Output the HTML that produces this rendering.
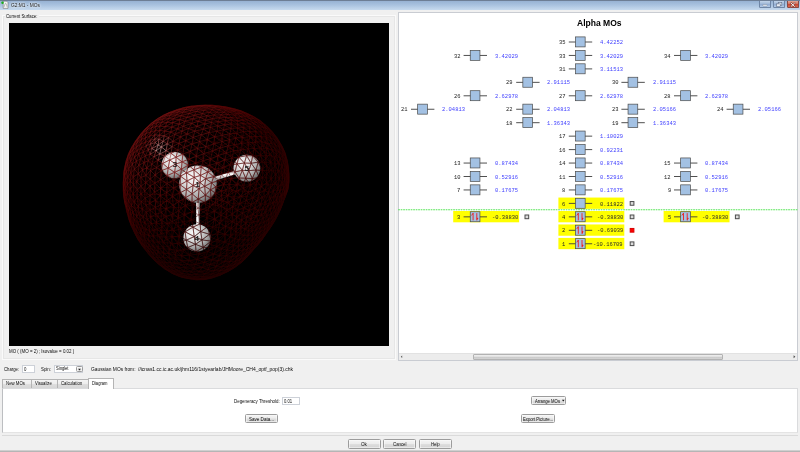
<!DOCTYPE html>
<html><head><meta charset="utf-8"><title>G2:M1 - MOs</title>
<style>
html,body{margin:0;padding:0;}
body{width:800px;height:452px;overflow:hidden;background:#f0f0f0;position:relative;font-family:"Liberation Sans",sans-serif;}
.a{position:absolute;box-sizing:border-box;}
.t{position:absolute;white-space:pre;display:block;}
#tb{left:0;top:0;width:800px;height:9.6px;background:linear-gradient(#6d7e95 0,#6d7e95 0.8px,#98b3d4 1.2px,#a9c2df 5px,#c4d8ed 9.6px);}
.wb{top:0.9px;height:7px;border:0.5px solid #6f86a6;border-top:none;border-radius:0 0 1.5px 1.5px;background:linear-gradient(#c3d5ea,#9db6d6 50%,#8faad0 52%,#b4cbe6);}
#canvas{left:9px;top:22.6px;width:380px;height:323px;background:#000;}
#grp{left:2px;top:15px;width:394px;height:345px;border:1px solid #fafafa;box-shadow:0 0 0 1px #e6e6e6 inset;}
#rp{left:398.3px;top:12.4px;width:399.6px;height:348.2px;background:#fff;border:0.9px solid #c9ccd2;}
#sb{left:399.1px;top:353.4px;width:398px;height:6.5px;background:#ececec;border-top:0.5px solid #e2e2e2;}
#thumb{left:472.5px;top:353.6px;width:250.5px;height:6.1px;border:0.5px solid #b2b2b2;border-radius:1px;background:linear-gradient(#f0f0f0,#dedede 45%,#cacaca 55%,#d4d4d4);}
.inp{background:#fff;border:1px solid #cdd1d8;}
.btn{border:0.6px solid #9c9c9c;border-radius:1.5px;background:linear-gradient(#f4f4f4,#ececec 48%,#dedede 52%,#d2d2d2);box-shadow:0 0 0 0.5px #fcfcfc inset;}
.tab{top:378.8px;height:9.4px;border:1px solid #b4b4b4;border-bottom:none;background:linear-gradient(#f4f4f4,#ececec 50%,#dedede 52%,#d6d6d6);}
#pane{left:2.4px;top:387.6px;width:795.4px;height:45.6px;background:#fff;border:1px solid #dadbdd;border-left-color:#bcbec1;border-bottom-color:#e4e4e4;}
#tabsel{left:88.3px;top:377.5px;width:26px;height:11px;background:#fff;border:1px solid #b4b4b4;border-bottom:none;}
</style></head>
<body>
<div class="a" id="tb"></div>
<div class="a wb" style="left:758.8px;width:12.4px;"></div>
<div class="a wb" style="left:773px;width:12.2px;"></div>
<div class="a wb" style="left:786.6px;width:12.4px;background:linear-gradient(#e3a898,#d27461 48%,#c44632 52%,#d96a52);border-color:#8a4a44;"></div>
<svg class="a" style="left:0;top:0" width="800" height="12" viewBox="0 0 800 12">
 <!-- app icon -->
 <path d="M3.2 1.2h3.4l1.4 1.4v5.8h-4.8z" fill="#f4f4f4" stroke="#6a6a6a" stroke-width="0.55"/>
 <path d="M4.2 6.8c0.4-2 1-3.4 1.5-3.4s0.9 1.5 1.3 3.4" fill="none" stroke="#8a8a8a" stroke-width="0.6"/>
 <circle cx="2.5" cy="2.7" r="1.2" fill="#18b018"/>
 <!-- minimize -->
 <rect x="762.8" y="4.5" width="4.4" height="1.5" rx="0.5" fill="#f4f6fa" stroke="#66768e" stroke-width="0.4"/>
 <!-- restore -->
 <rect x="778.2" y="2.6" width="3.6" height="2.8" fill="#e8edf4" stroke="#55627a" stroke-width="0.5"/>
 <rect x="776.6" y="3.9" width="3.6" height="2.8" fill="#e8edf4" stroke="#55627a" stroke-width="0.5"/>
 <!-- close -->
 <path d="M791.1 3.2l3.4 3.2M794.5 3.2l-3.4 3.2" stroke="#7e3a32" stroke-width="1.7" stroke-linecap="round"/>
 <path d="M791.1 3.2l3.4 3.2M794.5 3.2l-3.4 3.2" stroke="#fff" stroke-width="0.95" stroke-linecap="round"/>
</svg>

<div class="a" id="grp"></div>
<div class="a" style="left:5px;top:13px;width:34px;height:6px;background:#f0f0f0;"></div>
<div class="a" id="canvas">
<svg width="380" height="322.8" viewBox="9 22.6 380 322.8" style="position:absolute;left:0;top:0;filter:blur(0.4px)">
<defs><radialGradient id="sph" cx="0.36" cy="0.32" r="0.75"><stop offset="0" stop-color="#fbfbfb"/><stop offset="0.3" stop-color="#e2e2e2"/><stop offset="0.7" stop-color="#a8a8a8"/><stop offset="1" stop-color="#626262"/></radialGradient><linearGradient id="bnd" x1="0" y1="0" x2="1" y2="0"><stop offset="0" stop-color="#b0b0b0"/><stop offset="0.4" stop-color="#ffffff"/><stop offset="1" stop-color="#808080"/></linearGradient><linearGradient id="bnd2" x1="0" y1="0" x2="0" y2="1"><stop offset="0" stop-color="#c8c8c8"/><stop offset="0.4" stop-color="#ffffff"/><stop offset="1" stop-color="#808080"/></linearGradient><clipPath id="ac"><circle cx="174.8" cy="164.7" r="13.2" /><circle cx="246.9" cy="167.8" r="13.4" /><circle cx="198.0" cy="183.8" r="18.8" /><circle cx="197.0" cy="237.5" r="13.6" /></clipPath>
<g id="fm" fill="none">
<path stroke="#250000" d="M183.2 275.0L173.9 270.8M279.6 208.2L281.3 206.1M233.3 258.7L233.2 255.7M204.3 274.3L210.7 270.7M246.4 228.7L247.7 234.1M232.8 246.3L227.1 252.9M175.8 273.8L183.2 275.0M249.1 251.7L251.8 250.2M191.3 276.9L188.6 274.5M156.2 261.1L150.1 254.6M251.5 251.5L254.2 248.2M282.1 202.2L282.1 199.0M266.2 224.9L264.5 230.1M212.1 247.3L204.2 253.6M195.7 279.3L186.5 277.9M254.0 245.8L256.1 241.1M235.5 265.4L228.0 269.7M241.0 257.9L244.0 257.2M173.9 270.8L180.2 271.5M242.5 240.6L242.8 245.8M221.5 272.6L219.7 271.2M279.6 208.2L282.1 202.2M164.2 261.6L163.7 256.7M251.8 250.2L257.4 244.0M228.0 264.3L227.4 261.1M204.2 253.6L196.0 251.4M172.8 273.3L178.5 275.7M243.3 252.8L245.7 252.9M259.0 240.1L263.5 234.2M241.8 260.6L244.0 257.2M261.5 230.9L256.8 237.4M248.0 244.0L242.7 250.6M272.5 221.6L276.2 214.8M236.1 262.1L232.9 265.4M235.5 265.4L232.9 265.4M172.2 267.0L164.2 261.6M164.4 268.3L170.4 271.8M247.7 234.1L242.5 240.6M242.7 250.6L243.3 252.8M270.4 208.7L270.4 213.8M167.6 268.9L166.0 265.7M150.1 254.6L149.0 251.4M240.9 262.5L233.7 267.8M198.9 263.1L191.8 265.3M243.3 252.8L241.0 257.9M232.3 240.4L226.7 246.9M227.1 252.9L226.7 246.9M162.6 266.6L167.6 268.9M253.1 237.7L252.5 242.6M187.2 270.9L185.1 266.7M220.2 247.4L212.5 254.0M227.4 261.1L221.4 262.3M237.8 240.9L238.2 246.3M229.7 265.8L236.1 262.1M222.1 266.1L221.4 262.3M183.2 275.0L188.6 274.5M251.8 250.2L254.2 248.2M166.0 265.7L172.2 267.0M240.9 262.5L238.3 264.2M257.4 244.0L259.0 240.1M257.1 232.5L253.1 237.7M182.0 256.1L176.1 257.6M277.1 201.9L273.8 208.4M178.6 267.4L171.1 262.8M266.2 224.9L269.5 223.3M283.4 200.5L286.3 193.1M254.0 245.8L257.4 244.0M171.1 262.8L169.1 257.4M219.7 271.2L212.3 273.2M254.2 248.2L259.7 242.2M227.4 261.1L227.6 257.7M210.4 277.9L219.3 275.0M252.4 227.8L246.4 228.7M181.5 276.7L178.5 275.7M261.9 238.3L266.3 232.1M185.2 276.9L175.8 273.8M284.5 196.0L282.1 202.2M222.0 258.2L214.2 263.4M151.8 257.3L156.2 261.1M228.0 264.3L223.3 268.2M233.7 267.8L231.2 268.9M191.8 265.3L183.0 261.4M259.0 240.1L261.9 238.3M200.1 278.0L197.8 276.3M219.0 241.7L212.1 247.3M156.2 261.1L160.6 263.6M220.2 247.4L219.0 241.7M261.7 221.5L262.0 226.5M256.8 237.4L253.1 237.7M263.5 234.2L264.5 230.1M233.3 258.7L237.7 258.4M167.6 268.9L173.9 270.8M164.2 261.6L171.1 262.8M276.2 214.8L279.6 208.2M216.5 275.4L208.8 277.4M266.4 215.0L261.7 221.5M256.1 241.1L260.4 235.9M261.5 230.9L257.1 232.5M187.2 270.9L193.8 269.4M210.7 270.7L202.5 271.2M273.0 223.3L276.6 216.9M162.6 266.6L156.2 261.1M172.2 267.0L178.6 267.4M249.2 254.2L254.2 248.2M264.3 236.0L268.7 229.7M247.7 234.1L242.2 235.0M164.4 268.3L162.6 266.6M222.0 258.2L220.1 253.5M232.8 246.3L237.8 240.9M242.5 240.6L237.8 240.9M150.1 254.6L154.1 257.6M225.6 269.4L228.0 269.7M216.5 275.4L221.5 272.6M233.3 258.7L227.4 261.1M257.4 244.0L259.7 242.2M149.0 251.4L153.5 253.9M260.4 235.9L263.5 234.2M276.7 207.4L276.6 211.4M233.2 255.7L238.4 254.7M191.3 276.9L183.2 275.0M264.5 230.1L269.5 223.3M273.0 213.8L269.7 219.6M238.7 261.9L232.9 265.4M261.9 238.3L264.3 236.0M262.0 226.5L257.1 232.5M267.9 228.2L272.5 221.6M278.2 213.1L281.3 206.1M212.5 254.0L212.1 247.3M225.6 269.4L232.9 265.4M221.5 272.6L215.1 274.6M183.2 275.0L180.2 271.5M244.0 257.2L249.1 251.7M279.6 208.2L279.5 205.4M214.2 263.4L206.7 263.9M204.2 253.6L197.7 257.9M208.8 277.4L215.1 274.6M257.1 232.5L252.7 233.8M246.4 228.7L242.2 235.0M232.8 246.3L226.7 246.9M253.1 237.7L248.2 238.6M178.6 267.4L185.1 266.7M188.6 274.5L187.2 270.9M281.3 206.1L282.1 202.2M272.5 221.6L273.6 217.0M156.2 261.1L154.1 257.6M171.1 262.8L177.5 262.9M219.3 275.0L213.3 277.2M138.6 240.1L141.9 244.9M221.5 272.6L225.6 269.4M232.8 246.3L238.2 246.3M242.7 250.6L238.6 250.5M242.5 240.6L238.2 246.3M167.6 268.9L160.6 263.6M153.5 253.9L157.1 254.5M244.5 259.1L238.3 264.2M256.1 241.1L259.0 240.1M143.1 246.7L146.9 251.5M170.4 271.8L167.6 268.9M206.7 263.9L199.5 267.2M195.7 279.3L202.6 279.1M242.8 245.8L242.7 250.6M183.0 261.4L185.1 266.7M172.2 267.0L171.1 262.8M233.2 255.7L227.6 257.7M188.4 254.0L182.0 256.1M263.5 234.2L266.3 232.1M208.0 267.4L206.7 263.9M213.6 259.1L205.1 258.6M242.7 250.6L238.4 254.7M198.9 263.1L190.4 260.1M251.7 222.1L252.4 227.8M236.1 262.1L241.0 257.9M257.1 232.5L256.8 237.4M232.9 265.4L228.0 269.7M253.1 237.7L248.0 244.0M158.1 263.5L151.8 257.3M225.6 269.4L219.7 271.2M232.3 262.8L229.7 265.8M171.1 262.8L163.7 256.7M254.2 248.2L257.4 244.0M215.3 267.2L210.7 270.7M261.9 238.3L263.5 234.2M276.2 214.8L278.2 213.1M160.6 263.6L159.6 260.2M204.2 253.6L203.2 246.9M202.6 279.1L200.1 278.0M257.4 244.0L261.9 238.3M231.2 268.9L223.5 272.7M225.6 241.8L220.2 247.4M238.2 246.3L238.6 250.5M264.5 230.1L267.9 228.2M199.5 267.2L193.8 269.4M238.3 264.2L233.7 267.8M267.9 228.2L270.9 225.9M216.5 275.4L219.3 275.0M151.8 257.3L146.9 251.5M213.6 259.1L212.5 254.0M222.0 258.2L213.6 259.1M228.0 264.3L229.7 265.8M159.6 260.2L153.5 253.9M202.6 279.1L208.8 277.4M276.7 207.4L273.0 213.8M266.4 215.0L266.8 220.7M206.2 276.4L197.8 276.3M273.0 223.3L274.8 219.6M206.7 263.9L205.1 258.6M283.4 200.5L282.5 203.6M219.7 271.2L223.3 268.2M183.0 261.4L177.5 262.9M250.6 247.6L256.1 241.1M197.7 257.9L188.4 254.0M261.7 221.5L257.4 227.3M222.1 266.1L216.6 269.5M263.5 234.2L267.9 228.2M248.2 238.6L242.8 245.8M202.5 271.2L193.8 269.4M198.9 263.1L197.7 257.9M177.5 262.9L169.1 257.4M186.5 277.9L178.5 275.7M246.2 257.6L244.5 259.1M272.5 221.6L274.8 219.6M238.7 261.9L235.5 265.4M190.4 260.1L183.0 261.4M222.1 266.1L223.3 268.2M262.0 226.5L261.5 230.9M267.9 228.2L269.5 223.3M244.0 257.2L245.7 252.9M214.2 263.4L208.0 267.4M269.7 219.6L266.2 224.9M188.6 274.5L180.2 271.5M220.1 253.5L212.5 254.0M249.2 254.2L251.5 251.5M238.7 261.9L236.1 262.1M204.0 279.2L202.6 279.1M232.3 240.4L237.8 240.9M262.2 215.4L261.7 221.5M197.8 276.3L195.4 273.3M273.6 217.0L276.2 214.8M244.5 259.1L240.9 262.5M191.8 265.3L190.4 260.1M266.4 215.0L262.2 215.4M279.4 201.5L279.5 205.4M232.8 246.3L232.3 240.4M143.1 246.7L141.9 244.9M276.7 207.4L279.5 205.4M257.2 221.3L252.4 227.8M238.7 261.9L241.0 257.9M266.3 232.1L270.9 225.9M170.4 271.8L162.6 266.6M284.5 196.0L286.3 193.1M273.0 213.8L273.6 217.0M197.7 257.9L196.0 251.4M233.2 255.7L227.4 261.1M261.7 221.5L257.2 221.3M221.4 262.3L214.2 263.4M213.6 259.1L206.7 263.9M244.0 257.2L246.4 256.3M244.5 259.1L241.8 260.6M286.3 193.1L285.2 196.5M279.4 201.5L282.1 199.0M191.3 276.9L197.8 276.3M257.4 227.3L257.1 232.5M270.9 225.9L272.5 221.6M280.1 209.8L281.3 206.1M284.5 196.0L283.4 200.5M273.0 213.8L270.4 213.8M206.7 263.9L198.9 263.1M242.8 245.8L238.6 250.5M246.4 256.3L249.1 251.7M233.2 255.7L232.8 251.4M197.8 276.3L204.3 274.3M266.8 220.7L262.0 226.5M150.1 254.6L146.9 251.5M242.2 235.0L237.8 240.9M195.4 273.3L187.2 270.9M279.5 205.4L282.1 202.2M160.6 263.6L154.1 257.6M269.7 219.6L266.8 220.7M210.4 277.9L208.8 277.4M154.1 257.6L153.5 253.9M245.7 252.9L250.6 247.6M202.6 279.1L192.5 278.5M231.2 268.9L227.7 271.2M246.2 257.6L249.2 254.2M188.6 274.5L195.4 273.3M204.3 274.3L202.5 271.2M158.1 263.5L156.2 261.1M249.1 251.7L254.0 245.8M225.6 269.4L223.3 268.2M241.8 260.6L238.3 264.2M273.0 213.8L276.6 211.4M190.4 260.1L188.4 254.0M262.0 226.5L257.4 227.3M208.0 267.4L202.5 271.2M227.6 257.7L222.0 258.2M252.5 242.6L247.3 248.6M269.7 219.6L273.6 217.0M170.4 271.8L175.8 273.8M259.7 242.2L261.9 238.3M252.7 233.8L248.2 238.6M276.6 216.9L280.1 209.8M252.5 242.6L256.1 241.1M246.4 256.3L249.2 254.2M238.6 250.5L238.4 254.7M185.1 266.7L177.5 262.9M238.3 264.2L231.2 268.9M232.3 240.4L236.7 234.4M197.7 257.9L190.4 260.1M215.3 267.2L216.6 269.5M223.3 268.2L216.6 269.5M244.5 259.1L246.4 256.3M282.5 203.6L281.3 206.1M227.6 257.7L227.1 252.9M243.3 252.8L237.7 258.4M248.2 238.6L248.0 244.0M180.2 271.5L178.6 267.4M159.6 260.2L157.1 254.5M245.7 252.9L249.1 251.7M231.2 268.9L228.0 269.7M228.0 264.3L222.1 266.1M233.2 255.7L238.6 250.5M206.2 276.4L204.3 274.3M237.7 258.4L236.1 262.1M256.8 237.4L260.4 235.9M254.2 248.2L256.9 245.5M238.3 264.2L235.5 265.4M266.8 220.7L261.7 221.5M208.0 267.4L210.7 270.7M228.0 269.7L223.5 272.7M150.1 254.6L145.2 248.2M195.4 273.3L202.5 271.2M279.4 201.5L276.7 207.4M215.1 274.6L206.2 276.4M261.5 230.9L264.5 230.1M237.7 258.4L241.0 257.9M257.4 227.3L252.4 227.8M199.5 267.2L202.5 271.2M158.1 263.5L162.6 266.6M178.5 275.7L170.4 271.8M186.5 277.9L185.2 276.9M227.7 271.2L219.3 275.0M252.5 242.6L250.6 247.6M227.1 252.9L220.1 253.5M220.1 253.5L213.6 259.1M190.4 260.1L182.0 256.1M273.8 208.4L273.0 213.8M192.5 278.5L191.3 276.9M197.8 276.3L188.6 274.5M242.2 235.0L236.7 234.4M160.6 263.6L166.0 265.7M154.1 257.6L159.6 260.2M257.2 221.3L257.4 227.3M266.3 232.1L267.9 228.2M247.3 248.6L250.6 247.6M284.6 193.5L282.1 199.0M204.0 279.2L210.4 277.9M242.8 245.8L238.2 246.3M250.6 247.6L254.0 245.8M221.5 272.6L223.5 272.7M266.2 224.9L262.0 226.5M262.2 215.4L257.2 221.3M268.7 229.7L270.9 225.9M221.4 262.3L215.3 267.2M180.2 271.5L187.2 270.9M212.3 273.2L210.7 270.7M191.8 265.3L185.1 266.7M269.7 219.6L269.5 223.3M226.7 246.9L220.2 247.4M252.7 233.8L247.7 234.1M227.7 271.2L223.5 272.7M238.7 261.9L244.0 257.2M220.1 253.5L220.2 247.4M274.8 219.6L276.2 214.8M266.8 220.7L266.2 224.9M252.5 242.6L248.0 244.0M242.2 235.0L242.5 240.6M159.6 260.2L164.2 261.6M273.6 217.0L276.6 211.4M214.2 263.4L213.6 259.1M173.9 270.8L166.0 265.7M157.1 254.5L163.7 256.7M210.4 277.9L202.6 279.1M270.4 213.8L266.8 220.7M154.1 257.6L149.0 251.4M261.5 230.9L260.4 235.9M226.7 246.9L225.6 241.8M257.4 227.3L252.7 233.8M204.3 274.3L195.4 273.3M270.9 225.9L274.8 219.6M175.8 273.8L173.9 270.8M249.1 251.7L250.6 247.6M193.8 269.4L185.1 266.7M246.4 256.3L251.8 250.2M205.1 258.6L198.9 263.1M221.4 262.3L222.0 258.2M232.8 251.4L227.1 252.9M227.6 257.7L221.4 262.3M248.2 238.6L242.5 240.6M195.4 273.3L193.8 269.4M279.5 205.4L282.1 199.0M283.4 200.5L281.3 206.1M212.5 254.0L204.2 253.6M210.4 277.9L216.5 275.4M252.7 233.8L253.1 237.7M276.6 216.9L278.2 213.1M225.6 269.4L229.7 265.8M176.1 257.6L169.1 257.4M241.8 260.6L235.5 265.4M229.7 265.8L223.3 268.2M256.9 245.5L259.7 242.2M266.2 224.9L261.5 230.9M232.3 262.8L228.0 264.3M191.8 265.3L193.8 269.4M243.3 252.8L238.4 254.7M180.2 271.5L172.2 267.0M241.0 257.9L245.7 252.9M283.4 200.5L282.1 202.2M215.3 267.2L208.0 267.4M166.0 265.7L164.2 261.6M208.8 277.4L206.2 276.4M266.3 232.1L268.7 229.7M259.7 242.2L264.3 236.0M248.0 244.0L242.8 245.8M236.7 234.4L237.8 240.9M199.5 267.2L191.8 265.3M163.7 256.7L169.1 257.4M235.5 265.4L231.2 268.9M244.5 259.1L249.2 254.2M146.9 251.5L145.2 248.2M256.8 237.4L252.5 242.6M252.4 227.8L247.7 234.1M247.3 248.6L242.7 250.6M164.2 261.6L157.1 254.5M251.8 250.2L254.0 245.8M151.8 257.3L150.1 254.6M259.0 240.1L260.4 235.9M227.1 252.9L222.0 258.2M232.8 251.4L238.6 250.5M248.0 244.0L247.3 248.6M205.1 258.6L204.2 253.6M195.7 279.3L192.5 278.5M192.5 278.5L185.2 276.9M254.0 245.8L259.0 240.1M216.5 275.4L223.5 272.7M183.0 261.4L176.1 257.6M210.4 277.9L213.3 277.2M247.7 234.1L248.2 238.6M247.3 248.6L243.3 252.8M215.3 267.2L214.2 263.4M222.1 266.1L215.3 267.2M276.7 207.4L273.8 208.4M215.1 274.6L212.3 273.2M206.2 276.4L212.3 273.2M270.9 225.9L273.0 223.3M178.5 275.7L175.8 273.8M241.8 260.6L246.4 256.3M238.4 254.7L237.7 258.4M274.8 219.6L276.6 216.9M187.2 270.9L178.6 267.4M273.8 208.4L270.4 213.8M227.4 261.1L222.1 266.1M279.4 201.5L277.1 201.9M212.3 273.2L204.3 274.3M141.9 244.9L146.9 251.5M229.7 265.8L232.9 265.4M215.1 274.6L219.7 271.2M270.4 208.7L266.4 215.0M233.7 267.8L227.7 271.2M232.3 240.4L225.6 241.8M226.7 246.9L220.1 253.5M186.5 277.9L192.5 278.5M260.4 235.9L264.5 230.1M256.8 237.4L256.1 241.1M277.1 201.9L276.7 207.4M176.1 257.6L177.5 262.9M199.5 267.2L198.9 263.1M220.2 247.4L212.1 247.3M192.5 278.5L200.1 278.0M268.7 229.7L273.0 223.3M269.5 223.3L272.5 221.6M223.5 272.7L219.3 275.0M270.4 213.8L269.7 219.6M178.5 275.7L185.2 276.9M200.1 278.0L191.3 276.9M247.3 248.6L245.7 252.9M175.8 273.8L167.6 268.9M276.6 211.4L279.6 208.2M221.5 272.6L228.0 269.7M178.6 267.4L177.5 262.9M274.8 219.6L278.2 213.1M273.8 208.4L270.4 208.7M283.4 200.5L285.2 196.5M219.7 271.2L216.6 269.5M216.6 269.5L210.7 270.7M232.8 251.4L227.6 257.7M212.3 273.2L216.6 269.5M233.3 258.7L238.4 254.7M185.2 276.9L183.2 275.0M149.0 251.4L145.2 248.2M284.5 196.0L282.1 199.0M212.5 254.0L205.1 258.6M276.2 214.8L276.6 211.4M173.9 270.8L172.2 267.0M232.3 262.8L237.7 258.4M276.6 211.4L279.5 205.4M205.1 258.6L197.7 257.9M249.2 254.2L251.8 250.2M264.3 236.0L266.3 232.1M232.8 251.4L232.8 246.3M148.5 253.5L146.9 251.5M183.0 261.4L182.0 256.1M164.4 268.3L158.1 263.5M278.2 213.1L280.1 209.8M269.5 223.3L273.6 217.0M141.9 244.9L145.2 248.2M166.0 265.7L159.6 260.2M233.3 258.7L228.0 264.3M200.1 278.0L206.2 276.4M216.5 275.4L215.1 274.6M208.8 277.4L200.1 278.0M172.8 273.3L170.4 271.8M232.8 251.4L238.2 246.3M241.8 260.6L238.7 261.9M162.6 266.6L160.6 263.6M232.3 262.8L233.3 258.7M185.2 276.9L191.3 276.9M252.4 227.8L252.7 233.8M278.2 213.1L279.6 208.2M232.3 262.8L236.1 262.1M208.0 267.4L199.5 267.2M270.4 213.8L266.4 215.0"/>
<path stroke="#330101" d="M266.0 125.0L271.9 130.9M288.2 185.7L288.0 188.7M238.6 215.3L231.8 215.0M228.0 221.5L231.8 215.0M133.5 229.4L136.4 233.8M271.3 138.2L274.6 139.0M273.4 190.3L277.0 184.2M262.0 183.7L259.2 177.1M284.3 150.9L286.9 159.2M196.0 251.4L188.4 254.0M174.8 251.7L172.5 244.1M229.5 227.8L225.2 234.0M140.2 237.6L144.6 245.0M287.0 188.9L286.3 193.1M249.1 209.8L243.3 208.5M273.4 196.6L274.0 202.4M254.1 202.8L249.1 209.8M284.9 178.8L282.5 177.9M272.6 184.0L277.0 184.2M148.5 239.8L149.0 235.3M136.4 233.8L136.5 230.7M148.7 247.8L144.6 245.0M182.0 256.1L180.8 250.2M283.2 153.8L281.7 147.5M250.8 215.9L244.7 215.8M163.7 256.7L157.8 250.6M229.5 227.8L228.0 221.5M265.8 177.3L270.8 178.0M240.0 221.4L235.4 227.9M277.0 184.2L275.7 177.4M286.8 180.5L287.9 183.1M270.2 202.3L266.2 208.8M272.4 133.9L275.7 136.2M246.1 222.0L240.0 221.4M282.1 164.4L281.3 170.9M195.5 243.9L187.8 247.1M262.0 183.7L268.0 184.5M152.8 245.3L148.5 239.8M284.6 190.3L286.8 185.7M271.9 130.9L276.9 137.2M188.4 254.0L180.8 250.2M140.2 237.6L144.2 241.1M274.6 139.0L272.4 133.9M223.1 227.5L216.0 227.0M153.5 253.9L148.7 247.8M232.3 240.4L231.8 234.6M268.5 191.2L263.7 190.7M255.6 209.3L257.0 214.9M157.8 250.6L157.9 246.3M148.7 247.8L144.2 241.1M172.5 244.1L171.9 236.8M285.1 166.7L287.0 168.9M248.0 203.3L243.3 208.5M236.0 208.8L238.6 215.3M270.8 178.0L275.7 177.4M276.4 150.6L279.7 157.3M231.8 234.6L235.4 227.9M287.2 163.5L288.2 165.9M180.8 250.2L174.8 251.7M168.7 253.0L168.0 246.1M273.5 170.4L270.7 161.9M223.1 227.5L221.6 220.0M286.8 185.7L284.6 193.5M280.5 189.6L283.2 184.1M259.9 120.1L266.0 125.0M246.4 228.7L241.1 228.2M169.1 257.4L163.8 252.6M228.0 221.5L234.1 220.5M284.9 178.8L286.0 173.6M225.6 241.8L219.0 241.7M277.4 190.2L277.1 196.4M266.2 208.8L266.4 215.0M283.4 188.9L285.2 184.7M285.2 184.7L283.2 184.1M240.0 221.4L234.1 220.5M263.7 190.7L264.8 196.5M280.0 151.6L279.0 146.1M249.1 209.8L250.8 215.9M286.9 159.2L285.4 153.5M157.9 246.3L152.8 240.3M284.9 178.8L285.2 184.7M134.5 232.4L136.7 236.4M163.0 246.6L162.6 240.9M172.5 244.1L166.9 239.3M288.3 171.1L288.9 173.6M284.6 190.3L283.4 188.9M250.8 215.9L246.1 222.0M282.0 195.8L284.6 193.5M263.7 190.7L257.6 190.7M157.8 241.1L157.7 234.7M280.0 151.6L282.9 159.4M276.4 150.6L276.0 156.5M268.5 191.2L268.0 184.5M266.8 128.2L269.3 128.8M230.1 208.7L231.8 215.0M286.0 173.6L286.8 180.5M133.5 229.4L133.2 226.1M219.0 241.7L217.4 234.2M271.3 138.2L268.8 132.2M277.1 196.4L273.4 196.6M163.0 246.6L157.8 241.1M282.1 164.4L279.4 163.6M176.1 257.6L168.7 253.0M241.1 228.2L235.4 227.9M282.0 195.8L279.4 201.5M273.5 170.4L277.7 170.3M285.2 184.7L286.8 180.5M217.4 234.2L211.2 240.7M258.3 197.5L254.1 202.8M271.3 138.2L275.5 144.6M257.6 190.7L258.3 197.5M282.9 159.4L283.2 153.8M212.1 247.3L203.2 246.9M262.0 183.7L265.8 177.3M282.0 195.8L280.0 196.1M196.0 251.4L187.8 247.1M240.0 221.4L241.1 228.2M258.3 197.5L252.2 197.2M286.8 180.5L287.8 175.5M273.4 196.6L270.2 202.3M226.5 214.4L231.8 215.0M268.8 132.2L272.4 133.9M157.8 250.6L163.8 252.6M244.7 215.8L240.0 221.4M149.0 251.4L148.7 247.8M136.4 233.8L140.2 237.6M257.6 190.7L251.4 191.3M269.5 196.7L265.2 204.1M275.7 177.4L273.5 170.4M277.0 184.2L279.5 177.8M286.8 180.5L286.8 185.7M136.7 236.4L136.4 233.8M217.4 234.2L216.0 227.0M140.2 237.6L140.3 233.5M228.0 221.5L221.6 220.0M273.4 196.6L269.5 196.7M223.1 227.5L217.4 234.2M254.1 202.8L248.0 203.3M268.8 132.2L274.6 139.0M265.2 204.1L266.2 208.8M157.8 250.6L152.8 245.3M280.4 185.0L282.5 177.9M285.1 166.7L285.3 161.3M280.0 196.1L277.1 201.9M271.6 155.4L276.0 156.5M283.2 153.8L285.3 161.3M212.1 247.3L211.2 240.7M148.7 247.8L152.8 249.3M248.0 203.3L249.1 209.8M287.2 163.5L286.9 159.2M203.2 246.9L196.0 251.4M241.1 228.2L236.7 234.4M274.6 139.0L277.5 140.2M284.0 171.9L281.3 170.9M255.6 209.3L250.8 215.9M133.5 229.4L136.7 236.4M285.1 166.7L286.0 173.6M133.2 226.1L136.4 233.8M140.3 233.5L144.2 236.7M196.0 251.4L195.5 243.9M180.8 250.2L172.5 244.1M274.6 139.0L279.0 146.1M140.7 241.2L144.6 245.0M148.2 243.7L144.2 236.7M279.7 157.3L282.9 159.4M270.4 208.7L266.2 208.8M260.1 203.8L261.1 209.4M281.7 147.5L280.2 142.9M187.8 247.1L180.8 250.2M172.5 244.1L168.0 246.1M277.1 201.9L274.0 202.4M277.4 190.2L273.4 196.6M246.2 196.0L241.1 202.7M287.0 168.9L288.3 171.1M248.0 203.3L241.1 202.7M288.3 171.1L288.2 165.9M266.2 208.8L262.2 215.4M279.4 163.6L276.0 156.5M287.2 163.5L288.3 171.1M288.9 173.6L288.9 181.1M275.7 136.2L276.9 137.2M163.8 252.6L157.9 246.3M284.6 193.5L287.0 188.9M277.7 170.3L279.4 163.6M284.0 171.9L282.5 177.9M255.6 209.3L249.1 209.8M241.1 202.7L243.3 208.5M229.5 227.8L235.4 227.9M136.4 233.8L140.7 241.2M271.7 143.1L275.5 144.6M203.2 246.9L202.0 239.5M188.4 254.0L187.8 247.1M283.4 188.9L280.0 196.1M136.7 236.4L141.9 244.9M284.6 193.5L284.5 196.0M225.2 234.0L219.0 241.7M168.0 246.1L162.6 240.9M260.1 203.8L254.1 202.8M258.3 197.5L260.1 203.8M281.7 147.5L285.5 156.5M286.3 193.1L288.2 185.7M179.2 242.2L171.9 236.8M288.3 171.1L288.7 177.8M266.2 208.8L261.1 209.4M168.7 253.0L169.1 257.4M275.7 136.2L280.2 142.9M255.4 184.6L262.0 183.7M138.6 240.1L136.7 236.4M285.2 184.7L286.8 185.7M217.4 234.2L209.5 233.9M273.4 190.3L269.5 196.7M266.8 128.2L272.4 133.9M286.9 159.2L288.2 165.9M288.7 177.8L288.9 173.6M261.1 209.4L257.0 214.9M153.3 235.8L152.8 240.3M244.7 215.8L246.1 222.0M280.2 142.9L282.1 145.9M269.5 196.7L270.2 202.3M257.6 190.7L252.2 197.2M282.9 159.4L285.3 161.3M263.7 190.7L268.0 184.5M180.8 250.2L179.2 242.2M268.0 184.5L265.8 177.3M140.7 241.2L145.2 248.2M228.0 221.5L223.1 227.5M229.5 227.8L234.1 220.5M280.4 185.0L279.5 177.8M187.8 247.1L186.2 239.8M284.0 171.9L286.0 173.6M280.5 189.6L277.1 196.4M280.0 196.1L279.4 201.5M140.3 233.5L144.2 241.1M252.2 197.2L254.1 202.8M157.8 241.1L157.9 246.3M284.6 190.3L285.2 184.7M168.7 253.0L163.8 252.6M285.3 161.3L285.5 156.5M241.1 228.2L242.2 235.0M275.7 177.4L277.7 170.3M228.0 221.5L226.5 214.4M148.2 243.7L144.2 241.1M136.7 236.4L140.7 241.2M275.5 144.6L279.0 146.1M287.9 183.1L288.7 177.8M265.2 204.1L261.1 209.4M251.7 222.1L246.4 228.7M231.8 234.6L225.6 241.8M288.2 185.7L288.9 181.1M209.5 233.9L202.0 239.5M157.8 241.1L152.8 240.3M288.2 165.9L288.9 173.6M194.2 236.2L186.2 239.8M262.2 215.4L257.0 214.9M226.5 214.4L221.6 220.0M203.2 246.9L195.5 243.9M277.0 184.2L280.4 185.0M140.7 241.2L140.2 237.6M279.7 157.3L280.0 151.6M264.8 196.5L265.2 204.1M148.5 239.8L144.2 236.7M202.0 239.5L194.2 236.2M277.4 190.2L280.4 185.0M244.7 215.8L238.6 215.3M280.4 185.0L283.2 184.1M157.1 254.5L152.8 249.3M179.2 242.2L179.4 235.5M257.2 221.3L251.7 222.1M246.2 196.0L248.0 203.3M287.0 168.9L287.2 163.5M274.0 202.4L270.4 208.7M148.7 247.8L148.2 243.7M275.7 136.2L271.9 130.9M176.1 257.6L174.8 251.7M275.7 177.4L279.5 177.8M283.2 184.1L282.5 177.9M279.7 157.3L282.1 164.4M168.0 246.1L166.9 239.3M260.1 203.8L255.6 209.3M277.7 170.3L275.2 163.3M148.5 239.8L144.7 233.1M281.7 147.5L284.3 150.9M225.6 241.8L225.2 234.0M271.7 143.1L271.3 138.2M277.4 190.2L273.4 190.3M187.8 247.1L179.2 242.2M279.5 177.8L281.3 170.9M136.5 230.7L140.3 233.5M271.7 143.1L272.2 149.1M186.2 239.8L179.4 235.5M283.4 188.9L282.0 195.8M259.2 177.1L265.8 177.3M168.0 246.1L163.0 246.6M251.7 222.1L246.1 222.0M243.3 208.5L244.7 215.8M241.1 202.7L236.0 208.8M271.7 143.1L276.4 150.6M179.2 242.2L172.5 244.1M282.1 164.4L282.9 159.4M276.0 156.5L272.2 149.1M283.4 188.9L280.5 189.6M270.8 178.0L273.5 170.4M225.2 234.0L217.4 234.2M273.4 190.3L273.4 196.6M270.7 161.9L271.6 155.4M287.8 175.5L288.3 171.1M288.7 177.8L288.9 181.1M286.3 193.1L288.0 188.7M261.1 209.4L262.2 215.4M152.8 249.3L152.8 245.3M282.0 195.8L282.1 199.0M280.2 142.9L276.9 137.2M268.5 191.2L269.5 196.7M279.5 177.8L282.5 177.9M282.1 164.4L284.0 171.9M263.7 190.7L262.0 183.7M284.5 196.0L287.0 188.9M281.3 170.9L279.4 163.6M285.5 156.5L286.9 159.2M131.2 225.3L133.5 229.4M225.2 234.0L223.1 227.5M276.4 150.6L275.5 144.6M273.4 190.3L268.5 191.2M174.8 251.7L168.0 246.1M277.7 170.3L281.3 170.9M216.0 227.0L209.5 233.9M257.0 214.9L251.7 222.1M284.0 171.9L285.1 166.7M280.5 189.6L280.0 196.1M282.9 159.4L285.1 166.7M166.9 239.3L162.6 240.9M251.4 191.3L252.2 197.2M269.3 128.8L266.0 125.0M211.2 240.7L202.0 239.5M284.6 190.3L284.6 193.5M268.0 184.5L270.8 178.0M275.5 144.6L274.6 139.0M234.1 220.5L235.4 227.9M286.8 185.7L287.9 183.1M257.6 190.7L255.4 184.6M277.5 140.2L280.2 142.9M287.9 183.1L288.2 185.7M284.0 171.9L284.9 178.8M280.5 189.6L277.4 190.2M269.5 196.7L264.8 196.5M238.6 215.3L234.1 220.5M268.8 169.8L273.5 170.4M252.2 197.2L248.0 203.3M275.2 163.3L276.0 156.5M285.3 161.3L287.2 163.5M275.5 144.6L280.0 151.6M284.3 150.9L282.1 145.9M270.7 161.9L275.2 163.3M141.9 244.9L140.7 241.2M144.6 245.0L144.2 241.1M287.9 183.1L287.0 188.9M202.0 239.5L195.5 243.9M277.4 190.2L277.0 184.2M163.0 246.6L157.9 246.3M231.8 234.6L225.2 234.0M280.0 196.1L277.1 196.4M246.1 222.0L246.4 228.7M286.0 173.6L287.0 168.9M252.2 197.2L246.2 196.0M209.5 233.9L200.7 231.2M277.1 196.4L274.0 202.4M274.0 202.4L273.8 208.4M285.3 161.3L287.0 168.9M211.2 240.7L209.5 233.9M131.2 225.3L134.5 232.4M264.8 196.5L260.1 203.8M144.2 236.7L144.7 233.1M279.0 146.1L281.7 147.5M265.2 204.1L260.1 203.8M287.0 188.9L288.2 185.7M148.2 243.7L152.8 245.3M288.0 188.7L288.9 181.1M157.1 254.5L157.8 250.6M272.6 184.0L275.7 177.4M279.5 177.8L277.7 170.3M273.4 190.3L272.6 184.0M186.2 239.8L179.2 242.2M231.8 234.6L236.7 234.4M264.8 196.5L258.3 197.5M279.0 146.1L283.2 153.8M149.0 251.4L144.6 245.0M254.1 202.8L255.6 209.3M152.8 249.3L157.8 250.6M148.2 243.7L148.5 239.8M148.5 239.8L152.8 240.3M287.0 168.9L287.8 175.5M209.5 233.9L207.9 226.1M274.0 202.4L270.2 202.3M275.2 163.3L279.4 163.6M234.7 203.5L236.0 208.8M200.7 231.2L194.2 236.2M130.4 222.0L133.5 229.4M270.8 178.0L268.8 169.8M229.5 227.8L223.1 227.5M279.7 157.3L276.0 156.5M202.0 239.5L200.7 231.2M270.2 202.3L270.4 208.7M243.3 208.5L238.6 215.3M152.8 249.3L148.2 243.7M272.4 133.9L269.3 128.8M268.8 169.8L270.7 161.9M282.1 164.4L285.1 166.7M162.6 240.9L157.8 241.1M283.4 188.9L283.2 184.1M283.2 153.8L285.5 156.5M285.5 156.5L284.3 150.9M152.8 245.3L157.9 246.3M163.7 256.7L163.8 252.6M131.2 225.3L130.4 222.0M263.0 123.1L266.0 125.0M174.8 251.7L168.7 253.0M282.5 177.9L281.3 170.9M276.4 150.6L272.2 149.1M287.8 175.5L288.7 177.8M257.0 214.9L257.2 221.3M152.8 240.3L149.0 235.3M284.9 178.8L283.2 184.1M268.5 191.2L264.8 196.5M211.2 240.7L203.2 246.9M195.5 243.9L186.2 239.8M152.8 245.3L152.8 240.3M276.4 150.6L280.0 151.6M287.8 175.5L287.9 183.1M270.2 202.3L265.2 204.1M277.5 140.2L275.7 136.2M288.7 177.8L288.2 185.7M216.0 227.0L207.9 226.1M243.3 208.5L236.0 208.8M286.8 185.7L287.0 188.9M280.5 189.6L280.4 185.0M153.5 253.9L152.8 249.3M163.0 246.6L163.8 252.6M272.4 133.9L277.5 140.2M238.6 215.3L240.0 221.4M182.0 256.1L174.8 251.7M251.4 191.3L246.2 196.0M275.2 163.3L271.6 155.4M285.5 156.5L287.2 163.5M269.3 128.8L271.9 130.9M285.2 196.5L288.0 188.7M236.0 208.8L231.8 215.0M263.0 123.1L269.3 128.8M221.6 220.0L216.0 227.0M279.7 157.3L279.4 163.6M273.5 170.4L275.2 163.3M257.6 190.7L262.0 183.7M261.1 209.4L255.6 209.3M280.2 142.9L284.3 150.9M134.5 232.4L133.5 229.4M136.5 230.7L140.2 237.6M284.9 178.8L286.8 180.5M219.0 241.7L211.2 240.7M277.1 196.4L277.1 201.9M268.0 184.5L272.6 184.0M250.8 215.9L251.7 222.1M284.6 190.3L282.0 195.8M284.3 150.9L285.4 153.5M168.7 253.0L163.0 246.6M263.7 190.7L258.3 197.5M235.4 227.9L236.7 234.4M277.5 140.2L281.7 147.5M280.0 151.6L283.2 153.8M279.0 146.1L277.5 140.2M257.0 214.9L250.8 215.9M249.1 209.8L244.7 215.8M231.8 234.6L229.5 227.8M286.9 159.2L287.5 161.8M246.1 222.0L241.1 228.2M272.6 184.0L270.8 178.0M286.0 173.6L287.8 175.5M271.6 155.4L272.2 149.1M144.2 241.1L144.2 236.7M269.3 128.8L275.7 136.2M195.5 243.9L194.2 236.2M236.0 208.8L230.1 208.7M157.8 241.1L153.3 235.8M231.8 215.0L234.1 220.5M265.8 177.3L268.8 169.8M145.2 248.2L144.6 245.0M268.5 191.2L272.6 184.0"/>
<path stroke="#410303" d="M261.2 136.0L255.9 131.1M156.6 222.0L157.1 228.5M185.1 231.4L184.5 223.5M179.4 235.5L178.1 226.1M239.5 196.3L241.1 202.7M224.4 207.8L223.1 201.1M138.1 223.0L136.7 216.3M137.0 226.0L138.1 223.0M149.7 231.0L153.3 235.8M253.5 118.2L257.2 119.0M207.9 226.1L200.7 231.2M149.0 225.7L149.7 231.0M259.9 120.1L255.3 117.2M193.0 226.7L185.1 231.4M252.3 178.2L256.0 169.6M162.6 240.9L161.5 233.2M142.1 225.8L144.7 233.1M261.1 131.6L261.2 136.0M200.7 231.2L193.0 226.7M184.7 214.7L184.5 223.5M138.1 223.0L140.3 219.6M263.0 123.1L259.9 120.1M149.0 235.3L144.7 233.1M138.1 223.0L142.1 225.8M261.1 131.6L259.4 126.8M223.1 201.1L218.1 205.2M179.4 235.5L171.9 236.8M262.3 170.2L268.8 169.8M141.2 230.8L144.2 236.7M233.3 196.4L234.7 203.5M145.9 228.6L144.5 222.6M185.1 231.4L178.1 226.1M252.3 178.2L259.2 177.1M261.1 131.6L266.2 136.5M162.3 226.5L161.5 233.2M256.0 169.6L251.2 162.9M260.4 122.7L263.0 123.1M191.5 219.4L184.5 223.5M166.8 232.2L161.5 233.2M248.8 170.3L256.0 169.6M259.2 177.1L262.3 170.2M141.2 230.8L144.7 233.1M258.2 161.7L260.4 155.5M125.3 204.6L124.9 202.5M251.4 191.3L244.7 190.8M251.2 162.9L258.2 161.7M149.7 231.0L145.9 228.6M221.6 220.0L215.3 219.6M126.6 210.0L128.2 214.1M266.2 136.5L265.2 131.9M216.0 227.0L215.3 219.6M178.7 217.8L178.1 226.1M271.6 155.4L266.3 147.9M215.3 219.6L207.9 226.1M266.3 147.9L267.5 143.2M221.6 220.0L220.4 212.0M257.2 119.0L253.1 116.0M255.4 184.6L259.2 177.1M264.8 161.9L266.6 155.2M265.2 131.9L263.1 126.9M213.8 211.3L207.5 217.5M127.3 212.8L126.6 210.0M253.1 116.0L255.3 117.2M238.5 190.5L239.5 196.3M256.0 169.6L262.3 170.2M133.2 226.1L136.5 230.7M128.7 218.0L130.4 222.0M265.2 131.9L271.3 138.2M224.4 207.8L229.0 202.2M258.2 161.7L264.8 161.9M172.1 221.2L167.3 223.4M243.0 184.9L245.7 177.8M215.3 219.6L213.8 211.3M151.6 223.3L153.2 230.1M126.6 210.0L128.7 218.0M128.4 210.8L131.0 215.1M137.0 226.0L141.2 230.8M161.1 219.6L162.3 226.5M266.2 136.5L267.5 143.2M149.0 225.7L144.5 222.6M153.3 235.8L149.0 235.3M239.5 196.3L233.3 196.4M162.3 226.5L166.8 232.2M200.2 223.4L193.0 226.7M264.8 161.9L270.7 161.9M252.7 155.4L260.4 155.5M153.2 230.1L157.7 234.7M256.8 122.3L260.4 122.7M260.4 122.7L257.2 119.0M266.3 147.9L272.2 149.1M128.7 218.0L131.2 225.3M126.5 206.7L128.2 214.1M259.2 177.1L256.0 169.6M141.2 230.8L142.1 225.8M226.5 214.4L230.1 208.7M233.3 196.4L229.0 202.2M258.2 161.7L252.7 155.4M266.2 136.5L261.2 136.0M256.0 169.6L258.2 161.7M194.2 236.2L185.1 231.4M226.5 214.4L220.4 212.0M126.6 210.0L126.5 206.7M233.3 196.4L227.1 195.4M254.1 148.1L261.5 148.6M251.4 191.3L255.4 184.6M125.3 204.6L126.6 210.0M260.4 122.7L266.8 128.2M266.3 147.9L261.9 141.6M200.2 223.4L198.9 214.5M184.5 223.5L178.1 226.1M128.4 210.8L130.8 219.7M266.2 136.5L271.3 138.2M244.7 190.8L249.9 184.2M250.5 115.3L257.2 119.0M266.8 128.2L263.0 123.1M133.2 226.1L133.5 223.3M255.5 141.8L261.9 141.6M257.2 119.0L259.9 120.1M213.8 211.3L206.3 209.9M238.5 190.5L233.3 196.4M131.0 215.1L133.5 223.3M133.5 223.3L136.5 230.7M138.1 223.0L141.2 230.8M241.1 202.7L234.7 203.5M268.8 132.2L266.8 128.2M272.2 149.1L267.5 143.2M171.9 228.9L166.8 232.2M271.7 143.1L267.5 143.2M260.4 155.5L261.5 148.6M151.6 223.3L149.0 225.7M257.2 119.0L263.0 123.1M207.5 217.5L200.2 223.4M243.0 184.9L249.9 184.2M178.7 217.8L184.5 223.5M253.1 116.0L259.9 120.1M128.2 214.1L130.8 219.7M223.1 201.1L229.0 202.2M131.0 215.1L134.5 219.7M256.8 122.3L253.5 118.2M261.5 148.6L255.5 141.8M144.7 233.1L145.9 228.6M200.2 223.4L191.5 219.4M249.9 184.2L245.7 177.8M133.5 223.3L137.0 226.0M157.1 228.5L161.5 233.2M167.3 223.4L171.9 228.9M153.2 230.1L153.3 235.8M130.8 219.7L131.0 215.1M140.3 233.5L141.2 230.8M157.1 228.5L157.7 234.7M251.4 191.3L249.9 184.2M244.7 190.8L239.5 196.3M171.9 236.8L171.9 228.9M226.5 214.4L224.4 207.8M249.9 184.2L255.4 184.6M244.7 190.8L243.0 184.9M178.1 226.1L171.9 228.9M263.1 126.9L260.4 122.7M167.3 223.4L166.8 232.2M266.2 136.5L271.7 143.1M220.4 212.0L213.8 211.3M142.1 225.8L144.5 222.6M134.5 219.7L136.7 216.3M140.3 219.6L144.5 222.6M268.8 169.8L264.8 161.9M171.9 236.8L166.8 232.2M234.7 203.5L230.1 208.7M220.4 212.0L218.1 205.2M157.7 234.7L153.3 235.8M172.1 221.2L171.9 228.9M245.7 177.8L252.3 178.2M253.1 116.0L248.9 113.7M254.7 126.6L261.1 131.6M238.5 190.5L232.1 190.6M166.9 239.3L166.8 232.2M162.6 240.9L157.7 234.7M260.4 155.5L254.1 148.1M213.8 211.3L212.8 204.3M266.6 155.2L261.5 148.6M147.2 219.2L149.0 225.7M128.2 214.1L128.4 210.8M259.4 126.8L256.8 122.3M245.4 112.4L248.9 113.7M261.9 141.6L255.4 136.0M130.4 222.0L130.8 219.7M133.5 223.3L134.5 219.7M232.1 190.6L233.3 196.4M147.2 219.2L144.5 222.6M207.5 217.5L198.9 214.5M259.4 126.8L265.2 131.9M261.5 148.6L261.9 141.6M162.3 226.5L157.1 228.5M249.9 184.2L252.3 178.2M244.7 190.8L246.2 196.0M256.8 122.3L263.1 126.9M130.8 219.7L133.5 223.3M267.5 143.2L261.2 136.0M153.2 230.1L149.7 231.0M172.1 221.2L178.1 226.1M265.8 177.3L262.3 170.2M207.5 217.5L206.3 209.9M244.7 190.8L238.5 190.5M198.9 214.5L191.5 219.4M136.5 230.7L137.0 226.0M260.4 155.5L266.6 155.2M262.3 170.2L264.8 161.9M149.7 231.0L149.0 235.3M124.9 202.5L126.6 210.0M224.4 207.8L218.1 205.2M220.4 212.0L215.3 219.6M266.6 155.2L271.6 155.4M238.5 190.5L243.0 184.9M253.5 118.2L250.5 115.3M263.1 126.9L266.8 128.2M156.6 222.0L151.6 223.3M142.1 225.8L140.3 219.6M246.2 196.0L239.5 196.3M252.3 178.2L248.8 170.3M128.2 214.1L130.4 222.0M171.9 236.8L166.9 239.3M239.5 196.3L234.7 203.5M134.5 219.7L138.1 223.0M270.7 161.9L266.6 155.2M263.1 126.9L268.8 132.2M207.9 226.1L200.2 223.4M193.0 226.7L184.5 223.5M261.5 148.6L266.3 147.9M142.1 225.8L145.9 228.6M194.2 236.2L193.0 226.7M261.9 141.6L267.5 143.2M253.5 118.2L260.4 122.7M149.0 235.3L145.9 228.6M185.1 231.4L179.4 235.5M130.8 219.7L133.2 226.1M261.1 131.6L265.2 131.9M179.4 235.5L171.9 228.9M218.1 205.2L213.8 211.3M234.7 203.5L229.0 202.2M162.3 226.5L156.6 222.0M261.1 131.6L255.9 131.1M266.6 155.2L266.3 147.9M207.9 226.1L207.5 217.5M229.0 202.2L230.1 208.7M250.5 115.3L253.1 116.0M259.4 126.8L263.1 126.9M149.0 225.7L145.9 228.6M166.9 239.3L161.5 233.2M200.7 231.2L200.2 223.4M186.2 239.8L185.1 231.4M261.9 141.6L261.2 136.0M130.4 222.0L133.2 226.1M161.5 233.2L157.7 234.7M253.1 116.0L245.4 112.4M157.1 228.5L151.6 223.3M193.0 226.7L191.5 219.4M153.2 230.1L149.0 225.7M255.4 184.6L252.3 178.2M264.8 161.9L260.4 155.5M224.4 207.8L230.1 208.7M227.1 195.4L229.0 202.2M157.1 228.5L153.2 230.1M262.3 170.2L258.2 161.7M134.5 219.7L137.0 226.0M167.3 223.4L162.3 226.5M215.3 219.6L207.5 217.5M128.7 218.0L128.2 214.1M224.4 207.8L220.4 212.0M137.0 226.0L140.3 233.5M265.2 131.9L268.8 132.2"/>
<path stroke="#500606" d="M197.8 207.8L198.9 214.5M197.8 207.8L192.0 202.1M215.7 186.6L215.3 192.5M221.5 195.3L225.8 190.6M248.8 170.3L244.4 162.6M236.3 184.5L243.0 184.9M131.0 215.1L129.6 207.5M128.4 200.4L127.0 203.9M185.1 205.1L184.7 214.7M253.1 122.6L256.8 122.3M231.2 108.1L233.3 108.1M205.3 202.3L198.2 198.7M251.2 162.9L252.7 155.4M126.5 206.7L127.0 203.9M255.5 141.8L255.4 136.0M178.3 210.5L173.2 213.5M192.1 211.4L191.5 219.4M221.0 190.3L223.9 184.4M123.9 195.4L125.2 200.2M248.2 115.8L243.3 112.4M128.4 210.8L129.6 207.5M126.0 196.1L127.0 203.9M197.8 207.8L206.3 209.9M215.3 192.5L211.0 197.6M147.2 219.2L143.2 216.5M131.0 215.1L132.8 211.8M132.8 211.8L136.7 216.3M128.4 200.4L131.5 205.1M160.5 204.7L161.3 212.2M127.0 203.9L129.6 207.5M248.7 123.0L246.3 119.0M241.0 116.3L246.3 119.0M155.6 213.9L156.6 222.0M218.1 205.2L217.1 198.8M173.2 204.8L165.9 208.6M124.9 202.5L125.2 200.2M184.7 214.7L191.5 219.4M134.0 201.4L135.6 209.3M178.3 210.5L173.2 204.8M225.8 190.6L227.1 195.4M252.7 155.4L248.0 148.5M248.6 142.3L242.7 137.3M143.2 216.5L140.3 219.6M235.0 171.5L242.3 169.9M244.4 162.6L246.6 155.2M246.3 119.0L253.1 122.6M221.0 190.3L215.7 186.6M237.0 163.6L244.4 162.6M221.0 190.3L215.3 192.5M155.5 206.9L150.2 210.0M128.4 210.8L127.0 203.9M131.5 205.1L132.8 211.8M249.7 118.1L253.5 118.2M248.7 123.0L243.1 122.9M254.1 148.1L255.5 141.8M255.9 131.1L249.5 126.4M253.1 122.6L249.7 118.1M244.2 115.5L249.7 118.1M124.9 202.5L123.9 195.4M150.5 216.8L147.2 219.2M254.7 126.6L255.9 131.1M255.5 141.8L249.7 136.2M249.7 118.1L256.8 122.3M178.3 210.5L178.7 217.8M253.1 122.6L259.4 126.8M185.1 205.1L178.3 210.5M244.4 162.6L251.2 162.9M231.2 108.1L239.0 110.1M232.1 190.6L236.3 184.5M126.0 196.1L128.4 200.4M254.7 126.6L249.5 126.4M243.2 119.7L246.3 119.0M241.6 110.6L245.4 112.4M223.1 201.1L217.1 198.8M173.2 213.5L165.9 208.6M215.3 192.5L210.5 189.4M221.0 190.3L221.5 195.3M205.3 202.3L212.8 204.3M238.8 156.7L246.6 155.2M248.2 115.8L240.7 112.9M173.2 204.8L173.2 213.5M167.3 223.4L161.1 219.6M124.2 190.8L123.9 195.4M248.7 123.0L253.1 122.6M236.4 110.2L243.3 112.4M172.1 221.2L166.1 216.2M125.2 200.2L127.0 203.9M245.7 177.8L242.3 169.9M244.4 162.6L238.8 156.7M210.5 189.4L211.0 197.6M242.7 137.3L249.7 136.2M242.3 169.9L244.4 162.6M252.7 155.4L254.1 148.1M155.5 206.9L155.6 213.9M143.2 216.5L144.5 222.6M192.1 211.4L184.7 214.7M173.2 213.5L166.1 216.2M150.5 216.8L146.1 211.6M123.4 187.4L123.3 190.4M211.0 197.6L205.3 202.3M126.0 196.1L125.2 200.2M131.5 205.1L135.6 209.3M215.3 192.5L217.1 198.8M126.5 206.7L128.4 210.8M254.1 148.1L248.6 142.3M161.1 219.6L155.6 213.9M243.0 184.9L239.2 177.6M254.7 126.6L259.4 126.8M211.0 197.6L205.4 194.9M166.1 216.2L167.3 223.4M150.5 216.8L151.6 223.3M243.3 127.0L249.5 126.4M198.2 198.7L197.8 207.8M151.6 223.3L147.2 219.2M225.5 178.7L229.1 184.0M135.6 209.3L136.7 216.3M249.7 136.2L255.4 136.0M232.1 190.6L229.1 184.0M243.4 131.1L249.4 131.1M165.9 208.6L161.3 212.2M161.1 219.6L156.6 222.0M249.7 136.2L243.4 131.1M225.8 190.6L223.9 184.4M211.0 197.6L212.8 204.3M205.3 202.3L206.3 209.9M244.2 115.5L240.7 112.9M134.0 201.4L131.5 205.1M231.6 178.0L239.2 177.6M243.2 119.7L248.7 123.0M232.1 190.6L227.1 195.4M246.6 155.2L248.0 148.5M146.1 211.6L147.2 219.2M249.5 126.4L243.1 122.9M223.1 201.1L221.5 195.3M244.2 115.5L237.5 113.4M223.1 201.1L227.1 195.4M239.2 177.6L242.3 169.9M124.0 198.0L123.9 195.4M123.4 187.4L123.9 195.4M197.8 207.8L192.1 211.4M221.0 190.3L225.8 190.6M178.8 201.2L178.3 210.5M236.4 110.2L239.0 110.1M138.3 206.2L135.6 209.3M131.5 205.1L129.6 207.5M233.3 108.1L241.6 110.6M248.7 123.0L254.7 126.6M142.2 208.5L138.8 213.0M242.3 169.9L237.0 163.6M221.5 195.3L217.1 198.8M250.5 115.3L245.4 112.4M245.7 177.8L248.8 170.3M138.3 206.2L142.2 208.5M239.2 177.6L245.7 177.8M173.2 213.5L172.1 221.2M192.0 202.1L185.1 205.1M248.2 115.8L250.5 115.3M142.2 208.5L143.2 216.5M184.7 214.7L178.7 217.8M236.4 110.2L240.7 112.9M135.6 209.3L132.8 211.8M254.7 126.6L253.1 122.6M233.3 108.1L239.0 110.1M240.7 112.9L243.3 112.4M205.4 194.9L205.3 202.3M215.3 192.5L221.5 195.3M250.5 115.3L243.3 112.4M146.2 204.8L146.1 211.6M135.6 209.3L138.8 213.0M239.0 110.1L245.4 112.4M138.8 213.0L136.7 216.3M166.1 216.2L161.1 219.6M198.2 198.7L192.0 202.1M242.3 169.9L248.8 170.3M165.9 208.6L166.1 216.2M146.2 204.8L142.2 208.5M192.1 211.4L185.1 205.1M138.8 213.0L140.3 219.6M218.1 205.2L212.8 204.3M212.8 204.3L206.3 209.9M225.8 190.6L229.1 184.0M184.7 214.7L178.3 210.5M124.9 202.5L126.5 206.7M246.6 155.2L240.9 149.6M146.1 211.6L142.2 208.5M239.0 110.1L243.3 112.4M249.7 136.2L249.4 131.1M229.1 184.0L231.6 178.0M239.2 177.6L235.0 171.5M249.4 131.1L243.3 127.0M246.3 119.0L244.2 115.5M232.1 190.6L225.8 190.6M123.3 190.4L123.9 195.4M161.3 212.2L155.6 213.9M248.0 148.5L248.6 142.3M150.2 210.0L150.5 216.8M236.3 184.5L239.2 177.6M134.5 219.7L132.8 211.8M166.1 216.2L161.3 212.2M205.3 202.3L197.8 207.8M192.0 202.1L192.1 211.4M244.2 115.5L248.2 115.8M255.4 136.0L255.9 131.1M221.5 195.3L227.1 195.4M138.3 206.2L138.8 213.0M226.5 106.7L233.3 108.1M251.2 162.9L246.6 155.2M241.6 143.0L248.6 142.3M124.2 190.8L125.2 200.2M246.6 155.2L252.7 155.4M248.8 170.3L251.2 162.9M240.9 149.6L248.0 148.5M239.0 110.1L241.6 110.6M178.7 217.8L173.2 213.5M243.3 112.4L245.4 112.4M205.4 194.9L198.2 198.7M248.2 115.8L253.5 118.2M129.6 207.5L132.8 211.8M124.0 198.0L124.9 202.5M161.3 212.2L155.5 206.9M155.6 213.9L150.2 210.0M138.8 213.0L143.2 216.5M136.7 216.3L140.3 219.6M248.0 148.5L254.1 148.1M241.0 116.3L244.2 115.5M248.6 142.3L255.5 141.8M128.4 200.4L129.6 207.5M249.4 131.1L255.9 131.1M150.2 210.0L146.2 204.8M161.3 212.2L161.1 219.6M223.9 184.4L229.1 184.0M192.1 211.4L198.9 214.5M155.6 213.9L150.5 216.8M211.0 197.6L217.1 198.8M178.7 217.8L172.1 221.2M126.5 206.7L125.2 200.2M255.4 136.0L261.2 136.0M249.4 131.1L249.5 126.4M246.3 119.0L249.7 118.1M248.0 148.5L241.6 143.0M217.1 198.8L212.8 204.3M146.1 211.6L143.2 216.5M248.6 142.3L249.7 136.2M236.3 184.5L231.6 178.0M156.6 222.0L150.5 216.8M229.1 184.0L236.3 184.5M206.3 209.9L198.9 214.5M255.4 136.0L249.4 131.1M150.2 210.0L146.1 211.6M238.5 190.5L236.3 184.5M249.7 118.1L248.2 115.8M248.7 123.0L249.5 126.4"/>
<path stroke="#5e0909" d="M192.1 193.4L186.5 189.0M137.2 197.2L134.0 201.4M218.4 105.6L226.5 106.7M123.5 179.5L124.3 183.3M220.6 105.8L226.5 106.7M124.2 190.8L126.0 196.1M229.5 111.6L234.4 114.7M228.2 171.7L225.5 178.7M124.3 183.3L124.2 190.8M232.2 157.8L230.1 164.7M218.4 105.6L222.4 106.7M233.0 110.6L240.7 112.9M204.7 185.9L199.1 188.3M185.6 197.2L178.8 201.2M166.7 192.1L166.8 200.3M145.1 197.9L140.9 193.6M127.3 184.6L130.1 188.6M137.1 189.3L140.9 193.6M137.2 197.2L138.3 206.2M237.7 127.6L231.1 128.3M233.0 110.6L237.5 113.4M133.2 193.7L130.3 196.8M219.6 180.2L223.9 184.4M172.5 196.3L166.7 192.1M237.0 163.6L238.8 156.7M229.8 133.4L235.9 137.6M215.7 186.6L219.6 180.2M141.2 201.4L138.3 206.2M210.9 105.0L218.4 105.6M185.6 197.2L180.1 192.4M130.1 188.6L130.3 196.8M199.1 188.3L198.2 198.7M124.5 167.6L123.6 174.5M123.6 174.5L123.5 179.5M185.1 205.1L178.8 201.2M124.2 170.9L123.6 174.5M193.1 185.1L192.1 193.4M237.7 127.6L243.4 131.1M144.6 190.9L145.1 197.9M133.2 193.7L137.2 197.2M225.7 109.6L233.0 110.6M154.6 191.8L150.0 195.4M231.9 117.2L234.4 114.7M213.7 176.3L219.6 180.2M237.0 133.0L229.8 133.4M144.6 190.9L140.9 193.6M155.4 199.5L155.5 206.9M235.9 137.6L229.6 139.3M216.6 106.1L222.4 106.7M186.5 189.0L180.1 192.4M173.6 187.7L172.5 196.3M166.8 200.3L160.5 204.7M242.7 137.3L243.4 131.1M124.6 175.3L123.5 179.5M124.3 183.3L125.4 187.8M228.2 171.7L231.6 178.0M234.4 114.7L227.8 114.0M222.5 167.3L221.2 173.9M123.5 179.5L123.4 187.4M233.0 110.6L236.4 110.2M173.2 204.8L166.8 200.3M231.1 128.3L237.0 133.0M204.7 185.9L205.4 194.9M215.7 186.6L211.6 182.3M243.3 127.0L243.1 122.9M185.6 197.2L185.1 205.1M237.5 113.4L240.7 112.9M225.5 178.7L223.9 184.4M137.2 197.2L141.2 201.4M204.7 185.9L200.1 182.2M233.5 150.4L232.2 157.8M237.5 123.7L237.7 127.6M127.3 184.6L127.4 191.7M221.2 173.9L225.5 178.7M166.8 200.3L160.3 195.5M235.0 171.5L237.0 163.6M123.5 179.5L123.2 182.7M229.6 139.3L234.1 144.4M123.4 187.4L124.2 190.8M231.9 117.2L227.8 114.0M224.8 159.6L230.1 164.7M155.4 199.5L150.0 195.4M124.3 183.3L123.4 187.4M130.1 188.6L133.2 193.7M155.5 206.9L149.8 203.1M200.1 182.2L199.1 188.3M211.6 182.3L219.6 180.2M229.5 111.6L224.0 111.9M180.1 192.4L178.8 201.2M210.9 105.0L216.6 106.1M134.0 201.4L138.3 206.2M178.8 201.2L173.2 204.8M193.1 185.1L186.5 189.0M125.4 187.8L126.0 196.1M133.2 193.7L134.0 201.4M225.7 109.6L229.5 111.6M127.3 184.6L125.4 187.8M199.1 188.3L193.1 185.1M232.2 157.8L224.8 159.6M216.6 106.1L218.4 105.6M234.1 144.4L233.5 150.4M222.5 167.3L215.1 168.8M186.5 189.0L185.6 197.2M166.8 200.3L165.9 208.6M237.7 127.6L243.3 127.0M127.4 191.7L130.3 196.8M233.5 150.4L226.4 152.6M241.0 116.3L237.5 113.4M231.9 117.2L237.1 120.4M216.6 106.1L220.6 107.7M225.5 178.7L231.6 178.0M222.5 167.3L228.2 171.7M238.8 156.7L240.9 149.6M234.4 114.7L237.5 113.4M231.6 178.0L235.0 171.5M225.5 178.7L219.6 180.2M130.1 188.6L127.4 191.7M234.1 144.4L241.6 143.0M237.5 123.7L243.1 122.9M222.4 106.7L231.2 108.1M125.4 187.8L124.2 190.8M241.6 143.0L242.7 137.3M149.8 203.1L150.2 210.0M220.6 107.7L222.4 106.7M237.1 120.4L237.5 123.7M211.6 182.3L210.5 189.4M243.2 119.7L241.0 116.3M133.6 184.3L133.2 193.7M231.1 123.7L237.7 127.6M221.2 173.9L213.7 176.3M222.4 106.7L228.6 108.6M198.2 198.7L192.1 193.4M237.0 133.0L243.4 131.1M243.4 131.1L243.3 127.0M220.6 107.7L225.7 109.6M230.1 164.7L237.0 163.6M215.1 168.8L221.2 173.9M221.2 173.9L219.6 180.2M231.2 108.1L236.4 110.2M127.4 191.7L126.0 196.1M224.8 159.6L222.5 167.3M232.2 157.8L238.8 156.7M237.5 123.7L231.1 123.7M200.1 182.2L193.1 185.1M140.9 193.6L137.2 197.2M180.1 192.4L172.5 196.3M233.5 150.4L240.9 149.6M125.4 187.8L127.4 191.7M230.1 164.7L235.0 171.5M229.5 111.6L227.8 114.0M237.2 117.8L237.1 120.4M237.2 117.8L241.0 116.3M237.7 127.6L237.0 133.0M210.5 189.4L205.4 194.9M130.3 196.8L134.0 201.4M146.2 204.8L141.2 201.4M140.9 193.6L141.2 201.4M237.1 120.4L243.1 122.9M180.1 192.4L173.6 187.7M127.4 191.7L128.4 200.4M241.0 116.3L234.4 114.7M178.8 201.2L172.5 196.3M150.0 195.4L149.8 203.1M231.9 117.2L232.0 119.7M228.2 145.5L233.5 150.4M235.9 137.6L241.6 143.0M226.5 106.7L231.2 108.1M222.4 106.7L226.5 106.7M233.5 150.4L238.8 156.7M160.3 195.5L155.4 199.5M192.0 202.1L185.6 197.2M232.0 119.7L237.5 123.7M235.9 137.6L234.1 144.4M205.3 104.7L212.4 104.8M149.8 203.1L146.2 204.8M211.6 182.3L205.7 178.2M220.6 107.7L228.6 108.6M211.6 182.3L204.7 185.9M211.6 182.3L213.7 176.3M240.9 149.6L241.6 143.0M234.1 144.4L228.2 145.5M215.1 168.8L213.7 176.3M124.6 175.3L124.3 183.3M228.6 108.6L231.2 108.1M192.1 193.4L185.6 197.2M160.3 195.5L154.6 191.8M150.0 195.4L144.6 190.9M234.1 144.4L240.9 149.6M230.1 164.7L228.2 171.7M218.4 105.6L220.6 105.8M205.7 178.2L200.1 182.2M229.5 111.6L237.5 113.4M165.9 208.6L160.5 204.7M172.5 196.3L166.8 200.3M237.2 117.8L231.9 117.2M237.2 117.8L243.2 119.7M210.5 189.4L204.7 185.9M160.5 204.7L155.4 199.5M125.7 179.4L124.3 183.3M149.8 203.1L145.1 197.9M130.3 196.8L131.5 205.1M232.2 157.8L237.0 163.6M215.7 186.6L210.5 189.4M237.5 123.7L243.3 127.0M160.3 195.5L160.5 204.7M237.0 133.0L242.7 137.3M166.7 192.1L160.3 195.5M150.0 195.4L145.1 197.9M137.1 189.3L137.2 197.2M124.2 170.9L123.5 179.5M123.2 182.7L123.4 187.4M205.4 194.9L199.1 188.3M237.0 133.0L235.9 137.6M210.9 105.0L212.4 104.8M145.1 197.9L146.2 204.8M215.7 186.6L223.9 184.4M232.0 119.7L231.1 123.7M237.2 117.8L234.4 114.7M205.3 104.7L210.9 105.0M160.5 204.7L155.5 206.9M237.1 120.4L232.0 119.7M237.1 120.4L243.2 119.7M226.4 152.6L232.2 157.8M225.7 109.6L228.6 108.6M154.6 191.8L155.4 199.5M145.1 197.9L141.2 201.4M235.9 137.6L242.7 137.3M199.1 188.3L192.1 193.4M230.1 164.7L222.5 167.3M192.1 193.4L192.0 202.1M141.2 201.4L142.2 208.5M125.7 179.4L125.4 187.8M130.3 196.8L128.4 200.4M228.6 108.6L236.4 110.2M228.2 171.7L235.0 171.5M243.2 119.7L243.1 122.9M205.7 178.2L204.7 185.9M212.4 104.8L218.4 105.6M205.7 178.2L213.7 176.3M229.5 111.6L233.0 110.6M228.2 171.7L221.2 173.9M228.6 108.6L233.0 110.6M172.5 196.3L173.2 204.8M155.4 199.5L149.8 203.1M137.1 189.3L133.2 193.7"/>
<path stroke="#6c0e0e" d="M187.3 107.2L183.0 107.6M207.8 171.5L213.7 176.3M173.6 187.7L166.7 192.1M168.1 112.9L170.2 111.7M125.5 163.8L126.2 160.1M212.5 118.3L207.1 115.4M214.0 114.7L221.0 114.4M136.7 138.8L134.9 141.7M214.5 136.4L222.1 141.1M125.5 163.8L124.2 170.9M224.4 124.6L217.6 125.5M212.5 118.3L211.5 121.9M127.1 160.8L125.5 163.8M167.1 183.1L160.6 188.2M173.6 187.7L167.1 183.1M227.8 114.0L224.0 111.9M124.2 170.9L124.6 175.3M127.8 176.6L127.3 184.6M125.5 163.8L124.5 167.6M212.1 109.3L206.8 107.5M146.9 126.8L144.2 129.7M130.7 149.0L133.5 145.3M216.6 111.8L218.9 109.4M150.1 178.7L150.1 185.5M225.5 116.9L225.9 120.4M132.1 146.1L130.7 149.0M146.0 175.2L145.6 182.3M229.6 139.3L228.2 145.5M127.8 163.5L128.8 168.2M216.6 106.1L208.7 105.8M207.3 139.2L213.8 143.5M167.1 183.1L160.7 179.4M211.5 121.9L217.6 125.5M160.6 188.2L160.3 195.5M214.5 136.4L207.3 139.2M198.8 108.6L201.0 106.4M225.5 116.9L221.0 114.4M205.8 146.3L203.9 153.4M166.7 192.1L160.6 188.2M216.6 111.8L224.0 111.9M218.9 109.4L213.5 107.3M125.5 163.8L127.8 155.9M127.8 155.9L129.8 152.8M212.1 109.3L218.9 109.4M212.5 150.5L218.2 155.2M127.8 163.5L125.6 167.8M225.9 120.4L231.1 123.7M216.7 162.8L222.5 167.3M229.8 133.4L222.2 134.9M222.1 141.1L220.2 147.6M219.6 117.4L214.0 114.7M205.7 178.2L200.5 175.0M190.3 106.0L185.8 106.8M229.6 139.3L222.1 141.1M130.8 172.4L133.1 176.8M216.6 106.1L213.5 107.3M128.8 168.2L127.8 176.6M187.3 107.2L190.3 106.0M160.6 188.2L154.9 182.7M200.5 175.0L194.3 176.9M198.8 108.6L206.8 107.5M221.0 114.4L224.0 111.9M210.6 158.3L209.3 165.0M217.6 125.5L217.2 130.8M154.6 191.8L150.1 185.5M209.1 132.2L214.5 136.4M180.1 184.4L173.6 187.7M133.6 184.3L137.1 189.3M209.3 165.0L215.1 168.8M127.8 176.6L130.3 180.4M138.1 173.4L136.7 181.3M126.4 171.4L125.7 179.4M207.1 115.4L209.7 111.9M216.6 111.8L212.1 109.3M222.1 141.1L213.8 143.5M225.5 116.9L232.0 119.7M193.9 169.4L186.4 172.5M130.8 172.4L127.8 176.6M212.5 150.5L203.9 153.4M200.5 175.0L201.2 166.8M229.8 133.4L229.6 139.3M225.5 116.9L219.6 117.4M124.5 167.6L124.2 170.9M205.3 104.7L203.8 105.2M128.6 153.0L130.7 149.0M181.4 168.8L180.5 175.8M198.8 108.6L193.2 107.4M205.8 146.3L212.5 150.5M126.4 171.4L124.6 175.3M127.8 163.5L126.4 171.4M200.1 182.2L194.3 176.9M228.2 145.5L220.2 147.6M187.3 107.2L195.2 105.9M190.3 106.0L198.1 105.1M127.8 176.6L125.7 179.4M141.9 132.1L144.2 129.7M224.0 111.9L218.9 109.4M210.6 158.3L203.1 160.4M219.6 117.4L225.9 120.4M200.5 175.0L207.8 171.5M217.2 130.8L222.2 134.9M163.4 114.8L157.3 118.4M222.1 141.1L228.2 145.5M133.6 184.3L130.1 188.6M195.6 162.9L201.2 166.8M144.2 129.7L139.8 134.8M193.1 185.1L187.0 180.6M222.2 134.9L222.1 141.1M219.6 117.4L212.5 118.3M175.5 110.0L183.0 107.6M212.5 150.5L210.6 158.3M209.7 111.9L204.1 109.8M128.8 168.2L130.8 172.4M206.8 107.5L201.0 106.4M219.6 117.4L221.0 114.4M209.3 165.0L201.2 166.8M193.2 107.4L195.2 105.9M190.3 106.0L192.3 105.7M125.6 167.8L124.6 175.3M225.7 109.6L218.9 109.4M200.5 175.0L200.1 182.2M221.0 114.4L216.6 111.8M140.9 177.0L136.7 181.3M204.1 109.8L206.8 107.5M130.8 172.4L130.3 180.4M225.9 120.4L218.1 121.3M210.6 158.3L216.7 162.8M217.6 125.5L223.5 129.4M145.6 182.3L144.6 190.9M228.2 145.5L226.4 152.6M187.0 180.6L180.1 184.4M180.1 184.4L180.1 192.4M186.5 189.0L180.1 184.4M231.1 128.3L229.8 133.4M213.8 143.5L220.2 147.6M224.8 159.6L216.7 162.8M175.5 110.0L177.8 108.9M130.6 160.7L128.8 168.2M126.4 171.4L127.8 176.6M215.1 168.8L207.8 171.5M139.8 134.8L134.9 141.7M201.0 106.4L203.8 105.2M203.9 153.4L203.1 160.4M209.3 165.0L207.8 171.5M193.9 169.4L194.3 176.9M225.7 109.6L224.0 111.9M221.0 114.4L227.8 114.0M220.6 107.7L213.5 107.3M133.5 145.3L129.8 152.8M144.6 190.9L141.1 185.7M217.6 125.5L210.5 127.0M180.1 184.4L173.9 179.7M203.1 160.4L209.3 165.0M160.7 179.4L154.9 182.7M231.1 128.3L223.5 129.4M210.5 127.0L217.2 130.8M140.9 177.0L141.1 185.7M210.9 105.0L203.8 105.2M220.2 147.6L218.2 155.2M130.0 156.2L127.8 163.5M207.1 115.4L214.0 114.7M223.5 129.4L222.2 134.9M133.1 176.8L136.7 181.3M231.1 123.7L224.4 124.6M128.6 153.0L127.8 155.9M214.0 114.7L209.7 111.9M194.3 176.9L187.0 180.6M193.9 169.4L201.2 166.8M130.0 156.2L127.1 160.8M188.4 164.7L186.4 172.5M141.9 132.1L139.8 134.8M130.0 156.2L129.8 152.8M154.9 182.7L154.6 191.8M222.2 134.9L229.6 139.3M219.6 117.4L218.1 121.3M174.6 171.9L173.9 179.7M217.2 130.8L214.5 136.4M223.5 129.4L217.2 130.8M150.1 185.5L144.6 190.9M136.7 181.3L137.1 189.3M205.3 104.7L198.1 105.1M193.2 107.4L187.3 107.2M127.1 160.8L125.6 167.8M125.6 167.8L126.4 171.4M204.1 109.8L198.8 108.6M218.1 121.3L224.4 124.6M209.7 111.9L212.1 109.3M202.5 113.1L209.7 111.9M186.4 172.5L180.5 175.8M187.0 180.6L186.5 189.0M206.8 107.5L208.7 105.8M200.5 175.0L193.9 169.4M175.5 110.0L170.2 111.7M217.2 130.8L209.1 132.2M201.0 106.4L195.2 105.9M203.9 153.4L210.6 158.3M195.2 105.9L198.1 105.1M125.6 167.8L124.2 170.9M154.9 182.7L150.1 178.7M222.2 134.9L214.5 136.4M193.9 169.4L195.6 162.9M196.4 156.0L203.1 160.4M213.8 143.5L212.5 150.5M209.7 111.9L216.6 111.8M128.8 168.2L126.4 171.4M150.1 185.5L145.6 182.3M193.9 169.4L188.4 164.7M173.9 179.7L167.1 183.1M231.1 123.7L231.1 128.3M160.7 179.4L160.6 188.2M201.2 166.8L207.8 171.5M204.1 109.8L212.1 109.3M125.7 179.4L127.3 184.6M220.2 147.6L226.4 152.6M180.5 175.8L180.1 184.4M180.0 109.2L183.0 107.6M130.6 160.7L127.8 163.5M205.7 178.2L207.8 171.5M226.4 152.6L224.8 159.6M223.5 129.4L229.8 133.4M206.8 107.5L213.5 107.3M193.2 107.4L201.0 106.4M203.1 160.4L201.2 166.8M183.0 107.6L177.8 108.9M194.3 176.9L193.1 185.1M208.7 105.8L203.8 105.2M163.4 114.8L170.2 111.7M133.1 176.8L133.6 184.3M194.3 176.9L186.4 172.5M220.6 107.7L218.9 109.4M214.0 114.7L216.6 111.8M130.3 180.4L130.1 188.6M141.1 185.7L140.9 193.6M213.8 143.5L205.8 146.3M218.2 155.2L216.7 162.8M224.4 124.6L223.5 129.4M155.1 174.7L154.9 182.7M201.0 106.4L208.7 105.8M150.1 185.5L150.0 195.4M136.7 181.3L141.1 185.7M195.2 105.9L203.8 105.2M127.1 160.8L127.8 163.5M154.9 182.7L150.1 185.5M136.7 138.8L139.8 134.8M125.5 163.8L125.6 167.8M212.5 118.3L218.1 121.3M126.2 160.1L127.8 155.9M186.4 172.5L187.0 180.6M134.9 141.7L133.5 145.3M167.1 183.1L166.7 192.1M212.5 118.3L214.0 114.7M210.9 105.0L208.7 105.8M220.2 147.6L212.5 150.5M214.5 136.4L213.8 143.5M180.0 109.2L187.3 107.2M226.4 152.6L218.2 155.2M218.1 121.3L217.6 125.5M127.1 160.8L129.8 152.8M186.4 172.5L181.4 168.8M231.9 117.2L225.5 116.9M133.1 176.8L130.3 180.4M203.1 160.4L195.6 162.9M195.2 105.9L190.3 106.0M132.1 146.1L134.9 141.7M130.3 180.4L127.3 184.6M212.1 109.3L213.5 107.3M218.1 121.3L211.5 121.9M130.7 149.0L129.8 152.8M145.6 182.3L141.1 185.7M187.0 180.6L180.5 175.8M150.1 178.7L145.6 182.3M183.0 107.6L190.3 106.0M173.9 179.7L173.6 187.7M141.1 185.7L137.1 189.3M218.2 155.2L210.6 158.3M213.5 107.3L208.7 105.8M216.7 162.8L209.3 165.0M124.6 175.3L125.7 179.4M134.9 141.7L130.7 149.0M136.7 181.3L133.6 184.3M232.0 119.7L225.9 120.4M160.6 188.2L154.6 191.8M180.5 175.8L173.9 179.7M225.5 116.9L227.8 114.0M203.8 105.2L198.1 105.1M127.1 160.8L127.8 155.9M173.9 179.7L167.2 175.2M183.0 107.6L185.8 106.8M130.3 180.4L133.6 184.3M218.2 155.2L224.8 159.6M225.9 120.4L224.4 124.6M216.7 162.8L215.1 168.8M167.2 175.2L167.1 183.1M224.4 124.6L231.1 128.3M130.7 149.0L127.8 155.9M145.6 182.3L140.9 177.0"/>
<path stroke="#7a1414" d="M183.1 125.9L179.3 123.7M158.0 159.7L151.8 163.7M151.8 163.7L150.5 170.1M159.8 129.9L165.2 126.2M179.3 123.7L172.8 122.2M158.9 119.2L153.0 123.5M193.2 137.0L192.0 143.7M203.3 128.8L194.7 130.7M200.4 116.9L194.3 114.9M143.9 162.2L142.6 169.4M193.0 118.5L200.4 116.9M182.0 161.5L181.4 168.8M165.2 126.2L166.9 122.0M137.0 150.3L133.1 153.2M154.4 121.0L148.4 126.1M134.9 141.7L138.1 138.3M162.0 121.7L162.5 118.7M194.7 130.7L201.2 134.4M167.2 175.2L161.2 170.3M174.8 133.9L173.1 140.9M180.5 136.5L173.1 140.9M209.1 132.2L207.3 139.2M137.0 142.5L133.0 149.2M151.8 163.7L148.2 160.4M146.0 145.6L143.2 151.9M143.2 151.9L145.4 155.6M166.9 122.0L162.0 121.7M144.2 129.7L148.4 126.1M151.9 127.2L145.8 133.2M193.2 137.0L185.7 140.4M173.1 140.9L178.9 142.9M141.1 147.7L140.9 143.5M133.1 153.2L130.6 160.7M200.4 116.9L207.1 115.4M155.1 174.7L150.5 170.1M165.2 126.2L172.8 122.2M153.0 123.5L147.3 129.2M138.1 138.3L137.0 142.5M149.7 135.7L145.5 141.8M164.2 135.3L164.6 130.7M194.7 130.7L187.2 133.7M186.8 116.9L194.3 114.9M150.5 170.1L146.0 175.2M159.5 125.7L166.9 122.0M133.1 153.2L130.0 156.2M189.3 113.0L183.1 111.7M198.3 121.0L193.0 118.5M157.3 118.4L161.2 116.5M155.3 130.2L159.8 129.9M209.1 132.2L201.2 134.4M196.5 111.0L191.1 109.8M155.9 126.0L150.5 131.5M137.0 142.5L141.5 139.0M154.4 121.0L153.0 123.5M162.0 121.7L168.9 117.9M143.2 151.9L138.6 153.3M191.1 109.8L193.2 107.4M185.7 140.4L178.9 142.9M132.4 163.6L130.8 172.4M148.4 126.1L147.3 129.2M201.2 134.4L199.5 141.2M183.9 146.8L190.3 150.9M181.4 168.8L174.6 171.9M204.9 123.6L210.5 127.0M183.1 125.9L182.0 130.7M150.2 153.9L148.2 160.4M138.6 153.3L140.5 158.4M178.9 142.9L177.8 149.6M145.8 133.2L141.5 139.0M153.0 123.5L156.9 122.4M185.7 109.1L180.0 109.2M150.5 170.1L146.7 167.6M166.9 122.0L173.3 118.4M145.4 155.6L143.9 162.2M176.1 156.8L177.8 149.6M176.4 114.5L178.0 111.6M133.5 145.3L133.0 149.2M140.5 158.4L139.0 164.8M150.2 153.9L145.4 155.6M182.0 130.7L187.2 133.7M150.1 178.7L146.0 175.2M199.5 141.2L205.8 146.3M198.3 121.0L196.9 125.9M188.9 158.7L195.6 162.9M158.0 159.7L156.6 167.1M140.9 143.5L145.5 141.8M132.4 163.6L128.8 168.2M189.3 113.0L196.5 111.0M197.6 147.9L196.4 156.0M170.0 114.8L165.9 115.2M165.9 115.2L168.1 112.9M138.6 153.3L134.5 156.7M167.2 175.2L160.7 179.4M178.9 142.9L172.2 146.3M196.5 111.0L204.1 109.8M137.0 150.3L136.6 146.7M159.4 134.7L159.8 129.9M165.2 126.2L159.5 125.7M145.8 133.2L145.4 137.6M161.2 116.5L165.9 115.2M207.3 139.2L199.5 141.2M191.1 109.8L198.8 108.6M145.4 155.6L140.5 158.4M179.3 123.7L179.7 119.4M183.9 146.8L177.8 149.6M205.8 146.3L197.6 147.9M140.5 158.4L136.3 161.0M174.8 133.9L180.5 136.5M182.0 161.5L176.1 156.8M182.0 161.5L175.8 163.7M194.7 130.7L193.2 137.0M130.0 156.2L133.0 149.2M176.4 114.5L183.1 111.7M194.3 114.9L189.3 113.0M212.5 118.3L205.4 119.7M162.5 118.7L170.0 114.8M164.6 130.7L165.2 126.2M199.5 141.2L192.0 143.7M137.0 150.3L140.9 143.5M163.4 114.8L161.2 116.5M185.7 109.1L193.2 107.4M161.2 170.3L155.1 174.7M144.2 129.7L142.9 132.2M197.6 147.9L190.3 150.9M172.8 122.2L166.9 122.0M130.0 156.2L130.6 160.7M161.2 116.5L168.1 112.9M155.9 126.0L162.0 121.7M132.4 163.6L134.5 168.8M148.4 126.1L153.0 123.5M201.2 134.4L207.3 139.2M176.1 156.8L169.7 159.6M170.0 114.8L178.0 111.6M173.3 118.4L176.4 114.5M165.9 115.2L172.8 111.9M141.1 147.7L143.2 151.9M157.3 118.4L154.4 121.0M187.2 133.7L185.7 140.4M196.5 111.0L198.8 108.6M207.3 139.2L205.8 146.3M181.4 168.8L175.8 163.7M138.1 173.4L133.1 176.8M133.5 145.3L137.0 142.5M183.1 125.9L177.4 128.6M162.5 118.7L165.9 115.2M140.5 158.4L143.9 162.2M177.4 128.6L182.0 130.7M139.8 134.8L138.1 138.3M155.9 126.0L155.3 130.2M158.9 119.2L165.9 115.2M198.3 121.0L204.9 123.6M155.9 126.0L159.5 125.7M171.0 152.9L177.8 149.6M204.9 123.6L196.9 125.9M174.6 171.9L167.2 175.2M182.0 130.7L180.5 136.5M142.9 132.2L147.3 129.2M145.8 133.2L150.5 131.5M198.3 121.0L191.8 122.9M177.4 128.6L171.8 126.7M146.0 175.2L142.6 169.4M150.7 123.3L148.4 126.1M129.8 152.8L133.0 149.2M169.7 159.6L168.2 167.7M156.9 122.4L162.5 118.7M170.0 114.8L172.8 111.9M174.6 171.9L168.2 167.7M170.7 131.6L174.8 133.9M157.3 118.4L150.7 123.3M182.0 130.7L174.8 133.9M170.7 131.6L164.6 130.7M196.9 125.9L194.7 130.7M148.2 160.4L146.7 167.6M148.4 126.1L142.9 132.2M136.3 161.0L139.0 164.8M138.1 173.4L140.9 177.0M150.5 131.5L149.7 135.7M164.6 130.7L159.8 129.9M159.4 134.7L164.6 130.7M207.1 115.4L202.5 113.1M158.9 119.2L162.5 118.7M139.0 164.8L138.1 173.4M141.7 135.6L141.5 139.0M196.9 125.9L188.5 128.1M179.3 123.7L185.1 120.8M168.2 167.7L161.2 170.3M172.8 111.9L168.1 112.9M161.2 170.3L160.7 179.4M148.2 160.4L143.9 162.2M133.1 153.2L136.6 146.7M194.3 114.9L196.5 111.0M174.8 133.9L168.6 137.2M156.6 167.1L155.1 174.7M182.0 161.5L188.9 158.7M146.0 145.6L141.1 147.7M150.7 123.3L144.2 129.7M176.1 156.8L175.8 163.7M173.3 118.4L168.9 117.9M172.8 122.2L173.3 118.4M164.6 130.7L171.8 126.7M191.8 122.9L185.1 120.8M188.5 128.1L187.2 133.7M187.2 133.7L193.2 137.0M179.7 119.4L181.2 115.3M142.9 132.2L138.1 138.3M147.3 129.2L141.7 135.6M161.2 170.3L156.6 167.1M146.0 175.2L140.9 177.0M194.3 114.9L202.5 113.1M156.6 167.1L151.8 163.7M141.1 147.7L138.6 153.3M139.8 134.8L142.9 132.2M202.5 113.1L204.1 109.8M137.0 150.3L134.5 156.7M160.7 179.4L155.1 174.7M210.5 127.0L203.3 128.8M172.8 122.2L179.7 119.4M177.8 149.6L182.9 153.7M175.8 163.7L168.2 167.7M141.1 147.7L137.0 150.3M187.2 133.7L180.5 136.5M179.7 119.4L186.8 116.9M177.4 128.6L174.8 133.9M155.1 174.7L150.1 178.7M134.5 156.7L136.3 161.0M141.7 135.6L137.0 142.5M182.0 161.5L182.9 153.7M181.2 115.3L176.4 114.5M141.5 139.0L136.6 146.7M147.3 129.2L151.9 127.2M150.7 123.3L154.4 121.0M133.1 153.2L133.0 149.2M201.2 134.4L193.2 137.0M173.3 118.4L181.2 115.3M186.8 116.9L189.3 113.0M161.2 116.5L158.9 119.2M150.5 131.5L145.4 137.6M133.0 149.2L136.6 146.7M148.2 149.4L143.2 151.9M183.1 111.7L185.7 109.1M142.9 132.2L141.7 135.6M192.0 143.7L197.6 147.9M205.4 119.7L200.4 116.9M146.0 145.6L145.5 141.8M156.9 122.4L151.9 127.2M177.4 128.6L179.3 123.7M191.8 122.9L188.5 128.1M153.9 156.4L151.8 163.7M196.9 125.9L203.3 128.8M185.7 140.4L183.9 146.8M169.7 159.6L162.7 163.0M150.5 131.5L155.3 130.2M190.3 150.9L188.9 158.7M178.0 111.6L172.8 111.9M170.7 131.6L168.6 137.2M155.3 130.2L149.7 135.7M130.6 160.7L132.4 163.6M134.5 156.7L130.6 160.7M139.0 164.8L142.6 169.4M141.7 135.6L145.8 133.2M170.7 131.6L171.8 126.7M168.9 117.9L170.0 114.8M141.5 139.0L140.9 143.5M168.2 167.7L167.2 175.2M136.3 161.0L134.5 168.8M185.1 120.8L186.8 116.9M205.4 119.7L204.9 123.6M162.7 163.0L161.2 170.3M155.3 130.2L154.6 134.4M181.2 115.3L189.3 113.0M145.4 137.6L140.9 143.5M149.7 135.7L150.3 140.0M156.9 122.4L155.9 126.0M172.8 111.9L175.5 110.0M156.9 122.4L162.0 121.7M151.9 127.2L150.5 131.5M183.1 111.7L191.1 109.8M156.6 167.1L150.5 170.1M188.5 128.1L194.7 130.7M171.8 126.7L172.8 122.2M179.7 119.4L173.3 118.4M192.0 143.7L183.9 146.8M145.4 137.6L149.7 135.7M148.2 160.4L145.4 155.6M136.3 161.0L132.4 163.6M176.1 156.8L171.0 152.9M210.5 127.0L209.1 132.2M146.7 167.6L146.0 175.2M134.5 168.8L138.1 173.4M190.3 150.9L182.9 153.7M191.8 122.9L193.0 118.5M203.3 128.8L201.2 134.4M139.0 164.8L134.5 168.8M168.9 117.9L176.4 114.5M193.0 118.5L194.3 114.9M202.5 113.1L196.5 111.0M137.0 150.3L138.6 153.3M146.7 167.6L142.6 169.4M193.2 137.0L199.5 141.2M178.0 111.6L185.7 109.1M175.8 163.7L174.6 171.9M148.2 149.4L145.4 155.6M188.4 164.7L182.0 161.5M188.4 164.7L181.4 168.8M180.5 136.5L178.9 142.9M172.2 146.3L177.8 149.6M203.9 153.4L196.4 156.0M183.1 125.9L185.1 120.8M151.8 163.7L146.7 167.6M186.8 116.9L181.2 115.3M142.6 169.4L140.9 177.0M175.8 163.7L169.7 159.6M196.4 156.0L188.9 158.7M159.5 125.7L162.0 121.7M183.1 111.7L178.0 111.6M177.4 128.6L170.7 131.6M200.4 116.9L202.5 113.1M134.5 156.7L132.4 163.6M181.2 115.3L183.1 111.7M147.3 129.2L145.8 133.2M191.8 122.9L196.9 125.9M172.8 111.9L180.0 109.2M185.7 140.4L192.0 143.7M146.7 167.6L143.9 162.2M134.5 168.8L130.8 172.4M190.3 150.9L196.4 156.0M133.1 153.2L134.5 156.7M155.3 130.2L159.5 125.7M188.4 164.7L188.9 158.7M192.0 143.7L190.3 150.9M168.9 117.9L162.5 118.7M138.1 138.3L141.7 135.6M205.4 119.7L207.1 115.4M141.5 139.0L145.4 137.6M191.8 122.9L183.1 125.9M153.9 156.4L148.2 160.4M154.6 134.4L159.8 129.9M143.2 151.9L140.5 158.4M150.5 170.1L150.1 178.7M185.1 120.8L179.7 119.4M166.9 122.0L168.9 117.9M158.9 119.2L156.9 122.4M176.1 156.8L182.9 153.7M170.7 131.6L164.2 135.3M205.4 119.7L211.5 121.9M163.4 114.8L168.1 112.9M178.0 111.6L180.0 109.2M143.9 162.2L139.0 164.8M154.4 121.0L158.9 119.2M149.7 135.7L154.6 134.4M191.1 109.8L185.7 109.1M142.6 169.4L138.1 173.4M151.9 127.2L155.9 126.0M205.4 119.7L198.3 121.0M189.3 113.0L191.1 109.8M198.3 121.0L200.4 116.9M196.4 156.0L195.6 162.9M162.7 163.0L156.6 167.1M180.0 109.2L175.5 110.0M141.1 147.7L145.5 141.8M183.1 125.9L188.5 128.1M171.8 126.7L165.2 126.2M178.9 142.9L183.9 146.8M137.0 142.5L136.6 146.7M168.2 167.7L162.7 163.0M182.9 153.7L188.9 158.7M185.1 120.8L193.0 118.5M211.5 121.9L210.5 127.0M159.8 129.9L159.5 125.7M161.2 116.5L154.4 121.0M183.9 146.8L182.9 153.7M176.4 114.5L170.0 114.8M168.1 112.9L175.5 110.0M136.6 146.7L140.9 143.5M204.9 123.6L203.3 128.8M203.3 128.8L209.1 132.2M138.6 153.3L136.3 161.0M193.0 118.5L186.8 116.9M188.4 164.7L195.6 162.9M153.0 123.5L151.9 127.2M145.4 137.6L145.5 141.8M185.7 109.1L187.3 107.2M211.5 121.9L204.9 123.6M134.5 168.8L133.1 176.8M180.5 175.8L174.6 171.9M197.6 147.9L203.9 153.4M145.5 141.8L150.3 140.0M188.5 128.1L182.0 130.7M171.8 126.7L179.3 123.7M180.5 136.5L185.7 140.4M199.5 141.2L197.6 147.9M138.1 138.3L133.5 145.3"/>
</g></defs>
<g fill="none" stroke-width="0.5">
<path stroke="#330101" d="M250.8 132.3L246.8 133.9M133.6 224.4L130.9 222.0M238.0 124.9L240.5 129.8M173.4 110.7L176.1 110.5M167.5 148.5L169.5 155.4M153.3 121.3L150.7 123.3M161.2 122.4L155.3 126.5M236.4 265.7L231.8 267.8M220.4 132.4L219.3 126.0M176.1 110.5L183.2 108.7M154.4 259.8L148.5 253.5M213.3 277.2L206.7 278.3M126.6 197.7L126.3 202.2M139.5 148.8L138.9 155.1M274.2 134.1L275.4 137.3M173.1 265.5L169.5 266.0M124.9 196.1L126.3 202.2M209.5 276.6L200.7 278.1M145.4 240.0L146.7 245.8M172.3 118.8L172.4 122.5M137.1 168.9L139.0 174.5M170.2 262.1L174.6 262.6M150.3 222.9L149.3 229.4M126.8 176.4L129.0 176.0M153.7 236.7L148.5 234.9M144.1 201.1L141.4 194.0M161.2 122.4L160.5 125.9M128.5 214.7L129.4 220.1M144.4 137.7L139.5 144.7M134.2 143.5L136.7 138.8M288.4 168.3L288.8 176.3M237.6 120.4L244.8 124.0M165.8 261.9L163.4 256.9M126.3 202.2L128.4 209.8M212.0 124.0L210.6 119.2M196.2 116.3L203.2 118.0M136.1 161.0L139.9 161.4M152.5 194.1L146.7 194.4M189.5 274.0L184.0 270.7M202.6 276.3L196.3 274.2M193.3 141.9L199.0 137.5M129.2 155.3L127.3 157.7M125.4 164.8L126.2 160.1M244.2 120.1L250.5 123.9M245.8 113.7L253.4 118.0M176.4 274.4L172.8 273.3M126.6 197.7L128.6 204.8M178.9 113.6L172.6 116.4M154.5 131.1L160.5 125.9M129.9 163.8L129.2 159.2M270.0 130.4L265.4 127.4M173.1 265.5L178.8 267.3M145.4 240.0L149.7 245.8M200.7 278.1L195.1 276.6M128.4 209.8L126.4 207.1M265.4 127.4L266.0 131.0M270.9 140.9L269.6 144.3M151.3 215.9L147.7 208.7M135.3 150.6L139.5 148.8M178.7 273.8L170.8 270.6M129.3 200.5L129.7 194.0M285.4 153.5L287.5 161.8M261.8 121.5L264.2 124.5M208.7 105.8L214.6 105.4M140.5 221.6L136.8 214.5M255.6 124.1L256.2 128.0M196.5 113.8L202.0 114.4M126.7 186.7L125.5 192.1M132.3 156.8L129.9 163.8M213.9 270.4L205.1 273.1M136.8 226.4L137.2 231.9M153.9 246.8L158.2 247.9M224.0 119.6L225.3 123.5M155.3 126.5L157.0 122.9M279.4 147.4L278.8 151.6M153.4 208.6L151.3 215.9M156.0 223.4L150.3 222.9M133.6 224.4L137.2 231.9M179.2 138.2L185.7 140.1M124.1 171.3L125.4 164.8M189.9 113.1L189.5 116.4M124.7 200.3L125.3 204.6M154.1 141.2L155.4 146.9M255.3 117.2L261.8 121.5M144.6 130.1L146.9 126.8M146.3 215.8L140.8 215.1M253.4 118.0L254.5 120.6M236.4 265.7L233.7 267.8M257.4 119.1L251.6 115.6M261.4 133.1L256.2 128.0M163.3 262.6L159.4 261.6M129.9 163.8L128.0 170.3M139.5 148.8L144.2 142.5M139.5 144.7L140.4 139.1M131.5 174.8L134.7 175.0M205.4 109.2L210.5 107.7M214.6 105.4L217.3 107.1M146.7 245.8L151.7 251.8M178.0 123.0L184.4 123.0M175.0 113.5L172.2 113.1M154.9 134.8L159.8 135.8M153.7 236.7L153.7 241.8M171.8 126.4L171.8 131.7M147.7 208.7L146.3 215.8M213.6 110.2L214.5 113.7M184.5 128.1L184.4 123.0M166.7 266.4L163.5 266.1M260.6 125.4L254.5 120.6M128.5 214.7L130.9 222.0M137.2 231.9L134.6 230.0M198.9 271.2L191.3 271.4M160.3 140.9L167.4 141.2M124.2 176.3L124.1 182.7M123.8 194.0L123.3 190.4M130.2 182.2L128.1 182.1M219.3 126.0L217.8 121.5M205.0 127.5L212.0 124.0M136.1 161.0L138.9 155.1M261.4 129.0L261.4 133.1M152.3 181.6L149.3 174.6M210.5 107.7L219.3 109.3M189.9 113.1L183.6 116.2M226.3 128.2L225.3 123.5M181.1 264.3L178.8 267.3M185.7 140.1L192.6 134.7M151.7 251.8L148.8 251.0M129.2 159.2L127.1 161.3M132.3 156.8L135.4 156.3M142.5 208.7L139.1 200.9M244.8 124.0L244.3 128.2M134.9 201.0L132.8 194.3M261.4 133.1L256.4 131.9M139.5 144.7L135.3 150.6M274.2 134.1L279.1 141.5M270.2 133.2L270.4 136.8M176.8 269.8L182.2 273.1M167.1 269.6L160.5 265.0M178.0 123.0L178.4 119.1M261.1 136.7L256.1 136.0M128.4 209.8L130.4 216.7M175.0 113.5L169.8 115.7M137.1 168.9L139.9 161.4M155.2 187.7L152.5 194.1M149.8 201.0L144.1 201.1M146.7 181.6L141.5 181.7M187.3 263.8L181.1 264.3M124.2 176.3L125.1 178.8M145.8 249.3L143.1 246.7M127.7 193.8L126.6 197.7M143.7 244.7L145.8 249.3M288.9 173.6L288.4 168.3M196.5 113.8L200.4 111.3M203.5 107.3L205.4 109.2M144.0 234.4L145.4 240.0M157.0 122.9L151.9 127.0M279.7 144.6L283.1 151.9M128.0 170.3L127.2 166.5M159.8 135.8L160.3 140.9M152.5 194.1L149.8 201.0M185.7 140.1L185.5 133.3M124.7 200.3L126.4 207.1M145.5 223.0L140.5 221.6M129.2 159.2L127.2 166.5M148.8 251.0L151.1 255.6M147.8 128.4L150.2 124.6M149.8 154.0L155.5 154.2M149.3 174.6L155.5 175.0M236.8 109.2L238.8 110.9M182.1 111.5L187.4 111.1M222.1 115.6L224.0 119.6M131.1 187.3L130.2 182.2M125.9 181.7L128.1 182.1M131.5 174.8L132.9 169.6M214.6 105.4L220.6 105.8M212.4 104.8L214.6 105.4M200.4 111.3L207.6 112.0M219.3 109.3L220.9 111.9M130.9 222.0L134.6 230.0M125.5 192.1L124.3 189.9M172.2 113.1L166.9 115.3M135.7 146.4L132.4 148.7M192.6 277.9L198.9 279.2M151.3 215.9L150.3 222.9M166.0 135.8L172.8 136.4M144.1 201.1L142.5 208.7M130.2 182.2L129.0 176.0M209.5 115.8L216.2 117.0M124.0 198.0L125.3 204.6M260.6 125.4L255.6 124.1M126.4 207.1L127.3 212.8M132.4 227.4L131.2 225.3M123.8 194.0L123.5 186.5M261.8 121.5L268.5 127.6M147.0 168.3L149.3 174.6M181.1 264.3L180.9 260.0M132.8 194.3L129.7 194.0M133.6 213.8L133.4 219.6M210.5 107.7L217.3 107.1M182.2 273.1L173.4 270.3M151.7 251.8L157.0 256.9M144.4 137.7L149.3 135.9M178.4 119.1L183.2 119.5M226.3 128.2L233.8 132.5M154.1 141.2L159.8 135.8M134.6 230.0L136.6 235.8M169.8 115.7L166.9 115.3M150.7 161.3L153.3 168.0M166.9 115.3L169.7 112.8M139.0 174.5L143.9 174.3M159.3 168.6L161.7 174.3M181.1 150.5L176.1 155.9M146.3 215.8L145.5 223.0M138.0 207.3L134.1 206.7M172.8 273.3L164.4 268.3M257.4 119.1L253.4 118.0M136.6 220.7L136.8 226.4M229.0 270.4L220.5 274.6M270.0 130.4L275.4 137.3M228.2 107.0L233.3 108.1M188.7 152.5L187.1 145.8M159.4 261.6L157.0 256.9M135.7 146.4L132.1 152.9M246.2 257.6L240.9 262.5M265.4 127.4L270.2 133.2M159.7 119.2L162.9 116.0M266.0 134.4L266.1 138.2M151.9 127.0L147.8 128.4M213.6 110.2L219.3 109.3M152.3 181.6L149.4 188.0M143.7 244.7L148.8 251.0M185.5 133.3L192.1 128.8M160.3 140.9L166.0 135.8M285.4 153.5L285.5 156.1M201.9 105.7L203.5 107.3M127.2 166.5L125.7 172.4M219.3 126.0L225.3 123.5M279.4 147.4L282.3 155.0M182.2 273.1L187.6 275.9M144.0 234.4L148.5 234.9M241.6 110.6L243.7 111.7M148.8 251.0L154.0 257.0M133.4 219.6L130.4 216.7M255.3 117.2L251.6 115.6M147.8 128.4L142.3 134.4M123.6 174.5L123.6 178.7M168.9 253.2L175.0 258.8M169.7 112.8L166.4 113.5M230.4 117.5L237.6 120.4M259.3 122.0L254.5 120.6M151.1 255.6L148.5 253.5M129.3 200.5L128.6 204.8M178.4 119.1L172.3 118.8M175.2 148.9L176.1 155.9M200.4 111.3L205.4 109.2M154.5 131.1L160.1 130.4M193.4 111.1L200.4 111.3M173.1 265.5L165.8 261.9M148.9 240.4L149.7 245.8M151.9 127.0L145.9 132.9M145.4 240.0L141.8 239.3M240.5 129.8L246.8 133.9M132.4 148.7L129.2 155.3M149.8 201.0L147.7 208.7M163.4 256.9L169.8 257.9M204.0 279.2L195.7 279.3M185.5 133.3L184.5 128.1M153.7 236.7L149.3 229.4M139.5 144.7L144.2 142.5M145.8 249.3L151.1 255.6M124.3 189.9L124.1 182.7M177.8 108.9L181.0 108.3M156.5 260.8L151.1 255.6M142.3 134.4L144.6 130.1M153.3 168.0L159.3 168.6M123.6 178.7L123.2 182.7M271.9 130.9L274.2 134.1M185.7 109.3L192.4 108.9M229.0 113.9L230.4 117.5M129.7 194.0L128.6 187.5M237.6 120.4L238.0 124.9M220.1 270.3L211.8 273.7M216.2 117.0L217.8 121.5M159.8 135.8L166.0 130.8M130.4 169.6L132.9 169.6M153.9 246.8L153.7 241.8M202.0 114.4L207.6 112.0M137.3 180.6L139.0 174.5M145.5 223.0L144.2 228.8M153.7 241.8L148.5 234.9M152.5 194.1L149.4 188.0M183.2 119.5L183.6 116.2M134.6 230.0L138.7 237.1M169.7 112.8L176.1 110.5M187.1 145.8L193.3 141.9M166.9 115.3L159.7 119.2M149.8 154.0L155.4 146.9M193.3 141.9L200.4 143.4M129.2 155.3L130.6 149.9M142.5 208.7L140.8 215.1M192.4 108.9L193.4 111.1M214.5 113.7L222.1 115.6M244.2 120.1L244.8 124.0M194.9 147.6L193.3 141.9M245.8 113.7L247.6 116.7M125.3 204.6L127.3 212.8M229.0 270.4L227.7 271.2M150.2 124.6L146.9 126.8M132.0 163.1L136.1 161.0M270.2 133.2L275.3 140.1M173.1 265.5L176.8 269.8M219.3 109.3L223.9 108.0M159.7 119.2L153.5 123.3M176.8 269.8L184.0 270.7M270.4 136.8L274.8 143.9M166.0 135.8L171.8 131.7M265.4 127.4L260.6 125.4M209.5 115.8L214.5 113.7M187.6 275.9L178.7 273.8M146.7 181.6L143.8 187.7M192.1 128.8L190.7 123.8M132.4 227.4L136.6 235.8M225.3 123.5L233.4 126.4M161.2 122.4L166.8 122.4M244.3 128.2L246.8 133.9M164.3 162.3L166.4 168.6M288.2 165.9L287.5 161.8M134.2 143.5L132.1 146.1M261.8 121.5L257.4 119.1M141.5 181.7L139.3 187.5M223.2 272.5L220.5 274.6M136.8 226.4L133.6 224.4M287.1 163.5L285.1 159.5M261.4 129.0L266.0 134.4M146.7 181.6L149.3 174.6M156.0 223.4L151.3 215.9M141.5 181.7L143.9 174.3M208.0 269.4L198.9 271.2M124.3 189.9L123.8 194.0M183.7 113.7L183.6 116.2M231.0 122.0L233.4 126.4M169.7 112.8L162.9 116.0M240.9 262.5L236.4 265.7M124.7 200.3L124.0 198.0M139.0 174.5L141.5 168.2M138.9 155.1L139.9 161.4M172.8 136.4L174.1 142.3M259.9 120.1L261.8 121.5M222.1 115.6L229.0 113.9M146.3 215.8L142.5 208.7M165.8 261.9L163.3 262.6M134.5 232.4L138.6 240.1M287.5 161.8L287.1 163.5M207.2 105.0L208.7 105.8M132.9 181.7L131.1 187.3M238.0 124.9L244.3 128.2M128.4 209.8L128.5 214.7M172.6 116.4L169.8 115.7M176.8 269.8L178.8 267.3M187.6 275.9L192.6 277.9M154.9 134.8L154.1 141.2M125.1 178.8L125.7 172.4M137.6 140.3L139.1 136.4M129.9 163.8L130.4 169.6M169.5 266.0L166.7 266.4M151.3 215.9L146.3 215.8M166.7 266.4L159.4 261.6M156.5 260.8L154.0 257.0M198.9 271.2L193.5 267.7M190.6 120.2L197.7 120.8M123.6 178.7L124.1 182.7M147.0 168.3L150.7 161.3M162.9 116.0L159.8 116.9M160.3 140.9L161.3 147.7M124.2 176.3L123.6 178.7M146.9 126.8L150.7 123.3M236.2 116.7L244.2 120.1M126.7 186.7L127.7 193.8M205.0 127.5L212.4 129.5M137.3 180.6L134.7 175.0M155.3 126.5L151.9 127.0M160.5 125.9L166.2 126.1M198.5 108.8L205.4 109.2M210.5 107.7L213.6 110.2M255.3 117.2L248.9 113.7M193.3 141.9L192.6 134.7M127.3 212.8L129.4 220.1M196.3 274.2L191.3 271.4M179.2 138.2L185.5 133.3M206.7 278.3L200.7 278.1M149.7 245.8L146.7 245.8M129.2 155.3L127.1 161.3M150.7 161.3L155.5 154.2M165.8 261.9L169.5 266.0M154.1 141.2L160.3 140.9M144.6 130.1L141.9 132.1M176.4 274.4L181.5 276.7M138.0 207.3L136.8 214.5M132.3 156.8L132.0 163.1M155.3 126.5L160.5 125.9M154.4 259.8L151.1 255.6M150.2 124.6L144.6 130.1M197.5 125.6L204.2 122.3M185.8 106.8L188.0 106.8M282.8 148.3L279.7 144.6M270.2 133.2L266.0 131.0M139.1 200.9L136.8 194.3M250.8 132.3L256.1 136.0M132.9 181.7L130.2 182.2M261.1 136.7L256.4 131.9M214.6 105.4L222.7 106.6M218.2 273.5L209.5 276.6M187.6 275.9L195.1 276.6M136.6 220.7L140.5 221.6M261.4 133.1L266.1 138.2M270.4 136.8L270.9 140.9M178.7 273.8L183.7 276.6M175.0 113.5L182.1 111.5M149.8 201.0L146.7 194.4M137.2 231.9L138.7 237.1M124.5 167.6L126.2 160.1M134.2 143.5L130.6 149.9M282.1 145.9L282.8 148.3M149.4 188.0L143.8 187.7M132.8 194.3L132.0 200.7M288.9 173.6L288.8 176.3M141.5 181.7L137.3 180.6M181.5 276.7L172.8 273.3M220.1 270.3L218.2 273.5M216.2 117.0L210.6 119.2M275.3 140.1L279.4 147.4M143.3 148.9L143.8 154.8M156.4 201.3L149.8 201.0M144.0 234.4L144.2 228.8M141.8 239.3L143.7 244.7M190.1 107.4L188.0 106.8M148.8 251.0L145.8 249.3M149.8 154.0L150.7 161.3M159.3 168.6L164.3 162.3M166.4 113.5L173.4 110.7M214.5 113.7L220.9 111.9M230.4 117.5L236.2 116.7M182.1 111.5L183.7 113.7M142.5 208.7L138.0 207.3M244.8 124.0L250.2 128.1M259.3 122.0L253.4 118.0M193.5 267.7L185.2 267.4M136.7 138.8L132.1 146.1M166.7 119.3L163.7 118.9M130.6 149.9L128.6 153.0M149.3 135.9L154.9 134.8M139.3 187.5L136.8 194.3M189.9 113.1L196.5 113.8M178.9 113.6L177.3 116.5M163.8 242.3L159.1 242.4M200.4 111.3L202.0 114.4M167.1 269.6L164.4 268.3M181.1 150.5L187.1 145.8M211.8 273.7L205.1 273.1M137.6 140.3L132.4 148.7M135.3 150.6L132.1 152.9M266.0 134.4L270.9 140.9M261.4 133.1L261.1 136.7M135.7 146.4L137.6 140.3M143.8 154.8L149.8 154.0M166.7 266.4L170.8 270.6M233.3 108.1L236.8 109.2M190.6 120.2L189.5 116.4M158.3 181.8L155.5 175.0M201.1 105.0L198.1 105.1M195.1 106.0L192.3 105.7M126.4 207.1L125.3 204.6M153.3 168.0L157.3 160.7M229.0 113.9L234.6 113.3M132.8 194.3L131.1 187.3M144.0 234.4L148.9 240.4M203.5 107.3L210.5 107.7M138.6 240.1L143.1 246.7M214.2 135.9L220.4 132.4M146.7 181.6L143.9 174.3M260.6 125.4L261.4 129.0M128.0 170.3L125.7 172.4M202.0 114.4L209.5 115.8M130.4 216.7L130.9 222.0M144.6 130.1L139.1 136.4M169.8 115.7L172.2 113.1M160.1 130.4L159.8 135.8M182.1 111.5L185.7 109.3M245.8 113.7L251.6 115.6M168.9 253.2L163.9 248.4M236.8 109.2L243.7 111.7M138.0 207.3L134.9 201.0M170.8 270.6L163.5 266.1M197.5 125.6L197.7 120.8M166.4 113.5L159.8 116.9M136.6 220.7L133.4 219.6M125.1 178.8L124.1 182.7M163.8 242.3L163.9 248.4M128.6 187.5L128.1 182.1M204.2 122.3L212.0 124.0M150.1 132.1L145.9 132.9M141.5 168.2L143.9 174.3M266.0 134.4L261.4 133.1M158.2 247.9L153.7 241.8M170.2 262.1L165.8 261.9M189.2 278.2L186.5 277.9M179.1 132.9L184.5 128.1M185.5 133.3L192.6 134.7M196.5 113.8L196.2 116.3M146.9 126.8L141.9 132.1M125.0 185.9L124.1 182.7M131.0 205.7L134.1 206.7M181.5 276.7L186.5 277.9M201.1 105.0L201.9 105.7M159.4 261.6L156.5 260.8M133.6 213.8L136.6 220.7M205.0 127.5L204.2 122.3M213.9 270.4L211.8 273.7M197.7 120.8L203.2 118.0M224.0 119.6L217.8 121.5M275.3 140.1L270.4 136.8M222.7 106.6L223.9 108.0M208.0 269.4L205.1 273.1M231.0 122.0L225.3 123.5M191.3 271.4L184.0 270.7M178.4 119.1L183.6 116.2M274.8 143.9L274.7 147.9M150.7 161.3L157.3 160.7M216.2 117.0L222.1 115.6M233.0 110.5L234.6 113.3M244.2 120.1L249.4 120.1M136.6 220.7L139.9 227.0M127.7 193.8L128.6 187.5M185.2 267.4L181.1 264.3M130.6 149.9L127.3 157.7M129.3 200.5L126.6 197.7M167.1 269.6L172.8 273.3M187.4 111.1L193.4 111.1M139.3 187.5L134.8 187.3M218.2 273.5L215.8 275.7M227.7 271.2L220.5 274.6M148.9 240.4L145.4 240.0M159.7 119.2L156.6 119.7M223.9 108.0L233.0 110.5M139.5 144.7L139.5 148.8M248.9 113.7L251.6 115.6M244.3 128.2L240.5 129.8M166.7 119.3L172.3 118.8M125.0 185.9L125.1 178.8M154.0 257.0L151.1 255.6M155.4 146.9L155.5 154.2M164.3 162.3L169.5 155.4M124.1 171.3L123.6 174.5M153.3 168.0L155.5 175.0M236.2 116.7L242.2 116.1M185.7 109.3L187.4 111.1M140.8 215.1L136.8 214.5M136.6 235.8L138.6 240.1M130.4 169.6L131.5 174.8M159.8 236.3L154.7 229.7M163.9 248.4L158.2 247.9M241.6 110.6L248.9 113.7M220.5 274.6L213.3 277.2M217.8 121.5L225.3 123.5M187.1 145.8L194.9 147.6M133.4 219.6L133.6 224.4M127.3 212.8L128.7 218.0M132.1 152.9L132.4 148.7M168.9 253.2L175.1 254.5M148.5 148.4L155.4 146.9M171.8 131.7L172.8 136.4M170.8 270.6L176.4 274.4M214.5 113.7L216.2 117.0M129.3 200.5L131.0 205.7M183.6 116.2L189.5 116.4M181.0 108.3L188.0 106.8M128.6 153.0L126.2 160.1M187.4 111.1L192.4 108.9M150.2 124.6L153.3 121.3M132.0 163.1L132.9 169.6M167.4 141.2L174.1 142.3M238.0 124.9L244.8 124.0M132.0 200.7L129.7 194.0M148.9 240.4L153.9 246.8M212.4 129.5L219.3 126.0M178.6 127.3L184.4 123.0M125.7 172.4L125.2 168.7M220.9 111.9L222.1 115.6M207.6 112.0L214.5 113.7M148.5 234.9L144.2 228.8M198.9 271.2L196.3 274.2M183.2 108.7L178.9 110.9M185.7 109.3L190.1 107.4M175.0 113.5L178.9 110.9M142.3 134.4L139.1 136.4M201.9 105.7L207.2 105.0M159.4 261.6L163.5 266.1M123.6 178.7L123.5 186.5M131.0 205.7L132.0 200.7M136.8 214.5L134.1 206.7M229.0 113.9L236.2 116.7M214.2 135.9L212.4 129.5M151.8 257.3L148.5 253.5M190.7 123.8L197.7 120.8M139.9 227.0L136.8 226.4M276.9 137.2L274.2 134.1M163.9 248.4L163.8 253.1M133.4 219.6L136.8 226.4M196.3 274.2L195.1 276.6M224.0 119.6L230.4 117.5M234.6 113.3L242.2 116.1M192.4 108.9L198.5 108.8M185.8 106.8L192.3 105.7M181.0 108.3L183.2 108.7M141.9 132.1L136.7 138.8M174.1 142.3L175.2 148.9M287.5 161.8L285.5 156.1M193.4 111.1L198.5 108.8M204.0 279.2L206.7 278.3M163.5 266.1L160.5 265.0M204.2 122.3L203.2 118.0M211.8 273.7L209.5 276.6M226.1 269.5L218.2 273.5M209.5 115.8L210.6 119.2M128.6 204.8L128.4 209.8M172.6 116.4L175.0 113.5M144.2 142.5L143.3 148.9M140.4 139.1L142.3 134.4M279.1 141.5L279.7 144.6M148.9 240.4L148.5 234.9M169.5 266.0L163.3 262.6M154.4 259.8L151.8 257.3M187.6 275.9L183.7 276.6M205.1 273.1L202.6 276.3M179.2 138.2L172.8 136.4M140.8 242.6L143.1 246.7M162.9 116.0L166.4 113.5M155.5 154.2L162.9 154.1M164.3 162.3L171.0 162.2M288.2 165.9L288.4 168.3M249.4 120.1L254.5 120.6M236.2 116.7L237.6 120.4M130.4 169.6L132.0 163.1M175.0 258.8L175.1 254.5M160.5 125.9L160.1 130.4M198.5 108.8L200.4 111.3M183.7 113.7L177.3 116.5M153.9 246.8L149.7 245.8M138.9 155.1L143.8 154.8M153.5 123.3L150.2 124.6M192.4 108.9L196.5 107.3M216.2 117.0L224.0 119.6M244.8 124.0L250.5 123.9M170.2 262.1L169.8 257.9M193.5 267.7L191.3 271.4M155.3 126.5L154.5 131.1M192.6 134.7L198.5 131.3M132.0 163.1L135.4 156.3M197.5 125.6L205.0 127.5M185.8 106.8L181.0 108.3M127.1 161.3L125.4 164.8M166.4 113.5L163.4 114.8M250.8 132.3L256.4 131.9M207.2 105.0L214.6 105.4M128.6 204.8L130.5 211.5M172.6 116.4L166.7 119.3M125.1 178.8L126.8 176.4M218.2 273.5L211.8 273.7M275.4 137.3L270.2 133.2M270.4 136.8L266.0 134.4M137.6 140.3L134.2 143.5M129.9 163.8L132.0 163.1M187.3 263.8L185.2 267.4M190.6 120.2L196.2 116.3M282.1 145.9L279.1 141.5M149.4 188.0L146.7 181.6M183.7 276.6L176.4 274.4M136.8 226.4L140.8 233.6M155.3 126.5L150.1 132.1M135.4 156.3L136.1 161.0M268.5 127.6L270.0 130.4M285.1 159.5L282.3 155.0M244.3 128.2L250.8 132.3M179.2 138.2L179.1 132.9M124.3 189.9L124.9 196.1M196.3 274.2L189.5 274.0M141.8 239.3L138.7 237.1M149.7 245.8L151.7 251.8M181.1 150.5L175.2 148.9M158.3 181.8L152.3 181.6M193.5 267.7L187.3 263.8M174.6 262.6L175.0 258.8M207.2 105.0L212.4 104.8M123.5 186.5L123.3 190.4M166.7 119.3L169.8 115.7M130.6 149.9L132.1 146.1M149.3 135.9L149.0 141.5M282.8 148.3L283.1 151.9M169.7 248.8L163.9 248.4M139.1 200.9L134.9 201.0M212.4 129.5L212.0 124.0M144.2 142.5L149.3 135.9M181.1 150.5L188.7 152.5M155.8 253.0L157.0 256.9M135.3 150.6L135.7 146.4M132.9 169.6L137.1 168.9M143.8 154.8L145.2 161.5M220.6 105.8L222.7 106.6M243.7 111.7L245.8 113.7M192.6 277.9L195.1 276.6M205.1 273.1L198.9 271.2M124.9 196.1L123.8 194.0M127.3 157.7L128.6 153.0M250.2 128.1L256.2 128.0M196.5 107.3L203.5 107.3M150.1 132.1L149.3 135.9M249.4 120.1L255.6 124.1M276.9 137.2L282.1 145.9M160.5 125.9L166.8 122.4M288.4 168.3L287.1 163.5M198.5 108.8L203.5 107.3M143.3 148.9L148.5 148.4M156.5 260.8L160.5 265.0M141.5 181.7L139.0 174.5M182.9 156.0L181.1 150.5M149.7 245.8L155.8 253.0M130.5 211.5L130.4 216.7M191.3 271.4L189.5 274.0M233.4 126.4L240.5 129.8M138.9 155.1L143.3 148.9M130.4 216.7L128.5 214.7M128.0 170.3L130.4 169.6M124.2 176.3L125.2 168.7M217.3 107.1L223.9 108.0M173.4 270.3L166.7 266.4M178.8 267.3L174.6 262.6M157.0 256.9L154.0 257.0M166.7 119.3L161.2 122.4M287.5 161.8L288.4 168.3M204.0 279.2L213.3 277.2M242.2 116.1L244.2 120.1M134.1 206.7L132.0 200.7M181.1 150.5L179.7 143.8M126.7 186.7L128.6 187.5M155.8 253.0L159.9 257.2M135.3 150.6L132.3 156.8M279.1 141.5L282.8 148.3M211.8 273.7L202.6 276.3M154.9 134.8L160.1 130.4M150.1 132.1L151.9 127.0M154.4 259.8L158.1 263.5M149.3 229.4L145.5 223.0M189.2 278.2L181.5 276.7M137.2 231.9L141.8 239.3M169.8 257.9L174.6 262.6M179.1 132.9L185.5 133.3M179.2 138.2L174.1 142.3M143.8 187.7L139.3 187.5M250.2 128.1L256.4 131.9M172.6 116.4L172.3 118.8M197.7 120.8L204.2 122.3M128.0 170.3L126.8 176.4M144.4 137.7L145.9 132.9M159.8 116.9L157.3 118.4M256.4 131.9L256.1 136.0M141.8 239.3L146.7 245.8M207.3 139.6L214.2 135.9M210.6 119.2L217.8 121.5M191.3 271.4L185.2 267.4M124.5 167.6L124.1 171.3M139.9 227.0L140.5 221.6M166.0 130.8L166.0 135.8M274.8 143.9L270.9 140.9M160.1 130.4L166.0 130.8M168.9 253.2L163.8 253.1M170.8 270.6L167.1 269.6M185.2 267.4L184.0 270.7M149.3 135.9L154.5 131.1M189.9 113.1L193.4 111.1M146.7 194.4L143.8 187.7M187.4 111.1L189.9 113.1M139.3 187.5L137.3 180.6M226.5 106.7L228.2 107.0M150.1 132.1L144.4 137.7M132.9 169.6L136.1 161.0M204.2 122.3L210.6 119.2M163.7 118.9L159.7 119.2M166.2 126.1L171.8 126.4M259.3 122.0L260.6 125.4M170.2 262.1L173.1 265.5M141.5 168.2L147.0 168.3M205.4 109.2L213.6 110.2M179.1 132.9L178.6 127.3M223.9 108.0L226.5 110.9M146.7 245.8L143.7 244.7M195.1 106.0L188.0 106.8M166.7 119.3L166.8 122.4M282.1 145.9L285.4 153.5M178.9 113.6L183.7 113.7M181.1 264.3L175.0 258.8M203.5 107.3L208.7 105.8M155.2 187.7L149.4 188.0M136.8 194.3L134.8 187.3M201.1 105.0L207.2 105.0M140.8 215.1L138.0 207.3M136.6 235.8L134.5 232.4M125.9 181.7L125.0 185.9M268.5 127.6L274.2 134.1M143.3 148.9L149.0 141.5M125.9 181.7L126.8 176.4M285.5 156.1L285.1 159.5M275.3 140.1L274.8 143.9M178.0 123.0L171.8 126.4M163.9 248.4L159.1 242.4M222.7 106.6L230.6 108.2M178.4 119.1L177.3 116.5M130.4 216.7L133.6 224.4M179.7 143.8L187.1 145.8M220.5 274.6L215.8 275.7M169.8 115.7L163.7 118.9M134.7 175.0L137.1 168.9M123.8 194.0L124.0 198.0M163.3 262.6L157.0 256.9M132.3 156.8L132.1 152.9M266.1 138.2L261.1 136.7M217.3 107.1L222.7 106.6M148.5 148.4L149.8 154.0M158.3 181.8L155.2 187.7M233.0 110.5L240.2 112.9M177.3 116.5L183.6 116.2M185.2 267.4L178.8 267.3M198.5 131.3L206.2 132.8M138.7 237.1L140.8 242.6M282.8 148.3L285.5 156.1M167.4 141.2L167.5 148.5M163.8 253.1L158.2 247.9M163.7 118.9L157.0 122.9M212.4 129.5L220.4 132.4M178.6 127.3L184.5 128.1M275.4 137.3L279.7 144.6M143.8 154.8L148.5 148.4M266.0 131.0L261.4 129.0M126.8 176.4L125.7 172.4M149.0 141.5L154.1 141.2M207.6 112.0L209.5 115.8M196.5 113.8L189.5 116.4M126.4 207.1L128.5 214.7M145.9 132.9L142.3 134.4M155.4 146.9L161.3 147.7M124.1 171.3L123.6 178.7M149.4 188.0L146.7 194.4M184.5 128.1L190.7 123.8M190.7 123.8L197.5 125.6M206.2 132.8L212.4 129.5M283.1 151.9L279.4 147.4M137.3 180.6L132.9 181.7M179.7 143.8L179.2 138.2M175.0 258.8L180.9 260.0M159.8 236.3L153.7 236.7M163.3 262.6L159.9 257.2M228.2 135.3L226.3 128.2M160.1 130.4L166.2 126.1M132.1 152.9L129.2 155.3M236.8 109.2L241.6 110.6M190.1 107.4L196.5 107.3M234.6 113.3L236.2 116.7M233.8 132.5L233.4 126.4M233.7 267.8L229.0 270.4M129.4 220.1L128.7 218.0M181.0 108.3L176.1 110.5M133.6 213.8L134.1 206.7M128.1 182.1L129.0 176.0M139.1 200.9L138.0 207.3M141.4 194.0L136.8 194.3M163.5 266.1L156.5 260.8M178.6 127.3L178.0 123.0M131.0 205.7L130.5 211.5M166.2 126.1L172.4 122.5M128.6 204.8L126.3 202.2M257.4 119.1L264.2 124.5M279.1 141.5L275.4 137.3M139.9 161.4L141.5 168.2M149.3 229.4L148.5 234.9M176.8 269.8L169.5 266.0M192.6 277.9L200.7 278.1M220.9 111.9L229.0 113.9M145.9 132.9L140.4 139.1M130.9 222.0L132.4 227.4M124.1 171.3L124.2 176.3M172.2 113.1L176.1 110.5M140.8 242.6L138.6 240.1M155.5 154.2L157.3 160.7M261.4 129.0L256.2 128.0M231.8 267.8L223.2 272.5M202.0 114.4L203.2 118.0M139.9 227.0L140.8 233.6M264.2 124.5L270.0 130.4M157.3 160.7L164.3 162.3M124.1 182.7L123.5 186.5M178.0 123.0L172.4 122.5M276.9 137.2L279.1 141.5M222.7 106.6L228.2 107.0M156.5 260.8L154.4 259.8M187.1 145.8L185.7 140.1M178.6 127.3L171.8 131.7M123.8 194.0L124.7 200.3M139.9 227.0L144.2 228.8M132.1 152.9L129.2 159.2M182.2 273.1L189.5 274.0M166.0 130.8L171.8 126.4M157.0 122.9L153.5 123.3M153.5 123.3L156.6 119.7M145.2 161.5L150.7 161.3M166.4 113.5L170.2 111.7M230.6 108.2L233.0 110.5M138.7 237.1L143.7 244.7M192.6 134.7L199.0 137.5M182.1 111.5L178.9 110.9M158.6 252.4L158.2 247.9M127.1 161.3L127.3 157.7M251.6 115.6L253.4 118.0M160.5 265.0L158.1 263.5M220.4 132.4L226.3 128.2M149.0 141.5L154.9 134.8M132.9 181.7L134.7 175.0M141.5 168.2L145.2 161.5M123.2 182.7L123.3 190.4M144.2 142.5L149.0 141.5M140.4 139.1L137.6 140.3M223.9 108.0L230.6 108.2M228.2 107.0L236.8 109.2M184.4 123.0L190.6 120.2M142.3 134.4L137.6 140.3M172.2 113.1L178.9 110.9M192.6 277.9L183.7 276.6M143.8 187.7L141.4 194.0M238.8 110.9L245.8 113.7M134.8 187.3L131.1 187.3M190.7 123.8L190.6 120.2M136.6 235.8L140.8 242.6M130.2 182.2L131.5 174.8M198.1 105.1L192.3 105.7M285.5 156.1L287.1 163.5M169.5 155.4L171.0 162.2M268.5 127.6L264.2 124.5M260.6 125.4L266.0 131.0M220.5 274.6L219.3 275.0M212.0 124.0L219.3 126.0M140.8 233.6L137.2 231.9M153.9 246.8L155.8 253.0M148.5 148.4L154.1 141.2M233.0 110.5L238.8 110.9M154.7 229.7L150.3 222.9M158.6 252.4L163.8 253.1M233.8 132.5L240.5 129.8M170.2 111.7L173.4 110.7M266.0 125.0L268.5 127.6M146.7 194.4L144.1 201.1M158.6 252.4L159.9 257.2M140.4 139.1L135.7 146.4M155.8 253.0L151.7 251.8M129.0 176.0L131.5 174.8M259.3 122.0L265.4 127.4M132.9 169.6L134.7 175.0M275.4 137.3L275.3 140.1M169.5 266.0L173.4 270.3M207.6 112.0L213.6 110.2M159.1 242.4L153.7 241.8M184.4 123.0L183.2 119.5M155.4 146.9L160.3 140.9M132.4 148.7L134.2 143.5M162.9 154.1L169.5 155.4M140.8 215.1L140.5 221.6M195.1 106.0L201.9 105.7M150.3 222.9L145.5 223.0M240.2 112.9L242.2 116.1M231.8 267.8L229.0 270.4M196.5 107.3L198.5 108.8M183.7 276.6L181.5 276.7M249.4 120.1L250.5 123.9M202.0 114.4L196.2 116.3M185.7 109.3L183.2 108.7M188.0 106.8L183.2 108.7M135.4 156.3L138.9 155.1M223.2 272.5L218.2 273.5M130.5 211.5L128.4 209.8M153.5 123.3L147.8 128.4M166.8 122.4L172.4 122.5M274.8 143.9L278.8 151.6M127.2 166.5L125.2 168.7M134.7 175.0L139.0 174.5M125.2 168.7L125.4 164.8M128.0 170.3L129.0 176.0M217.3 107.1L219.3 109.3M226.5 110.9L234.6 113.3M192.6 134.7L192.1 128.8M224.0 119.6L231.0 122.0M129.4 220.1L132.4 227.4M179.1 132.9L172.8 136.4M127.1 161.3L125.2 168.7M167.4 141.2L172.8 136.4M161.3 147.7L162.9 154.1M139.1 136.4L136.7 138.8M226.1 269.5L223.2 272.5M209.5 115.8L203.2 118.0M123.2 182.7L123.5 186.5M139.9 161.4L143.8 154.8M257.4 119.1L259.3 122.0M220.9 111.9L226.5 110.9M220.6 105.8L228.2 107.0M198.9 279.2L189.2 278.2M243.7 111.7L251.6 115.6M215.8 275.7L206.7 278.3M140.8 242.6L145.8 249.3M205.1 273.1L196.3 274.2M124.9 196.1L124.7 200.3M162.9 116.0L156.6 119.7M183.7 276.6L189.2 278.2M127.3 157.7L126.2 160.1M147.7 208.7L144.1 201.1M136.8 194.3L134.9 201.0M143.8 187.7L141.5 181.7M250.2 128.1L250.8 132.3M200.4 143.4L199.0 137.5M150.1 132.1L154.5 131.1M192.1 128.8L198.5 131.3M283.1 151.9L285.1 159.5M159.8 116.9L163.4 114.8M264.2 124.5L265.4 127.4M126.3 202.2L126.4 207.1M145.2 161.5L149.8 154.0M230.6 108.2L236.8 109.2M152.3 181.6L155.5 175.0M234.6 113.3L240.2 112.9M153.4 208.6L147.7 208.7M144.2 228.8L140.5 221.6M173.4 270.3L170.8 270.6M127.7 193.8L129.7 194.0M183.2 119.5L189.5 116.4M143.1 246.7L148.5 253.5M143.9 174.3L147.0 168.3M189.5 116.4L196.2 116.3M133.6 213.8L136.8 214.5M153.3 121.3L157.3 118.4M156.6 119.7L153.3 121.3M141.4 194.0L139.1 200.9M250.5 123.9L256.2 128.0M242.2 116.1L249.4 120.1M126.7 186.7L128.1 182.1M199.0 137.5L206.2 132.8M126.6 197.7L124.9 196.1M161.2 122.4L157.0 122.9M274.2 134.1L270.0 130.4M266.0 131.0L270.4 136.8M198.9 279.2L204.0 279.2M163.7 118.9L166.9 115.3M166.2 126.1L166.0 130.8M205.4 109.2L207.6 112.0M149.3 229.4L144.2 228.8M209.5 276.6L202.6 276.3M124.5 167.6L125.4 164.8M195.1 276.6L189.5 274.0M270.9 140.9L274.7 147.9M155.5 154.2L161.3 147.7M179.7 143.8L175.2 148.9M238.8 110.9L243.7 111.7M129.3 200.5L132.0 200.7M155.2 187.7L152.3 181.6M247.6 116.7L254.5 120.6M128.5 214.7L127.3 212.8M157.3 160.7L162.9 154.1M144.4 137.7L140.4 139.1M285.5 156.1L283.1 151.9M137.3 180.6L134.8 187.3M208.7 105.8L217.3 107.1M159.9 257.2L157.0 256.9M165.8 261.9L159.9 257.2M136.1 161.0L137.1 168.9M279.7 144.6L279.4 147.4M173.4 270.3L178.7 273.8M166.0 130.8L171.8 131.7M168.9 253.2L169.8 257.9M133.6 224.4L134.6 230.0M139.1 136.4L134.2 143.5M138.7 237.1L136.6 235.8M167.5 148.5L175.2 148.9M169.8 257.9L163.8 253.1M176.4 274.4L167.1 269.6M146.7 194.4L141.4 194.0M198.9 279.2L206.7 278.3M254.5 120.6L255.6 124.1M236.4 265.7L229.0 270.4M176.1 110.5L178.9 110.9M124.0 198.0L123.3 190.4M178.9 113.6L175.0 113.5M139.5 148.8L143.3 148.9M149.0 141.5L148.5 148.4M189.2 278.2L195.7 279.3M178.9 113.6L182.1 111.5M184.0 270.7L178.8 267.3M146.7 245.8L148.8 251.0M127.3 157.7L125.4 164.8M270.9 140.9L266.1 138.2M145.9 132.9L147.8 128.4M137.1 168.9L141.5 168.2M201.1 105.0L205.3 104.7M135.3 150.6L135.4 156.3M144.1 201.1L139.1 200.9M136.8 194.3L132.8 194.3M125.9 181.7L126.7 186.7M261.4 129.0L255.6 124.1M184.5 128.1L192.1 128.8M206.2 132.8L214.2 135.9M126.7 186.7L125.0 185.9M179.7 143.8L185.7 140.1M279.4 147.4L274.8 143.9M132.3 156.8L129.2 159.2M226.5 110.9L233.0 110.5M190.1 107.4L192.4 108.9M179.1 132.9L171.8 131.7M202.6 276.3L195.1 276.6M156.6 119.7L150.2 124.6M169.8 257.9L175.0 258.8M149.3 174.6L153.3 168.0M198.5 131.3L205.0 127.5M134.9 201.0L134.1 206.7M141.4 194.0L139.3 187.5M256.2 128.0L256.4 131.9M199.0 137.5L198.5 131.3M131.0 205.7L128.6 204.8M177.3 116.5L172.3 118.8M129.9 163.8L127.2 166.5M270.0 130.4L270.2 133.2M173.1 265.5L174.6 262.6M266.0 131.0L266.0 134.4M243.7 111.7L248.9 113.7M215.8 275.7L213.3 277.2M130.9 222.0L129.4 220.1M162.9 154.1L167.5 148.5M240.2 112.9L245.8 113.7M152.3 181.6L146.7 181.6M178.7 273.8L176.4 274.4M134.8 187.3L132.8 194.3M197.7 120.8L196.2 116.3M159.8 116.9L153.3 121.3M169.5 155.4L175.2 148.9M157.3 160.7L159.3 168.6M283.1 151.9L282.3 155.0M130.2 182.2L128.6 187.5M207.3 139.6L206.2 132.8M203.2 118.0L210.6 119.2M125.0 185.9L124.3 189.9M157.0 122.9L159.7 119.2M172.4 122.5L171.8 126.4M190.1 107.4L195.1 106.0M145.2 161.5L147.0 168.3M185.7 140.1L193.3 141.9M170.2 111.7L177.8 108.9M153.3 121.3L146.9 126.8M129.4 220.1L131.2 225.3M161.3 147.7L167.4 141.2M129.2 159.2L129.2 155.3M143.9 174.3L149.3 174.6M166.4 168.6L171.0 162.2M231.0 122.0L237.6 120.4M205.3 104.7L207.2 105.0M131.0 205.7L133.6 213.8M160.5 265.0L154.4 259.8M139.5 144.7L135.7 146.4M139.9 161.4L145.2 161.5M228.2 107.0L230.6 108.2M176.8 269.8L173.4 270.3M178.0 123.0L183.2 119.5M184.4 123.0L190.7 123.8M172.2 113.1L169.7 112.8M213.6 110.2L220.9 111.9M238.8 110.9L240.2 112.9M134.8 187.3L132.9 181.7M139.9 227.0L144.0 234.4M127.7 193.8L125.5 192.1M143.7 244.7L140.8 242.6M155.5 175.0L159.3 168.6M159.8 236.3L159.1 242.4M244.3 128.2L250.2 128.1M125.0 185.9L125.5 192.1M144.0 234.4L140.8 233.6M124.1 171.3L125.2 168.7M145.5 223.0L140.8 215.1M230.6 108.2L238.8 110.9M198.5 131.3L197.5 125.6M181.1 264.3L174.6 262.6M151.7 251.8L154.0 257.0M163.3 262.6L166.7 266.4M266.0 125.0L261.8 121.5M131.1 187.3L129.7 194.0M242.2 116.1L247.6 116.7M134.9 201.0L132.0 200.7M198.9 279.2L200.7 278.1M158.6 252.4L155.8 253.0M170.2 262.1L163.4 256.9M159.1 242.4L153.7 236.7M209.5 276.6L206.7 278.3M159.4 261.6L154.0 257.0M179.7 143.8L174.1 142.3M166.0 135.8L167.4 141.2M125.9 181.7L125.1 178.8M162.9 154.1L164.3 162.3M247.6 116.7L253.4 118.0M195.1 106.0L196.5 107.3M127.7 193.8L129.3 200.5M150.3 222.9L146.3 215.8M192.6 277.9L189.2 278.2M206.2 132.8L205.0 127.5M145.8 249.3L148.5 253.5M169.5 155.4L176.1 155.9M153.9 246.8L158.6 252.4M133.6 213.8L130.5 211.5M212.0 124.0L217.8 121.5M140.8 233.6L141.8 239.3M182.2 273.1L184.0 270.7M166.8 122.4L166.2 126.1M127.2 166.5L127.1 161.3M159.8 135.8L166.0 135.8M154.7 229.7L149.3 229.4M226.5 110.9L229.0 113.9M144.4 137.7L144.2 142.5M238.0 124.9L233.4 126.4M190.1 107.4L183.2 108.7M134.6 230.0L132.4 227.4M167.5 148.5L174.1 142.3M147.8 128.4L144.6 130.1M139.1 136.4L141.9 132.1M123.6 174.5L123.2 182.7M163.5 266.1L167.1 269.6M222.1 115.6L230.4 117.5M250.5 123.9L255.6 124.1M131.1 187.3L128.6 187.5M183.7 113.7L189.9 113.1M158.6 252.4L163.4 256.9M231.0 122.0L238.0 124.9M132.9 181.7L131.5 174.8M229.0 270.4L223.2 272.5M192.3 105.7L188.0 106.8M178.4 119.1L172.4 122.5M148.9 240.4L153.7 241.8M212.4 104.8L220.6 105.8M219.3 109.3L226.5 110.9M215.8 275.7L209.5 276.6M125.5 192.1L124.9 196.1M187.6 275.9L189.5 274.0M151.9 127.0L153.5 123.3M195.1 106.0L201.1 105.0M132.4 148.7L130.6 149.9M240.2 112.9L247.6 116.7M177.8 108.9L185.8 106.8M185.7 109.3L178.9 110.9M132.4 227.4L134.5 232.4M147.0 168.3L153.3 168.0M171.0 162.2L176.1 155.9M285.4 153.5L282.8 148.3M124.3 189.9L123.5 186.5M155.5 175.0L161.7 174.3M182.9 156.0L176.1 155.9M264.2 124.5L259.3 122.0M126.8 176.4L128.1 182.1M237.6 120.4L244.2 120.1M178.6 127.3L171.8 126.4M140.8 233.6L145.4 240.0M223.2 272.5L215.8 275.7M219.3 126.0L226.3 128.2M126.3 202.2L124.7 200.3M169.7 112.8L173.4 110.7M153.4 208.6L149.8 201.0M182.2 273.1L178.7 273.8M202.6 276.3L200.7 278.1M226.3 128.2L233.4 126.4M183.2 119.5L190.6 120.2M173.4 110.7L181.0 108.3M132.1 146.1L128.6 153.0M166.9 115.3L162.9 116.0M159.3 168.6L166.4 168.6M183.7 113.7L187.4 111.1M156.6 119.7L159.8 116.9M161.3 147.7L167.5 148.5M255.3 117.2L257.4 119.1M160.5 265.0L164.4 268.3M230.4 117.5L231.0 122.0M250.5 123.9L250.2 128.1M129.0 176.0L130.4 169.6M199.0 137.5L207.3 139.6M161.2 122.4L163.7 118.9M154.5 131.1L154.9 134.8M159.1 242.4L158.2 247.9M193.4 111.1L196.5 113.8M172.6 116.4L177.3 116.5M125.5 192.1L126.6 197.7M198.9 279.2L195.7 279.3M136.6 220.7L136.8 214.5M196.5 107.3L201.9 105.7M147.7 208.7L142.5 208.7M201.1 105.0L192.3 105.7M247.6 116.7L249.4 120.1M163.4 256.9L163.8 253.1M177.8 108.9L173.4 110.7M192.1 128.8L197.5 125.6M135.4 156.3L139.5 148.8M271.9 130.9L268.5 127.6M201.9 105.7L208.7 105.8M208.7 105.8L210.5 107.7M130.5 211.5L133.4 219.6M163.4 256.9L159.9 257.2M166.8 122.4L172.3 118.8M124.2 176.3L125.7 172.4M279.7 144.6L275.3 140.1M154.7 229.7L153.7 236.7"/>
<path stroke="#410303" d="M276.4 153.9L272.8 150.7M216.3 265.7L208.0 269.4M248.0 234.9L244.4 239.2M202.5 267.1L193.5 267.7M161.7 174.3L166.4 168.6M283.3 200.7L286.6 192.3M243.1 260.2L236.4 265.7M228.0 266.0L220.1 270.3M282.5 203.6L281.1 206.6M262.2 197.1L265.1 201.8M240.3 232.9L240.9 226.3M184.2 164.3L190.9 166.4M269.6 153.9L267.7 148.0M183.0 200.2L176.7 200.4M256.0 229.4L260.4 227.5M233.7 244.6L235.1 238.4M246.8 133.9L251.8 137.3M201.7 150.6L209.0 153.3M161.0 229.9L159.8 236.3M265.6 142.5L263.2 145.9M170.9 242.7L163.8 242.3M285.1 159.5L286.3 167.1M187.2 187.7L192.2 191.2M166.0 236.8L161.0 229.9M193.8 185.4L192.2 191.2M215.4 149.3L223.6 151.9M180.2 228.8L182.8 221.3M181.6 255.4L189.6 254.8M254.5 245.5L255.7 241.8M248.0 234.9L248.2 239.8M192.9 241.9L201.3 247.3M195.4 264.0L193.5 267.7M250.8 132.3L251.8 137.3M275.1 210.8L271.2 213.6M173.9 230.3L180.2 228.8M286.6 192.3L287.0 188.6M281.4 194.7L283.8 187.3M209.0 153.3L215.4 149.3M251.4 246.9L255.7 241.8M186.5 205.8L189.6 196.8M158.0 215.8L156.0 223.4M184.2 164.3L182.9 156.0M247.3 248.8L246.6 252.8M230.8 154.9L230.2 148.2M184.8 243.3L186.6 235.4M263.1 217.8L258.3 220.6M256.9 245.5L258.7 242.3M277.9 203.6L276.5 199.6M255.7 241.8L259.3 239.9M239.9 259.4L235.5 260.7M262.2 197.1L265.3 189.5M176.2 222.5L182.8 221.3M176.2 222.5L169.4 222.9M171.7 215.5L166.7 207.8M187.6 176.4L193.9 178.1M176.9 250.0L177.7 243.3M190.0 220.1L192.0 211.7M189.6 196.8L194.1 204.2M244.4 239.2L243.2 244.8M283.3 200.7L281.6 203.5M270.3 208.9L265.2 212.1M186.6 235.4L195.1 234.6M197.9 218.2L205.5 223.4M258.3 220.6L261.2 214.3M259.7 242.2L261.8 239.4M237.1 255.8L230.0 261.1M251.5 251.5L253.4 248.5M267.8 205.6L270.4 198.2M192.0 211.7L200.3 209.7M264.5 225.9L268.4 223.5M248.2 239.8L243.2 244.8M243.3 148.4L244.8 155.0M187.6 176.4L186.2 170.3M265.2 212.1L263.1 208.5M169.5 200.7L163.1 201.5M223.6 151.9L230.2 148.2M182.9 156.0L189.8 159.2M176.7 200.4L172.3 194.5M211.9 259.5L213.8 253.7M239.0 239.4L233.7 244.6M262.5 177.2L262.6 168.5M256.0 156.1L255.0 149.0M224.6 241.4L228.7 243.7M163.8 242.3L159.8 236.3M258.7 242.3L259.3 239.9M252.0 230.6L248.0 234.9M215.2 142.2L222.3 144.9M237.2 146.0L235.3 137.8M248.5 230.5L248.8 225.4M269.6 144.3L265.6 142.5M277.9 203.6L274.4 206.6M195.1 234.6L201.8 240.1M278.9 171.0L278.1 162.1M159.7 208.6L156.4 201.3M239.9 259.4L238.4 263.1M176.3 181.7L175.4 175.5M241.7 136.0L240.5 129.8M263.5 235.6L265.9 233.4M238.4 245.8L233.2 250.6M238.0 151.5L238.1 159.2M170.9 242.7L176.9 250.0M245.0 162.9L244.8 155.0M199.0 253.6L207.8 251.1M276.5 199.6L279.6 191.4M176.3 181.7L170.6 181.5M193.9 178.1L192.8 172.5M248.1 254.8L251.5 251.5M208.7 146.9L215.2 142.2M252.6 235.1L256.0 229.4M262.6 168.5L266.7 165.4M189.6 196.8L192.2 191.2M192.9 241.9L195.1 234.6M286.3 184.6L284.8 178.7M187.8 227.8L196.6 226.5M268.2 193.0L270.5 186.9M162.1 222.7L156.0 223.4M204.3 261.9L205.6 256.8M192.8 172.5L198.2 168.8M198.2 168.8L204.6 171.6M260.8 140.6L256.8 140.9M164.4 181.7L161.7 174.3M266.7 165.4L271.3 169.7M281.4 194.7L276.5 199.6M255.9 225.0L258.3 220.6M204.1 231.7L212.6 226.9M274.4 206.6L272.8 202.4M186.2 170.3L181.5 175.0M237.1 255.8L235.5 260.7M248.5 230.5L244.8 228.6M263.1 208.5L265.1 201.8M238.4 263.1L234.5 264.1M247.7 144.4L249.9 152.6M251.6 226.9L255.9 225.0M244.8 155.0L249.9 152.6M275.4 195.0L273.4 191.0M230.0 261.1L225.0 260.9M188.7 152.5L194.9 147.6M192.0 211.7L194.1 204.2M260.1 231.6L260.4 227.5M176.3 181.7L181.5 175.0M241.7 136.0L247.4 139.6M265.2 212.1L261.2 214.3M252.9 143.3L255.0 149.0M185.2 193.2L181.4 187.5M209.3 244.0L216.8 245.9M288.4 168.3L288.0 171.9M235.5 260.7L228.0 266.0M217.2 156.0L224.3 158.9M195.4 264.0L189.0 260.3M165.9 195.1L161.5 187.0M189.8 159.2L188.7 152.5M243.3 148.4L241.6 141.5M197.9 218.2L200.3 209.7M288.5 184.5L287.0 188.6M210.3 236.6L217.1 239.4M180.5 207.2L186.5 205.8M239.0 239.4L238.4 245.8M270.2 227.4L273.0 223.3M194.9 147.6L201.7 150.6M209.8 159.9L217.2 156.0M169.7 248.8L175.1 254.5M255.0 149.0L259.4 146.8M267.8 205.6L263.1 208.5M278.1 186.5L279.2 178.1M166.7 207.8L159.7 208.6M282.5 203.6L285.2 196.5M158.0 215.8L153.4 208.6M222.3 144.9L229.5 141.7M184.8 243.3L191.8 248.6M264.1 221.7L266.8 215.7M201.3 247.3L209.3 244.0M161.5 187.0L155.2 187.7M238.4 245.8L238.3 250.6M185.2 193.2L183.0 200.2M283.8 187.3L282.1 183.0M161.0 229.9L154.7 229.7M233.2 250.6L227.0 249.7M187.8 227.8L190.0 220.1M180.2 228.8L187.8 227.8M198.2 168.8L196.5 162.2M252.6 235.1L248.2 239.8M216.3 265.7L210.1 264.1M248.0 234.9L243.9 235.2M164.4 181.7L168.2 174.5M178.2 215.9L176.2 222.5M274.4 206.6L270.3 208.9M275.1 210.8L274.4 206.6M233.7 244.6L233.2 250.6M243.1 260.2L238.4 263.1M238.3 250.6L232.1 256.1M228.0 266.0L222.2 266.1M228.7 243.7L235.1 238.4M278.1 213.5L280.1 209.8M226.1 255.4L218.1 260.3M229.5 141.7L237.2 146.0M251.4 246.9L246.6 252.8M195.1 234.6L196.6 226.5M286.3 167.1L283.8 162.0M278.1 162.1L274.5 157.6M183.0 200.2L178.7 192.7M263.5 235.6L263.8 233.2M158.3 181.8L161.7 174.3M196.5 162.2L203.5 164.8M234.5 264.1L226.1 269.5M199.0 253.6L201.3 247.3M276.5 199.6L272.8 202.4M260.8 203.8L263.1 208.5M170.9 242.7L166.0 236.8M230.3 236.4L235.9 231.5M182.9 156.0L177.0 162.7M217.1 239.4L224.8 233.8M235.5 260.7L234.5 264.1M224.3 158.9L230.8 154.9M286.3 184.6L283.8 187.3M181.6 255.4L189.0 260.3M270.4 198.2L268.2 193.0M274.9 165.7L270.7 162.0M176.9 250.0L184.0 249.5M279.2 178.1L275.7 173.7M252.9 143.3L251.8 137.3M173.9 230.3L178.9 236.6M204.1 231.7L205.5 223.4M274.5 157.6L272.8 150.7M286.6 192.3L288.5 184.5M283.3 200.7L284.1 196.8M204.6 171.6L210.8 167.1M251.4 246.9L254.5 245.5M248.8 225.4L253.5 221.3M177.0 162.7L179.7 169.0M230.8 154.9L238.1 159.2M275.4 195.0L270.4 198.2M177.7 243.3L184.8 243.3M240.3 232.9L244.8 228.6M230.0 261.1L228.0 266.0M251.5 251.5L256.9 245.5M183.0 200.2L180.5 207.2M281.9 166.3L280.5 158.1M281.6 203.5L281.4 199.9M246.6 252.8L242.4 254.5M170.9 242.7L169.7 248.8M245.0 162.9L238.1 159.2M176.2 222.5L171.7 215.5M213.9 270.4L208.0 269.4M271.3 178.5L271.3 169.7M274.9 219.8L278.1 213.5M161.7 174.3L168.2 174.5M186.6 235.4L192.9 241.9M259.7 223.5L263.1 217.8M173.9 230.3L169.4 222.9M159.8 194.0L152.5 194.1M243.2 244.8L238.3 250.6M275.9 213.4L272.2 220.4M201.3 247.3L201.8 240.1M182.8 221.3L190.0 220.1M269.6 144.3L272.8 150.7M196.5 162.2L195.6 154.9M264.3 236.0L265.9 233.4M259.3 239.9L263.5 235.6M234.5 264.1L231.8 267.8M255.7 241.8L260.0 236.0M248.2 239.8L244.4 239.2M172.5 236.0L177.7 243.3M176.2 222.5L173.9 230.3M166.0 236.8L163.8 242.3M283.8 187.3L279.6 191.4M271.2 213.6L270.3 208.9M235.9 231.5L240.3 232.9M233.2 250.6L232.1 256.1M262.6 168.5L258.5 164.0M270.7 162.0L269.6 153.9M189.6 196.8L196.1 196.8M256.2 238.1L260.1 231.6M210.3 236.6L212.6 226.9M180.5 207.2L176.7 200.4M204.6 171.6L203.5 164.8M270.2 227.4L271.6 223.7M228.0 266.0L226.1 269.5M253.5 221.3L251.0 218.5M258.5 164.0L250.6 159.3M262.5 177.2L266.7 173.4M169.7 248.8L163.8 242.3M278.1 186.5L273.4 191.0M273.0 223.3L274.9 219.8M226.1 255.4L225.0 260.9M184.0 249.5L189.6 254.8M269.6 144.3L267.7 148.0M201.7 150.6L200.4 143.4M243.9 235.2L239.0 239.4M238.4 245.8L233.7 244.6M183.2 182.3L181.5 175.0M199.0 253.6L205.6 256.8M284.1 196.8L287.0 188.6M183.2 182.3L176.3 181.7M260.4 227.5L264.5 225.9M281.1 206.6L278.1 213.5M203.5 164.8L209.8 159.9M208.7 146.9L215.4 149.3M252.6 235.1L256.5 233.7M270.4 198.2L265.1 201.8M178.9 236.6L186.6 235.4M286.3 184.6L286.8 175.2M169.4 222.9L162.1 222.7M283.8 162.0L281.9 166.3M187.8 227.8L195.1 234.6M162.1 222.7L158.0 215.8M216.3 265.7L213.9 270.4M192.8 172.5L199.4 174.7M182.9 156.0L188.7 152.5M180.5 207.2L178.2 215.9M274.7 147.9L269.6 144.3M189.6 254.8L199.0 253.6M278.6 207.5L277.9 203.6M274.4 206.6L276.5 199.6M186.2 170.3L179.7 169.0M246.2 257.6L251.5 251.5M287.0 188.6L286.3 184.6M252.0 230.6L252.6 235.1M282.3 155.0L278.8 151.6M286.3 167.1L284.7 171.0M195.1 234.6L204.1 231.7M183.2 182.3L181.4 187.5M169.5 200.7L166.7 207.8M276.5 199.6L275.4 195.0M243.2 249.6L237.1 255.8M235.5 260.7L230.0 261.1M262.6 168.5L262.0 161.0M265.3 189.5L268.2 193.0M175.3 187.4L170.6 181.5M279.2 178.1L275.1 182.6M176.7 200.4L174.2 207.1M256.4 215.9L261.2 214.3M238.4 263.1L231.8 267.8M209.8 159.9L219.2 162.6M258.5 164.0L256.0 156.1M275.9 213.4L275.5 216.9M166.7 207.8L163.1 201.5M268.2 226.8L271.6 223.7M219.6 255.4L218.1 260.3M186.2 170.3L190.9 166.4M222.3 144.9L230.2 148.2M252.0 230.6L255.9 225.0M201.3 247.3L207.8 251.1M230.2 148.2L237.2 146.0M205.6 256.8L213.8 253.7M288.9 181.1L288.8 176.3M283.8 187.3L284.8 178.7M167.0 229.9L161.0 229.9M263.8 233.2L268.2 226.8M199.0 189.3L192.2 191.2M281.1 206.6L280.1 209.8M217.2 156.0L223.6 151.9M257.1 172.6L262.6 168.5M249.9 152.6L255.0 149.0M162.1 222.7L161.0 229.9M273.4 191.0L268.2 193.0M286.8 175.2L284.7 171.0M274.9 165.7L271.3 169.7M274.9 219.8L275.5 216.9M165.9 195.1L159.8 194.0M252.6 235.1L248.0 234.9M264.6 151.6L267.7 148.0M266.7 165.4L270.7 162.0M275.9 213.4L275.1 210.8M238.3 250.6L233.2 250.6M169.7 248.8L176.9 250.0M262.0 161.0L256.0 156.1M238.1 159.2L244.8 155.0M221.7 248.4L224.6 241.4M187.3 263.8L180.9 260.0M189.1 181.4L193.9 178.1M210.8 167.1L209.8 159.9M226.1 255.4L219.6 255.4M265.6 142.5L260.8 140.6M281.9 166.3L278.9 171.0M190.9 166.4L198.2 168.8M251.6 226.9L253.5 221.3M264.1 221.7L264.5 225.9M235.3 137.8L241.6 141.5M242.4 254.5L235.5 260.7M265.9 157.9L269.6 153.9M167.0 229.9L166.0 236.8M193.9 178.1L198.5 181.8M238.0 151.5L244.8 155.0M205.5 223.4L212.6 226.9M230.3 236.4L235.1 238.4M208.7 146.9L207.3 139.6M233.2 250.6L226.1 255.4M235.1 238.4L235.9 231.5M284.7 171.0L283.8 162.0M252.6 235.1L252.4 239.5M270.4 198.2L273.4 191.0M274.9 165.7L274.5 157.6M243.3 148.4L247.7 144.4M275.9 213.4L271.9 217.2M274.5 157.6L270.7 162.0M189.1 181.4L183.2 182.3M268.4 223.5L272.2 220.4M262.0 161.0L265.9 157.9M166.7 207.8L163.8 215.5M265.1 201.8L268.2 193.0M177.7 243.3L184.0 249.5M170.6 181.5L164.4 181.7M251.4 246.9L250.0 251.2M271.6 223.7L275.5 216.9M215.2 142.2L214.2 135.9M229.5 141.7L235.3 137.8M264.1 221.7L259.7 223.5M281.1 206.6L281.6 203.5M281.6 203.5L284.1 196.8M250.0 251.2L246.6 252.8M196.5 162.2L202.7 157.9M251.5 169.0L258.5 164.0M176.1 155.9L177.0 162.7M165.9 195.1L163.1 201.5M287.1 163.5L286.3 167.1M235.1 238.4L240.3 232.9M163.8 215.5L159.7 208.6M265.3 189.5L270.5 186.9M274.9 219.8L276.6 216.9M208.0 269.4L202.5 267.1M252.9 143.3L256.8 140.9M266.7 173.4L271.3 169.7M275.1 182.6L275.7 173.7M274.5 157.6L269.6 153.9M159.8 194.0L155.2 187.7M243.1 260.2L240.9 262.5M209.8 159.9L209.0 153.3M243.2 244.8L238.4 245.8M248.8 225.4L251.0 218.5M221.7 248.4L228.7 243.7M279.6 191.4L282.1 183.0M275.5 216.9L278.1 213.5M219.6 255.4L211.9 259.5M161.5 187.0L159.8 194.0M182.8 221.3L187.8 227.8M264.1 221.7L260.4 227.5M281.9 166.3L278.1 162.1M163.1 201.5L156.4 201.3M253.4 248.5L256.9 245.5M252.4 239.5L248.2 239.8M246.6 252.8L239.9 259.4M271.9 217.2L271.2 213.6M271.2 213.6L274.4 206.6M217.2 156.0L215.4 149.3M200.4 143.4L208.7 146.9M248.8 225.4L244.8 228.6M184.4 213.2L190.0 220.1M266.7 182.3L271.3 178.5M273.4 191.0L270.5 186.9M256.2 238.1L260.0 236.0M225.0 260.9L218.1 260.3M204.3 261.9L202.5 267.1M266.8 215.7L270.3 208.9M259.7 223.5L258.3 220.6M173.9 230.3L167.0 229.9M166.4 168.6L168.2 174.5M177.7 243.3L178.9 236.6M170.6 181.5L168.6 187.2M222.3 144.9L221.6 138.5M232.1 256.1L225.0 260.9M281.6 203.5L278.6 207.5M271.3 169.7L270.7 162.0M246.6 252.8L245.1 256.8M230.2 148.2L229.5 141.7M259.3 239.9L263.8 233.2M241.6 141.5L247.4 139.6M172.5 236.0L178.9 236.6M187.2 187.7L181.4 187.5M203.5 164.8L210.8 167.1M175.4 175.5L179.7 169.0M181.6 255.4L184.0 249.5M178.9 236.6L184.8 243.3M169.4 222.9L163.8 215.5M270.5 186.9L271.3 178.5M168.6 187.2L161.5 187.0M156.4 201.3L152.5 194.1M247.8 244.3L243.2 249.6M228.2 135.3L233.8 132.5M259.7 223.5L255.9 225.0M286.6 192.3L284.1 196.8M192.2 191.2L196.1 196.8M189.6 254.8L197.1 259.2M274.7 147.9L272.8 150.7M278.6 207.5L281.4 199.9M243.2 244.8L243.2 249.6M180.5 207.2L174.2 207.1M202.7 157.9L209.8 159.9M195.6 154.9L201.7 150.6M287.0 188.6L288.1 180.5M282.1 183.0L279.2 178.1M210.8 167.1L219.2 162.6M182.8 221.3L184.4 213.2M163.1 201.5L159.7 208.6M184.0 249.5L191.8 248.6M282.3 155.0L280.5 158.1M255.7 241.8L256.2 238.1M268.6 218.7L266.8 215.7M248.2 239.8L247.8 244.3M271.2 213.6L266.8 215.7M284.1 196.8L284.5 191.8M243.2 249.6L238.3 250.6M224.3 158.9L223.6 151.9M214.2 135.9L221.6 138.5M184.4 213.2L186.5 205.8M271.9 217.2L272.2 220.4M287.1 163.5L288.0 171.9M156.0 223.4L154.7 229.7M256.2 238.1L256.5 233.7M247.8 244.3L247.3 248.8M218.1 260.3L210.1 264.1M204.3 261.9L195.4 264.0M266.8 215.7L263.1 217.8M186.6 235.4L187.8 227.8M159.8 194.0L156.4 201.3M245.1 256.8L238.4 263.1M172.4 169.0L177.0 162.7M230.8 154.9L232.3 162.4M258.5 164.0L262.0 161.0M184.2 164.3L179.7 169.0M174.2 207.1L169.5 200.7M187.3 263.8L189.0 260.3M229.5 141.7L228.2 135.3M186.2 170.3L192.8 172.5M259.3 239.9L260.0 236.0M243.9 235.2L244.4 239.2M256.5 233.7L260.1 231.6M235.3 137.8L233.8 132.5M230.2 148.2L238.0 151.5M261.1 136.7L260.8 140.6M232.3 162.4L238.1 159.2M196.6 226.5L204.1 231.7M172.5 236.0L166.0 236.8M167.0 229.9L162.1 222.7M263.8 233.2L267.1 230.4M239.0 239.4L240.3 232.9M178.9 236.6L180.2 228.8M272.8 202.4L275.4 195.0M180.9 260.0L189.0 260.3M286.8 175.2L286.3 167.1M175.3 187.4L168.6 187.2M192.8 172.5L190.9 166.4M210.1 264.1L204.3 261.9M278.6 207.5L275.1 210.8M264.6 151.6L269.6 153.9M190.0 220.1L197.9 218.2M245.1 256.8L243.1 260.2M275.9 213.4L278.6 207.5M288.0 188.7L288.5 184.5M260.0 236.0L264.6 229.0M244.4 239.2L239.0 239.4M172.4 169.0L179.7 169.0M178.2 215.9L184.4 213.2M270.3 208.9L267.8 205.6M260.8 140.6L256.1 136.0M288.8 176.3L288.0 171.9M186.2 170.3L184.2 164.3M278.5 210.7L278.1 213.5M268.2 226.8L272.2 220.4M252.4 239.5L256.5 233.7M266.7 165.4L265.9 157.9M184.0 249.5L184.8 243.3M164.4 181.7L161.5 187.0M247.3 248.8L242.4 254.5M242.4 254.5L237.1 255.8M219.6 255.4L221.7 248.4M194.1 204.2L196.1 196.8M284.1 196.8L281.4 199.9M191.8 248.6L199.0 253.6M178.7 192.7L175.3 187.4M243.2 249.6L242.4 254.5M257.1 172.6L258.5 164.0M266.7 182.3L270.5 186.9M284.5 191.8L286.3 184.6M156.4 201.3L153.4 208.6M238.0 151.5L237.2 146.0M189.6 254.8L191.8 248.6M256.4 215.9L258.3 220.6M211.9 259.5L205.6 256.8M238.4 263.1L236.4 265.7M261.8 239.4L264.3 236.0M189.1 181.4L187.6 176.4M287.0 188.6L284.5 191.8M281.4 199.9L281.4 194.7M271.6 223.7L274.9 219.8M264.6 151.6L263.2 145.9M256.5 233.7L256.0 229.4M251.6 226.9L248.8 225.4M281.1 206.6L283.3 200.7M258.7 242.3L263.5 235.6M221.6 138.5L228.2 135.3M247.7 144.4L247.4 139.6M190.9 166.4L196.5 162.2M235.3 137.8L241.7 136.0M193.9 178.1L193.8 185.4M201.8 240.1L210.3 236.6M213.8 253.7L221.7 248.4M265.9 233.4L270.2 227.4M271.9 217.2L268.4 223.5M250.6 159.3L256.0 156.1M180.9 260.0L181.6 255.4M278.8 151.6L274.7 147.9M284.7 171.0L281.9 166.3M255.9 225.0L256.0 229.4M189.1 181.4L187.2 187.7M288.0 188.7L286.6 192.3M260.0 236.0L260.1 231.6M266.7 182.3L266.7 173.4M262.0 161.0L260.8 154.3M207.8 251.1L213.8 253.7M288.5 184.5L288.8 176.3M264.6 229.0L268.2 226.8M226.1 269.5L220.1 270.3M250.0 251.2L253.4 248.5M251.6 226.9L248.5 230.5M256.4 215.9L258.1 210.3M282.3 155.0L283.8 162.0M284.8 178.7L284.7 171.0M172.3 194.5L165.9 195.1M190.9 166.4L189.8 159.2M163.1 201.5L159.8 194.0M242.4 254.5L239.9 259.4M250.0 251.2L245.1 256.8M241.6 141.5L241.7 136.0M247.7 144.4L252.9 143.3M196.6 226.5L197.9 218.2M288.9 181.1L288.5 184.5M251.5 169.0L250.6 159.3M227.0 249.7L228.7 243.7M271.9 217.2L275.1 210.8M197.1 259.2L205.6 256.8M263.8 233.2L264.6 229.0M212.6 226.9L218.1 231.6M260.1 231.6L264.5 225.9M260.8 154.3L264.6 151.6M272.8 202.4L267.8 205.6M260.8 140.6L263.2 145.9M185.2 193.2L192.2 191.2M288.1 180.5L286.8 175.2M273.4 191.0L275.1 182.6M163.8 215.5L158.0 215.8M193.9 178.1L199.4 174.7M238.0 151.5L243.3 148.4M195.4 264.0L197.1 259.2M170.6 181.5L175.4 175.5M274.7 147.9L276.4 153.9M275.1 182.6L271.3 178.5M238.3 250.6L237.1 255.8M281.4 199.9L277.9 203.6M288.8 176.3L288.1 180.5M268.2 226.8L268.4 223.5M279.6 191.4L278.1 186.5M232.1 256.1L226.1 255.4M199.4 174.7L198.5 181.8M256.8 140.9L259.4 146.8M253.4 248.5L258.7 242.3M252.4 239.5L247.8 244.3M241.6 141.5L247.7 144.4M191.8 248.6L192.9 241.9M205.6 256.8L207.8 251.1M183.0 200.2L189.6 196.8M187.2 187.7L183.2 182.3M200.4 143.4L207.3 139.6M284.5 191.8L281.4 194.7M286.8 175.2L284.8 178.7M184.4 213.2L192.0 211.7M285.1 159.5L283.8 162.0M168.6 187.2L164.4 181.7M272.2 220.4L275.5 216.9M251.5 243.8L247.3 248.8M247.8 244.3L243.2 244.8M225.0 260.9L216.3 265.7M228.2 135.3L235.3 137.8M173.9 230.3L172.5 236.0M278.5 210.7L281.6 203.5M280.5 158.1L276.4 153.9M261.8 239.4L263.5 235.6M266.8 215.7L265.2 212.1M247.4 139.6L246.8 133.9M189.1 181.4L193.8 185.4M189.8 159.2L195.6 154.9M195.6 154.9L202.7 157.9M166.4 168.6L172.4 169.0M216.8 245.9L224.6 241.4M278.5 210.7L275.5 216.9M282.1 183.0L282.3 174.3M267.1 230.4L271.6 223.7M222.2 266.1L213.9 270.4M175.1 254.5L181.6 255.4M282.3 174.3L278.9 171.0M268.6 218.7L271.2 213.6M164.4 181.7L158.3 181.8M251.8 137.3L256.8 140.9M187.2 187.7L185.2 193.2M201.8 240.1L204.1 231.7M194.1 204.2L200.3 209.7M285.2 196.5L286.6 192.3M265.9 233.4L267.1 230.4M282.5 203.6L280.1 209.8M183.2 182.3L187.6 176.4M239.0 239.4L235.1 238.4M243.3 148.4L249.9 152.6M175.4 175.5L181.5 175.0M261.2 214.3L263.1 208.5M218.1 260.3L211.9 259.5M189.0 260.3L189.6 254.8M272.8 150.7L267.7 148.0M259.7 223.5L260.4 227.5M248.1 254.8L243.1 260.2M211.9 259.5L204.3 261.9M247.4 139.6L251.8 137.3M245.1 256.8L239.9 259.4M202.7 157.9L209.0 153.3M169.7 248.8L168.9 253.2M178.2 215.9L174.2 207.1M224.8 233.8L230.3 236.4M264.6 229.0L264.5 225.9M271.6 223.7L272.2 220.4M227.0 249.7L219.6 255.4M266.7 165.4L262.0 161.0M275.7 173.7L274.9 165.7M268.6 218.7L264.5 225.9M237.2 146.0L241.6 141.5M261.1 136.7L265.6 142.5M197.1 259.2L199.0 253.6M213.8 253.7L216.8 245.9M199.4 174.7L198.2 168.8M172.5 236.0L167.0 229.9M256.1 136.0L256.8 140.9M251.5 243.8L255.7 241.8M193.8 185.4L198.5 181.8M252.9 143.3L259.4 146.8M169.4 222.9L167.0 229.9M288.1 180.5L286.3 184.6M278.8 151.6L280.5 158.1M181.4 187.5L175.3 187.4M284.7 171.0L282.3 174.3M207.3 139.6L215.2 142.2M190.0 220.1L196.6 226.5M253.5 221.3L258.3 220.6M254.5 245.5L259.3 239.9M195.6 154.9L194.9 147.6M260.0 236.0L263.8 233.2M202.5 267.1L195.4 264.0M266.7 182.3L262.5 177.2M172.4 169.0L175.4 175.5M207.8 251.1L209.3 244.0M178.2 215.9L182.8 221.3M279.6 191.4L275.4 195.0M270.3 208.9L272.8 202.4M174.2 207.1L166.7 207.8M232.1 256.1L230.0 261.1M266.7 173.4L262.6 168.5M252.4 239.5L256.2 238.1M284.8 178.7L282.1 183.0M186.5 205.8L194.1 204.2M265.6 142.5L267.7 148.0M256.5 233.7L260.4 227.5M247.3 248.8L243.2 249.6M172.5 236.0L170.9 242.7M265.9 157.9L270.7 162.0M227.0 249.7L221.7 248.4M196.6 226.5L205.5 223.4M263.1 217.8L261.2 214.3M268.7 229.7L270.2 227.4M203.5 164.8L202.7 157.9M181.4 187.5L178.7 192.7M250.6 159.3L244.8 155.0M171.0 162.2L177.0 162.7M272.8 202.4L270.4 198.2M225.0 260.9L222.2 266.1M210.1 264.1L202.5 267.1M265.9 157.9L260.8 154.3M266.1 138.2L269.6 144.3M253.5 221.3L255.9 225.0M266.7 173.4L271.3 178.5M275.1 182.6L270.5 186.9M202.7 157.9L201.7 150.6M244.4 239.2L238.4 245.8M174.2 207.1L171.7 215.5M265.3 189.5L266.7 182.3M267.1 230.4L268.2 226.8M281.4 199.9L284.5 191.8M222.2 266.1L220.1 270.3M209.0 153.3L217.2 156.0M264.6 151.6L259.4 146.8M258.7 242.3L261.8 239.4M184.2 164.3L189.8 159.2M221.6 138.5L229.5 141.7M201.8 240.1L209.3 244.0M277.9 203.6L281.4 194.7M191.8 248.6L201.3 247.3M178.7 192.7L172.3 194.5M265.9 233.4L268.7 229.7M201.7 150.6L208.7 146.9M176.2 222.5L180.2 228.8M175.3 187.4L172.3 194.5M288.0 171.9L286.8 175.2M166.0 236.8L159.8 236.3M284.5 191.8L283.8 187.3M278.8 151.6L276.4 153.9M215.4 149.3L222.3 144.9M265.9 157.9L264.6 151.6M266.1 138.2L265.6 142.5M170.6 181.5L168.2 174.5M192.9 241.9L201.8 240.1M261.8 239.4L265.9 233.4M216.8 245.9L217.1 239.4M282.1 183.0L278.1 186.5M281.4 194.7L279.6 191.4M227.0 249.7L226.1 255.4M237.1 255.8L232.1 256.1M256.0 156.1L249.9 152.6M252.0 230.6L256.0 229.4M253.5 221.3L256.4 215.9M266.7 173.4L266.7 165.4M224.6 241.4L224.8 233.8M282.3 174.3L279.2 178.1M172.3 194.5L168.6 187.2M178.7 192.7L176.7 200.4M278.9 171.0L275.7 173.7M192.0 211.7L197.9 218.2M258.1 210.3L263.1 208.5M187.6 176.4L181.5 175.0M260.1 231.6L264.6 229.0M239.9 259.4L234.5 264.1M231.8 267.8L226.1 269.5M260.8 154.3L255.0 149.0M209.3 244.0L210.3 236.6M250.6 159.3L249.9 152.6M265.2 212.1L267.8 205.6M169.5 200.7L165.9 195.1M185.2 193.2L189.6 196.8M288.1 180.5L288.0 171.9M171.7 215.5L163.8 215.5M218.1 260.3L216.3 265.7M187.6 176.4L192.8 172.5M223.6 151.9L230.8 154.9M263.2 145.9L267.7 148.0M280.5 158.1L278.1 162.1M189.0 260.3L197.1 259.2M211.9 259.5L210.1 264.1M195.4 264.0L187.3 263.8M197.9 218.2L207.2 213.8M207.8 251.1L216.8 245.9M288.5 184.5L288.1 180.5M251.6 226.9L252.0 230.6M264.6 229.0L268.4 223.5M219.2 162.6L224.3 158.9M250.0 251.2L254.5 245.5M220.4 132.4L228.2 135.3M256.0 156.1L260.8 154.3M281.1 206.6L278.5 210.7M267.8 205.6L265.1 201.8M250.0 251.2L248.1 254.8M284.8 178.7L282.3 174.3M252.0 230.6L248.5 230.5M268.6 218.7L268.4 223.5M183.0 200.2L186.5 205.8M245.0 162.9L250.6 159.3M171.7 215.5L169.4 222.9M260.8 154.3L259.4 146.8M251.5 243.8L247.8 244.3M259.4 146.8L263.2 145.9M189.8 159.2L196.5 162.2M233.8 132.5L241.7 136.0M204.1 231.7L210.3 236.6M216.8 245.9L221.7 248.4M176.7 200.4L169.5 200.7M209.0 153.3L208.7 146.9M267.1 230.4L270.2 227.4M276.6 216.9L278.1 213.5M233.7 244.6L227.0 249.7M222.2 266.1L216.3 265.7M168.2 174.5L172.4 169.0M172.3 194.5L169.5 200.7M256.8 140.9L263.2 145.9M224.6 241.4L230.3 236.4M275.4 195.0L278.1 186.5M275.7 173.7L271.3 178.5M262.2 197.1L268.2 193.0M175.1 254.5L180.9 260.0M282.3 174.3L281.9 166.3M252.4 239.5L251.5 243.8M188.7 152.5L195.6 154.9M215.2 142.2L221.6 138.5M248.5 230.5L243.9 235.2M230.8 154.9L238.0 151.5M219.6 255.4L213.8 253.7M271.9 217.2L268.6 218.7M258.1 210.3L261.2 214.3M278.9 171.0L274.9 165.7M159.7 208.6L153.4 208.6M263.5 235.6L267.1 230.4M199.4 174.7L204.6 171.6M170.9 242.7L177.7 243.3M217.1 239.4L218.1 231.6M163.8 215.5L162.1 222.7M260.8 203.8L265.1 201.8M251.5 243.8L251.4 246.9M288.0 171.9L286.3 167.1M215.4 149.3L215.2 142.2M210.1 264.1L208.0 269.4M248.1 254.8L253.4 248.5M272.8 150.7L269.6 153.9M278.5 210.7L278.6 207.5M202.5 267.1L198.9 271.2M248.1 254.8L245.1 256.8M198.2 168.8L203.5 164.8M247.4 139.6L252.9 143.3M243.9 235.2L240.3 232.9M180.5 207.2L184.4 213.2M184.2 164.3L177.0 162.7M168.2 174.5L175.4 175.5M228.7 243.7L230.3 236.4M253.4 248.5L254.5 245.5M248.5 230.5L248.0 234.9M221.6 138.5L220.4 132.4M246.2 257.6L243.1 260.2M230.0 261.1L222.2 266.1M237.2 146.0L243.3 148.4M278.1 162.1L274.9 165.7M161.5 187.0L158.3 181.8M233.7 244.6L228.7 243.7M241.7 136.0L246.8 133.9M256.1 136.0L251.8 137.3M176.3 181.7L175.3 187.4M185.2 193.2L178.7 192.7M209.3 244.0L217.1 239.4M181.4 187.5L176.3 181.7M161.0 229.9L156.0 223.4M179.7 169.0L181.5 175.0M278.5 210.7L275.9 213.4M180.2 228.8L186.6 235.4M283.8 162.0L280.5 158.1M248.1 254.8L246.2 257.6M276.4 153.9L274.5 157.6M254.5 245.5L258.7 242.3M243.9 235.2L244.8 228.6M275.1 210.8L277.9 203.6M210.3 236.6L218.1 231.6M178.2 215.9L171.7 215.5M219.2 162.6L217.2 156.0M270.2 227.4L274.9 219.8M194.9 147.6L200.4 143.4M247.7 144.4L255.0 149.0M175.1 254.5L176.9 250.0M268.6 218.7L264.1 221.7M278.1 186.5L275.1 182.6M186.5 205.8L192.0 211.7M282.5 203.6L283.3 200.7M275.7 173.7L271.3 169.7M158.0 215.8L151.3 215.9M251.4 246.9L247.3 248.8M159.7 208.6L158.0 215.8M285.2 196.5L283.3 200.7M184.8 243.3L192.9 241.9M264.1 221.7L263.1 217.8M278.1 162.1L276.4 153.9M263.1 217.8L265.2 212.1M256.9 245.5L261.8 239.4M187.2 187.7L193.8 185.4M234.5 264.1L228.0 266.0M251.5 243.8L256.2 238.1M171.0 162.2L172.4 169.0M168.6 187.2L165.9 195.1M217.1 239.4L224.6 241.4M223.6 151.9L222.3 144.9M220.1 270.3L213.9 270.4M204.3 261.9L197.1 259.2M259.7 223.5L256.0 229.4M176.9 250.0L181.6 255.4M279.2 178.1L278.9 171.0"/>
<path stroke="#500606" d="M237.9 183.5L245.4 179.3M227.0 209.8L227.0 201.9M229.4 188.2L230.7 179.0M215.6 202.3L209.5 206.1M221.2 205.3L221.2 199.0M227.0 201.9L234.1 198.9M238.8 175.7L238.2 165.9M261.1 186.4L266.7 182.3M224.3 158.9L224.2 166.5M248.2 192.0L255.7 188.7M236.5 216.8L237.4 210.0M246.2 170.5L251.5 169.0M225.6 225.9L232.2 221.3M204.5 195.1L204.5 186.2M252.9 197.5L248.2 192.0M210.0 190.3L216.3 186.9M250.3 184.6L250.7 176.6M229.4 188.2L224.0 183.2M235.9 231.5L240.9 226.3M237.9 183.5L230.7 179.0M245.8 222.7L246.9 216.5M257.1 180.8L262.5 177.2M221.2 199.0L228.2 195.0M252.8 213.9L254.6 207.7M251.2 204.2L257.0 200.4M238.8 175.7L231.7 170.4M241.6 219.5L236.9 223.5M199.0 189.3L198.5 181.8M214.3 218.5L219.6 222.8M199.0 189.3L196.1 196.8M239.4 203.5L241.5 195.9M232.3 213.6L226.1 217.1M238.2 165.9L245.0 162.9M248.2 192.0L243.5 187.9M241.6 219.5L240.9 226.3M250.3 184.6L245.4 179.3M261.1 186.4L257.1 180.8M216.3 186.9L217.7 178.9M211.2 174.3L218.1 170.0M246.2 170.5L238.2 165.9M241.6 219.5L236.5 216.8M246.2 200.1L252.9 197.5M232.3 213.6L232.2 221.3M214.6 210.9L221.2 214.9M234.1 198.9L236.1 190.9M229.4 188.2L237.9 183.5M221.2 205.3L227.0 201.9M205.5 223.4L214.3 218.5M200.3 209.7L202.4 202.1M204.5 195.1L202.4 202.1M257.1 180.8L250.7 176.6M227.0 209.8L221.2 205.3M262.5 177.2L257.1 172.6M254.6 207.7L260.8 203.8M199.4 174.7L205.1 178.8M221.2 205.3L215.6 202.3M236.5 216.8L242.4 212.8M214.3 218.5L214.6 210.9M225.6 225.9L231.3 227.9M204.5 195.1L210.0 190.3M260.8 203.8L262.2 197.1M238.2 165.9L232.3 162.4M230.7 179.0L231.7 170.4M261.1 186.4L262.5 177.2M248.2 192.0L250.3 184.6M236.5 216.8L232.3 213.6M204.5 195.1L199.0 189.3M204.5 195.1L196.1 196.8M245.8 222.7L251.0 218.5M209.7 199.2L209.5 206.1M215.6 202.3L221.2 199.0M231.3 227.9L236.9 223.5M252.8 213.9L258.1 210.3M217.7 178.9L224.7 173.6M224.2 166.5L232.3 162.4M205.5 223.4L207.2 213.8M199.0 189.3L204.5 186.2M245.8 222.7L244.8 228.6M237.4 210.0L239.4 203.5M245.8 222.7L241.6 219.5M210.8 167.1L211.2 174.3M224.7 173.6L224.2 166.5M257.1 180.8L257.1 172.6M199.0 189.3L193.8 185.4M237.4 210.0L232.7 206.5M221.2 199.0L215.3 194.0M246.9 216.5L249.1 209.9M238.2 165.9L238.1 159.2M252.8 213.9L249.1 209.9M216.3 186.9L224.0 183.2M196.1 196.8L202.4 202.1M212.6 226.9L214.3 218.5M230.3 236.4L231.3 227.9M239.4 203.5L234.1 198.9M249.1 209.9L254.6 207.7M236.5 216.8L236.9 223.5M232.7 206.5L234.1 198.9M234.1 198.9L241.5 195.9M225.6 225.9L226.1 217.1M227.0 209.8L226.1 217.1M246.2 200.1L248.2 192.0M207.2 213.8L214.3 218.5M216.3 186.9L211.2 181.6M241.5 195.9L243.5 187.9M219.6 222.8L221.2 214.9M258.1 210.3L254.6 207.7M244.2 207.3L251.2 204.2M218.1 231.6L224.8 233.8M211.2 181.6L217.7 178.9M230.7 179.0L238.8 175.7M231.3 227.9L232.2 221.3M234.1 198.9L228.2 195.0M254.6 207.7L257.0 200.4M224.0 183.2L224.7 173.6M212.6 226.9L219.6 222.8M235.9 231.5L236.9 223.5M246.2 200.1L241.5 195.9M231.3 227.9L235.9 231.5M241.5 195.9L236.1 190.9M251.0 218.5L256.4 215.9M243.5 187.9L250.3 184.6M245.8 222.7L240.9 226.3M219.6 222.8L225.6 225.9M244.2 207.3L239.4 203.5M232.3 213.6L232.7 206.5M237.4 210.0L244.2 207.3M236.1 190.9L237.9 183.5M224.7 173.6L231.7 170.4M245.4 179.3L246.2 170.5M215.6 202.3L215.3 194.0M254.6 207.7L251.2 204.2M217.7 178.9L218.1 170.0M224.0 183.2L217.7 178.9M257.0 200.4L262.2 197.1M194.1 204.2L202.4 202.1M227.0 209.8L221.2 214.9M260.8 203.8L257.0 200.4M230.7 179.0L224.7 173.6M250.7 176.6L257.1 172.6M236.5 216.8L232.2 221.3M246.9 216.5L252.8 213.9M259.3 192.8L261.1 186.4M215.3 194.0L221.4 190.7M262.2 197.1L259.3 192.8M255.7 188.7L257.1 180.8M198.5 181.8L205.1 178.8M209.7 199.2L202.4 202.1M202.4 202.1L209.5 206.1M217.7 178.9L211.2 174.3M232.7 206.5L239.4 203.5M243.5 187.9L237.9 183.5M218.1 170.0L224.2 166.5M209.7 199.2L210.0 190.3M224.7 173.6L218.1 170.0M249.1 209.9L251.2 204.2M219.2 162.6L224.2 166.5M245.4 179.3L238.8 175.7M241.5 195.9L248.2 192.0M257.0 200.4L252.9 197.5M242.4 212.8L249.1 209.9M207.2 213.8L214.6 210.9M221.2 205.3L214.6 210.9M259.3 192.8L255.7 188.7M255.7 188.7L250.3 184.6M228.2 195.0L229.4 188.2M224.0 183.2L230.7 179.0M231.7 170.4L232.3 162.4M244.2 207.3L246.2 200.1M218.1 231.6L225.6 225.9M211.2 181.6L211.2 174.3M248.8 225.4L245.8 222.7M250.7 176.6L246.2 170.5M232.3 213.6L237.4 210.0M204.5 186.2L211.2 181.6M226.1 217.1L232.2 221.3M236.1 190.9L243.5 187.9M200.3 209.7L207.2 213.8M265.3 189.5L261.1 186.4M245.4 179.3L250.7 176.6M251.0 218.5L252.8 213.9M221.4 190.7L224.0 183.2M243.5 187.9L245.4 179.3M219.6 222.8L226.1 217.1M232.3 213.6L227.0 209.8M257.1 172.6L251.5 169.0M236.9 223.5L240.9 226.3M207.2 213.8L209.5 206.1M221.2 205.3L221.2 214.9M215.6 202.3L209.7 199.2M241.6 219.5L246.9 216.5M259.3 192.8L265.3 189.5M251.0 218.5L246.9 216.5M231.7 170.4L224.2 166.5M255.7 188.7L261.1 186.4M257.0 200.4L259.3 192.8M252.9 197.5L255.7 188.7M250.7 176.6L251.5 169.0M227.0 209.8L232.7 206.5M215.3 194.0L216.3 186.9M251.5 169.0L245.0 162.9M238.8 175.7L246.2 170.5M209.7 199.2L215.3 194.0M218.1 231.6L219.6 222.8M204.6 171.6L205.1 178.8M246.9 216.5L242.4 212.8M237.9 183.5L238.8 175.7M215.3 194.0L210.0 190.3M209.7 199.2L204.5 195.1M227.0 201.9L228.2 195.0M250.3 184.6L257.1 180.8M210.8 167.1L218.1 170.0M232.7 206.5L227.0 201.9M228.2 195.0L236.1 190.9M231.7 170.4L238.2 165.9M227.0 201.9L221.2 199.0M246.2 170.5L245.0 162.9M242.4 212.8L244.2 207.3M249.1 209.9L244.2 207.3M210.0 190.3L211.2 181.6M240.9 226.3L244.8 228.6M242.4 212.8L237.4 210.0M210.0 190.3L204.5 186.2M239.4 203.5L246.2 200.1M219.2 162.6L218.1 170.0M224.8 233.8L225.6 225.9M256.4 215.9L252.8 213.9M221.2 199.0L221.4 190.7M221.4 190.7L229.4 188.2M228.2 195.0L221.4 190.7M251.2 204.2L252.9 197.5M209.5 206.1L214.6 210.9M215.6 202.3L214.6 210.9M204.5 186.2L205.1 178.8M214.3 218.5L221.2 214.9M211.2 181.6L205.1 178.8M200.3 209.7L209.5 206.1M232.2 221.3L236.9 223.5M205.1 178.8L211.2 174.3M224.3 158.9L232.3 162.4M204.5 186.2L198.5 181.8M221.2 214.9L226.1 217.1M258.1 210.3L260.8 203.8M252.9 197.5L259.3 192.8M204.6 171.6L211.2 174.3M241.6 219.5L242.4 212.8M224.8 233.8L231.3 227.9M221.4 190.7L216.3 186.9M251.2 204.2L246.2 200.1M236.1 190.9L229.4 188.2"/>
</g>
<path d="M196.0 200h3.8l-0.3 26h-3.5z" fill="url(#bnd)"/>
<path d="M213 176.8l23-6.6 1 3.2-23 7.2z" fill="url(#bnd2)"/>
<circle cx="174.8" cy="164.7" r="13.2" fill="url(#sph)"/>
<path d="M183.5 171.5l5.5 6-2.8 2.6-5.5-6z" fill="#e8e8e8"/>
<circle cx="246.9" cy="167.8" r="13.4" fill="url(#sph)"/>
<circle cx="197.0" cy="237.5" r="13.6" fill="url(#sph)"/>
<circle cx="198.0" cy="183.8" r="18.8" fill="url(#sph)"/>
<use href="#fm" stroke-width="0.5"/>
<use href="#fm" stroke-width="0.8" clip-path="url(#ac)" opacity="0.6"/>
<g fill="none" stroke-width="0.55">
<path stroke="#8c2626" d="M150.5 143.5L146.0 145.6M150.3 140.0L154.8 138.5M154.6 134.4L150.3 140.0M146.0 145.6L148.2 149.4M164.2 135.3L159.4 134.7M173.1 140.9L172.2 146.3M165.2 155.9L162.7 163.0M164.2 135.3L158.9 138.7M151.8 148.3L148.2 149.4M150.5 143.5L150.3 140.0M158.0 159.7L153.9 156.4M154.6 134.4L154.8 138.5M173.1 140.9L167.2 143.5M158.9 138.7L159.4 134.7M150.2 153.9L148.2 149.4M146.0 145.6L150.3 140.0M168.6 137.2L173.1 140.9M154.8 138.5L159.4 134.7M169.7 159.6L165.2 155.9M171.0 152.9L172.2 146.3M164.2 135.3L168.6 137.2M153.9 156.4L150.2 153.9M154.6 134.4L159.4 134.7M162.7 163.0L158.0 159.7M171.0 152.9L169.7 159.6M150.5 143.5L148.2 149.4"/>
<path stroke="#a44444" d="M166.1 150.4L165.2 155.9M156.1 150.4L150.2 153.9M155.2 142.3L151.8 148.3M165.2 155.9L158.0 159.7M164.2 135.3L163.2 140.8M163.2 140.8L167.2 143.5M171.0 152.9L166.1 150.4M165.2 155.9L159.7 153.7M159.7 153.7L158.0 159.7M158.9 138.7L163.2 140.8M155.2 142.3L158.9 138.7M167.2 143.5L172.2 146.3M155.2 142.3L150.5 143.5M155.2 142.3L154.8 138.5M151.8 148.3L150.5 143.5M159.7 153.7L153.9 156.4M150.5 143.5L154.8 138.5M166.1 150.4L172.2 146.3M158.9 138.7L154.8 138.5M171.0 152.9L165.2 155.9M156.1 150.4L153.9 156.4M151.8 148.3L150.2 153.9M168.6 137.2L167.2 143.5M168.6 137.2L163.2 140.8"/>
<path stroke="#c87878" d="M158.2 144.6L158.9 138.7M156.1 150.4L151.8 148.3M161.4 146.5L167.2 143.5M161.4 146.5L163.2 140.8M158.2 144.6L155.2 142.3M158.2 144.6L151.8 148.3M159.7 153.7L156.1 150.4M166.1 150.4L159.7 153.7M158.2 144.6L163.2 140.8M166.1 150.4L167.2 143.5"/>
<path stroke="#e4a8a8" d="M166.1 150.4L161.4 146.5M161.4 146.5L156.1 150.4M161.4 146.5L159.7 153.7M158.2 144.6L156.1 150.4M161.4 146.5L158.2 144.6"/>
</g>
</svg>
</div>

<div class="a" id="rp"></div>
<svg class="a" style="left:0;top:0" width="800" height="452" viewBox="0 0 800 452">
<line x1="568.80" y1="42.00" x2="592.20" y2="42.00" stroke="#3c3c3c" stroke-width="0.9"/>
<rect x="575.45" y="36.90" width="9.7" height="10.0" fill="#a3c1e3" stroke="#4a4a4a" stroke-width="0.7"/>
<line x1="463.60" y1="55.45" x2="487.00" y2="55.45" stroke="#3c3c3c" stroke-width="0.9"/>
<rect x="470.25" y="50.35" width="9.7" height="10.0" fill="#a3c1e3" stroke="#4a4a4a" stroke-width="0.7"/>
<line x1="568.80" y1="55.45" x2="592.20" y2="55.45" stroke="#3c3c3c" stroke-width="0.9"/>
<rect x="575.45" y="50.35" width="9.7" height="10.0" fill="#a3c1e3" stroke="#4a4a4a" stroke-width="0.7"/>
<line x1="674.00" y1="55.45" x2="697.40" y2="55.45" stroke="#3c3c3c" stroke-width="0.9"/>
<rect x="680.65" y="50.35" width="9.7" height="10.0" fill="#a3c1e3" stroke="#4a4a4a" stroke-width="0.7"/>
<line x1="568.80" y1="68.90" x2="592.20" y2="68.90" stroke="#3c3c3c" stroke-width="0.9"/>
<rect x="575.45" y="63.80" width="9.7" height="10.0" fill="#a3c1e3" stroke="#4a4a4a" stroke-width="0.7"/>
<line x1="516.20" y1="82.35" x2="539.60" y2="82.35" stroke="#3c3c3c" stroke-width="0.9"/>
<rect x="522.85" y="77.25" width="9.7" height="10.0" fill="#a3c1e3" stroke="#4a4a4a" stroke-width="0.7"/>
<line x1="621.40" y1="82.35" x2="644.80" y2="82.35" stroke="#3c3c3c" stroke-width="0.9"/>
<rect x="628.05" y="77.25" width="9.7" height="10.0" fill="#a3c1e3" stroke="#4a4a4a" stroke-width="0.7"/>
<line x1="463.60" y1="95.80" x2="487.00" y2="95.80" stroke="#3c3c3c" stroke-width="0.9"/>
<rect x="470.25" y="90.70" width="9.7" height="10.0" fill="#a3c1e3" stroke="#4a4a4a" stroke-width="0.7"/>
<line x1="568.80" y1="95.80" x2="592.20" y2="95.80" stroke="#3c3c3c" stroke-width="0.9"/>
<rect x="575.45" y="90.70" width="9.7" height="10.0" fill="#a3c1e3" stroke="#4a4a4a" stroke-width="0.7"/>
<line x1="674.00" y1="95.80" x2="697.40" y2="95.80" stroke="#3c3c3c" stroke-width="0.9"/>
<rect x="680.65" y="90.70" width="9.7" height="10.0" fill="#a3c1e3" stroke="#4a4a4a" stroke-width="0.7"/>
<line x1="411.00" y1="109.25" x2="434.40" y2="109.25" stroke="#3c3c3c" stroke-width="0.9"/>
<rect x="417.65" y="104.15" width="9.7" height="10.0" fill="#a3c1e3" stroke="#4a4a4a" stroke-width="0.7"/>
<line x1="516.20" y1="109.25" x2="539.60" y2="109.25" stroke="#3c3c3c" stroke-width="0.9"/>
<rect x="522.85" y="104.15" width="9.7" height="10.0" fill="#a3c1e3" stroke="#4a4a4a" stroke-width="0.7"/>
<line x1="621.40" y1="109.25" x2="644.80" y2="109.25" stroke="#3c3c3c" stroke-width="0.9"/>
<rect x="628.05" y="104.15" width="9.7" height="10.0" fill="#a3c1e3" stroke="#4a4a4a" stroke-width="0.7"/>
<line x1="726.60" y1="109.25" x2="750.00" y2="109.25" stroke="#3c3c3c" stroke-width="0.9"/>
<rect x="733.25" y="104.15" width="9.7" height="10.0" fill="#a3c1e3" stroke="#4a4a4a" stroke-width="0.7"/>
<line x1="516.20" y1="122.70" x2="539.60" y2="122.70" stroke="#3c3c3c" stroke-width="0.9"/>
<rect x="522.85" y="117.60" width="9.7" height="10.0" fill="#a3c1e3" stroke="#4a4a4a" stroke-width="0.7"/>
<line x1="621.40" y1="122.70" x2="644.80" y2="122.70" stroke="#3c3c3c" stroke-width="0.9"/>
<rect x="628.05" y="117.60" width="9.7" height="10.0" fill="#a3c1e3" stroke="#4a4a4a" stroke-width="0.7"/>
<line x1="568.80" y1="136.15" x2="592.20" y2="136.15" stroke="#3c3c3c" stroke-width="0.9"/>
<rect x="575.45" y="131.05" width="9.7" height="10.0" fill="#a3c1e3" stroke="#4a4a4a" stroke-width="0.7"/>
<line x1="568.80" y1="149.60" x2="592.20" y2="149.60" stroke="#3c3c3c" stroke-width="0.9"/>
<rect x="575.45" y="144.50" width="9.7" height="10.0" fill="#a3c1e3" stroke="#4a4a4a" stroke-width="0.7"/>
<line x1="463.60" y1="163.05" x2="487.00" y2="163.05" stroke="#3c3c3c" stroke-width="0.9"/>
<rect x="470.25" y="157.95" width="9.7" height="10.0" fill="#a3c1e3" stroke="#4a4a4a" stroke-width="0.7"/>
<line x1="568.80" y1="163.05" x2="592.20" y2="163.05" stroke="#3c3c3c" stroke-width="0.9"/>
<rect x="575.45" y="157.95" width="9.7" height="10.0" fill="#a3c1e3" stroke="#4a4a4a" stroke-width="0.7"/>
<line x1="674.00" y1="163.05" x2="697.40" y2="163.05" stroke="#3c3c3c" stroke-width="0.9"/>
<rect x="680.65" y="157.95" width="9.7" height="10.0" fill="#a3c1e3" stroke="#4a4a4a" stroke-width="0.7"/>
<line x1="463.60" y1="176.50" x2="487.00" y2="176.50" stroke="#3c3c3c" stroke-width="0.9"/>
<rect x="470.25" y="171.40" width="9.7" height="10.0" fill="#a3c1e3" stroke="#4a4a4a" stroke-width="0.7"/>
<line x1="568.80" y1="176.50" x2="592.20" y2="176.50" stroke="#3c3c3c" stroke-width="0.9"/>
<rect x="575.45" y="171.40" width="9.7" height="10.0" fill="#a3c1e3" stroke="#4a4a4a" stroke-width="0.7"/>
<line x1="674.00" y1="176.50" x2="697.40" y2="176.50" stroke="#3c3c3c" stroke-width="0.9"/>
<rect x="680.65" y="171.40" width="9.7" height="10.0" fill="#a3c1e3" stroke="#4a4a4a" stroke-width="0.7"/>
<line x1="463.60" y1="189.95" x2="487.00" y2="189.95" stroke="#3c3c3c" stroke-width="0.9"/>
<rect x="470.25" y="184.85" width="9.7" height="10.0" fill="#a3c1e3" stroke="#4a4a4a" stroke-width="0.7"/>
<line x1="568.80" y1="189.95" x2="592.20" y2="189.95" stroke="#3c3c3c" stroke-width="0.9"/>
<rect x="575.45" y="184.85" width="9.7" height="10.0" fill="#a3c1e3" stroke="#4a4a4a" stroke-width="0.7"/>
<line x1="674.00" y1="189.95" x2="697.40" y2="189.95" stroke="#3c3c3c" stroke-width="0.9"/>
<rect x="680.65" y="184.85" width="9.7" height="10.0" fill="#a3c1e3" stroke="#4a4a4a" stroke-width="0.7"/>
<rect x="558.40" y="197.55" width="65.9" height="11.3" fill="#ffff00"/>
<line x1="568.80" y1="203.40" x2="592.20" y2="203.40" stroke="#3c3c3c" stroke-width="0.9"/>
<rect x="575.45" y="198.30" width="9.7" height="10.0" fill="#a3c1e3" stroke="#4a4a4a" stroke-width="0.7"/>
<rect x="630.20" y="201.55" width="3.7" height="3.7" fill="#dcdcdc" stroke="#4c4c4c" stroke-width="1"/>
<rect x="453.20" y="211.00" width="65.9" height="11.3" fill="#ffff00"/>
<line x1="463.60" y1="216.85" x2="487.00" y2="216.85" stroke="#3c3c3c" stroke-width="0.9"/>
<rect x="470.25" y="211.75" width="9.7" height="10.0" fill="#a3c1e3" stroke="#4a4a4a" stroke-width="0.7"/>
<path d="M473.10 220.35 V213.15 M473.10 213.15 L471.60 215.45" stroke="#ee1c1c" stroke-width="0.9" fill="none"/>
<path d="M476.80 213.15 V220.35" stroke="#ee1c1c" stroke-width="0.9" fill="none"/><path d="M476.80 220.55 L476.80 217.65 L478.50 218.05 Z" fill="#ee1c1c"/>
<rect x="525.00" y="215.00" width="3.7" height="3.7" fill="#dcdcdc" stroke="#4c4c4c" stroke-width="1"/>
<rect x="558.40" y="211.00" width="65.9" height="11.3" fill="#ffff00"/>
<line x1="568.80" y1="216.85" x2="592.20" y2="216.85" stroke="#3c3c3c" stroke-width="0.9"/>
<rect x="575.45" y="211.75" width="9.7" height="10.0" fill="#a3c1e3" stroke="#4a4a4a" stroke-width="0.7"/>
<path d="M578.30 220.35 V213.15 M578.30 213.15 L576.80 215.45" stroke="#ee1c1c" stroke-width="0.9" fill="none"/>
<path d="M582.00 213.15 V220.35" stroke="#ee1c1c" stroke-width="0.9" fill="none"/><path d="M582.00 220.55 L582.00 217.65 L583.70 218.05 Z" fill="#ee1c1c"/>
<rect x="630.20" y="215.00" width="3.7" height="3.7" fill="#dcdcdc" stroke="#4c4c4c" stroke-width="1"/>
<rect x="663.60" y="211.00" width="65.9" height="11.3" fill="#ffff00"/>
<line x1="674.00" y1="216.85" x2="697.40" y2="216.85" stroke="#3c3c3c" stroke-width="0.9"/>
<rect x="680.65" y="211.75" width="9.7" height="10.0" fill="#a3c1e3" stroke="#4a4a4a" stroke-width="0.7"/>
<path d="M683.50 220.35 V213.15 M683.50 213.15 L682.00 215.45" stroke="#ee1c1c" stroke-width="0.9" fill="none"/>
<path d="M687.20 213.15 V220.35" stroke="#ee1c1c" stroke-width="0.9" fill="none"/><path d="M687.20 220.55 L687.20 217.65 L688.90 218.05 Z" fill="#ee1c1c"/>
<rect x="735.40" y="215.00" width="3.7" height="3.7" fill="#dcdcdc" stroke="#4c4c4c" stroke-width="1"/>
<rect x="558.40" y="224.45" width="65.9" height="11.3" fill="#ffff00"/>
<line x1="568.80" y1="230.30" x2="592.20" y2="230.30" stroke="#3c3c3c" stroke-width="0.9"/>
<rect x="575.45" y="225.20" width="9.7" height="10.0" fill="#a3c1e3" stroke="#4a4a4a" stroke-width="0.7"/>
<path d="M578.30 233.80 V226.60 M578.30 226.60 L576.80 228.90" stroke="#ee1c1c" stroke-width="0.9" fill="none"/>
<path d="M582.00 226.60 V233.80" stroke="#ee1c1c" stroke-width="0.9" fill="none"/><path d="M582.00 234.00 L582.00 231.10 L583.70 231.50 Z" fill="#ee1c1c"/>
<rect x="630.20" y="228.45" width="3.7" height="3.7" fill="#ff0000" stroke="#d80000" stroke-width="1"/>
<rect x="558.40" y="237.90" width="65.9" height="11.3" fill="#ffff00"/>
<line x1="568.80" y1="243.75" x2="592.20" y2="243.75" stroke="#3c3c3c" stroke-width="0.9"/>
<rect x="575.45" y="238.65" width="9.7" height="10.0" fill="#a3c1e3" stroke="#4a4a4a" stroke-width="0.7"/>
<path d="M578.30 247.25 V240.05 M578.30 240.05 L576.80 242.35" stroke="#ee1c1c" stroke-width="0.9" fill="none"/>
<path d="M582.00 240.05 V247.25" stroke="#ee1c1c" stroke-width="0.9" fill="none"/><path d="M582.00 247.45 L582.00 244.55 L583.70 244.95 Z" fill="#ee1c1c"/>
<rect x="630.20" y="241.90" width="3.7" height="3.7" fill="#dcdcdc" stroke="#4c4c4c" stroke-width="1"/>
<line x1="398.2" y1="209.75" x2="797.6" y2="209.75" stroke="#56e456" stroke-width="1" stroke-dasharray="1.7 0.8"/>
</svg>
<div class="a" id="sb"></div>
<div class="a" id="thumb"></div>
<svg class="a" style="left:399px;top:353px" width="399" height="8" viewBox="399 353 399 8">
 <path d="M402.2 355.5v2.6l-1.4-1.3z" fill="#555"/>
 <path d="M793.6 355.2v3l1.7-1.5z" fill="#444"/>
</svg>

<!-- charge / spin row -->
<div class="a inp" style="left:22.4px;top:365.2px;width:12.3px;height:8.1px;"></div>
<div class="a inp" style="left:53.7px;top:365.1px;width:29.5px;height:8.1px;"></div>
<div class="a btn" style="left:76.4px;top:365.9px;width:6.2px;height:6.6px;"></div>
<svg class="a" style="left:76px;top:365px" width="8" height="9" viewBox="76 365 8 9"><path d="M78.1 368.7h2.8l-1.4 1.7z" fill="#222"/></svg>

<!-- tabs -->
<div class="a" id="pane"></div>
<div class="a tab" style="left:2.4px;width:29.2px;"></div>
<div class="a tab" style="left:31.2px;width:26.6px;"></div>
<div class="a tab" style="left:57.4px;width:31.2px;"></div>
<div class="a" id="tabsel"></div>
<div class="a" style="left:2.4px;top:434.8px;width:795.4px;height:0.9px;background:#dadada;"></div>

<!-- pane controls -->
<div class="a inp" style="left:281.7px;top:397px;width:17.9px;height:8.1px;"></div>
<div class="a btn" style="left:245px;top:414.3px;width:32.6px;height:9px;"></div>
<div class="a btn" style="left:531.2px;top:396.3px;width:35.1px;height:9.2px;"></div>
<svg class="a" style="left:560px;top:397px" width="8" height="8" viewBox="560 397 8 8"><path d="M561.9 399.8h2.8l-1.4 1.7z" fill="#111"/></svg>
<div class="a btn" style="left:520.5px;top:414.3px;width:34.6px;height:9px;"></div>

<!-- bottom buttons -->
<div class="a btn" style="left:348px;top:439.4px;width:32.9px;height:9.2px;"></div>
<div class="a btn" style="left:383.4px;top:439.4px;width:32.8px;height:9.2px;"></div>
<div class="a btn" style="left:419.3px;top:439.4px;width:32.4px;height:9.2px;"></div>
<div class="a" style="left:0;top:450.3px;width:800px;height:1.7px;background:linear-gradient(#dcdcdc,#a8a8a8);"></div>

<div id="txt" style="position:absolute;left:0;top:0;width:800px;height:452px;will-change:transform;">
<span id="t0" class="t" style="left:10.80px;top:1.95px;font:normal 5.10px/7.14px 'Liberation Sans', sans-serif;color:#1a1a1a;letter-spacing:0.000px;text-shadow:0 0 2px #fff,0 0 3px #fff;transform-origin:0 50%;transform:scaleX(0.9484);">G2:M1 - MOs</span>
<span id="t1" class="t" style="left:6.00px;top:12.95px;font:normal 5.50px/7.70px 'Liberation Sans', sans-serif;color:#0a0a0a;letter-spacing:0.000px;transform-origin:0 50%;transform:scaleX(0.7780);">Current Surface:</span>
<span id="t2" class="t" style="left:9.00px;top:347.95px;font:normal 5.50px/7.70px 'Liberation Sans', sans-serif;color:#0a0a0a;letter-spacing:0.000px;transform-origin:0 50%;transform:scaleX(0.8049);">MO ( (MO = 2) ; Isovalue = 0.02 )</span>
<span id="t3" class="t" style="left:4.30px;top:365.95px;font:normal 5.50px/7.70px 'Liberation Sans', sans-serif;color:#0a0a0a;letter-spacing:0.000px;transform-origin:0 50%;transform:scaleX(0.7662);">Charge:</span>
<span id="t4" class="t" style="left:24.00px;top:365.95px;font:normal 5.50px/7.70px 'Liberation Sans', sans-serif;color:#0a0a0a;letter-spacing:0.000px;transform-origin:0 50%;transform:scaleX(0.7837);">0</span>
<span id="t5" class="t" style="left:41.30px;top:365.95px;font:normal 5.50px/7.70px 'Liberation Sans', sans-serif;color:#0a0a0a;letter-spacing:0.000px;transform-origin:0 50%;transform:scaleX(0.7970);">Spin:</span>
<span id="t6" class="t" style="left:56.30px;top:364.95px;font:normal 5.50px/7.70px 'Liberation Sans', sans-serif;color:#0a0a0a;letter-spacing:0.000px;transform-origin:0 50%;transform:scaleX(0.7428);">Singlet</span>
<span id="t7" class="t" style="left:90.50px;top:365.95px;font:normal 5.50px/7.70px 'Liberation Sans', sans-serif;color:#0a0a0a;letter-spacing:0.000px;transform-origin:0 50%;transform:scaleX(0.8823);">Gaussian MOs from:</span>
<span id="t8" class="t" style="left:138.00px;top:365.95px;font:normal 5.50px/7.70px 'Liberation Sans', sans-serif;color:#0a0a0a;letter-spacing:0.000px;transform-origin:0 50%;transform:scaleX(0.9043);">//icnas1.cc.ic.ac.uk/jhm116/1styearlab/JHMoore_CH4_optf_pop(3).chk</span>
<span id="t9" class="t" style="left:6.00px;top:379.95px;font:normal 5.50px/7.70px 'Liberation Sans', sans-serif;color:#0a0a0a;letter-spacing:0.000px;transform-origin:0 50%;transform:scaleX(0.7871);">New MOs</span>
<span id="t10" class="t" style="left:34.50px;top:379.95px;font:normal 5.50px/7.70px 'Liberation Sans', sans-serif;color:#0a0a0a;letter-spacing:0.000px;transform-origin:0 50%;transform:scaleX(0.7664);">Visualize</span>
<span id="t11" class="t" style="left:60.80px;top:379.95px;font:normal 5.50px/7.70px 'Liberation Sans', sans-serif;color:#0a0a0a;letter-spacing:0.000px;transform-origin:0 50%;transform:scaleX(0.7789);">Calculation</span>
<span id="t12" class="t" style="left:92.00px;top:379.95px;font:normal 5.50px/7.70px 'Liberation Sans', sans-serif;color:#0a0a0a;letter-spacing:0.000px;transform-origin:0 50%;transform:scaleX(0.7453);">Diagram</span>
<span id="t13" class="t" style="left:233.80px;top:397.95px;font:normal 5.50px/7.70px 'Liberation Sans', sans-serif;color:#0a0a0a;letter-spacing:0.000px;transform-origin:0 50%;transform:scaleX(0.8007);">Degeneracy Threshold:</span>
<span id="t14" class="t" style="left:283.80px;top:397.95px;font:normal 5.50px/7.70px 'Liberation Sans', sans-serif;color:#0a0a0a;letter-spacing:0.000px;transform-origin:0 50%;transform:scaleX(0.7650);">0.01</span>
<span id="t15" class="t" style="left:248.80px;top:415.95px;font:normal 5.50px/7.70px 'Liberation Sans', sans-serif;color:#0a0a0a;letter-spacing:0.000px;transform-origin:0 50%;transform:scaleX(0.8256);">Save Data...</span>
<span id="t16" class="t" style="left:535.00px;top:397.95px;font:normal 5.50px/7.70px 'Liberation Sans', sans-serif;color:#0a0a0a;letter-spacing:0.000px;transform-origin:0 50%;transform:scaleX(0.7641);">Arrange MOs</span>
<span id="t17" class="t" style="left:522.50px;top:415.95px;font:normal 5.50px/7.70px 'Liberation Sans', sans-serif;color:#0a0a0a;letter-spacing:0.000px;transform-origin:0 50%;transform:scaleX(0.7665);">Export Picture...</span>
<span id="t18" class="t" style="left:361.20px;top:440.95px;font:normal 5.50px/7.70px 'Liberation Sans', sans-serif;color:#0a0a0a;letter-spacing:0.000px;transform-origin:0 50%;transform:scaleX(0.8391);">Ok</span>
<span id="t19" class="t" style="left:393.00px;top:440.95px;font:normal 5.50px/7.70px 'Liberation Sans', sans-serif;color:#0a0a0a;letter-spacing:0.000px;transform-origin:0 50%;transform:scaleX(0.7883);">Cancel</span>
<span id="t20" class="t" style="left:431.00px;top:440.95px;font:normal 5.50px/7.70px 'Liberation Sans', sans-serif;color:#0a0a0a;letter-spacing:0.000px;transform-origin:0 50%;transform:scaleX(0.7691);">Help</span>
<span id="t21" class="t" style="left:577.30px;top:17.95px;font:bold 8.50px/11.90px 'Liberation Sans', sans-serif;color:#000;letter-spacing:0.000px;transform-origin:0 50%;transform:scaleX(1.0044);">Alpha MOs</span>
<span id="t22" class="t" style="left:172.70px;top:159.95px;font:normal 7.80px/10.92px 'Liberation Sans', sans-serif;color:#1c1c1c;letter-spacing:0.000px;text-shadow:0 0 0.6px #222;transform-origin:0 50%;transform:scaleX(1.0000);">3</span>
<span id="t23" class="t" style="left:244.80px;top:163.95px;font:normal 7.80px/10.92px 'Liberation Sans', sans-serif;color:#1c1c1c;letter-spacing:0.000px;text-shadow:0 0 0.6px #222;transform-origin:0 50%;transform:scaleX(1.0000);">5</span>
<span id="t24" class="t" style="left:195.60px;top:179.95px;font:normal 7.80px/10.92px 'Liberation Sans', sans-serif;color:#1c1c1c;letter-spacing:0.000px;text-shadow:0 0 0.6px #222;transform-origin:0 50%;transform:scaleX(1.0000);">1</span>
<span id="t25" class="t" style="left:194.70px;top:233.95px;font:normal 7.80px/10.92px 'Liberation Sans', sans-serif;color:#1c1c1c;letter-spacing:0.000px;text-shadow:0 0 0.6px #222;transform-origin:0 50%;transform:scaleX(1.0000);">4</span>
<span id="t26" class="t" style="left:559.02px;top:38.95px;font:normal 5.90px/8.26px 'Liberation Mono', monospace;color:#222;letter-spacing:0.000px;transform-origin:0 50%;transform:scaleX(0.9296);">35</span>
<span id="t27" class="t" style="left:600.07px;top:38.95px;font:normal 5.90px/8.26px 'Liberation Mono', monospace;color:#3f3fff;letter-spacing:0.000px;transform-origin:0 50%;transform:scaleX(0.9305);">4.42252</span>
<span id="t28" class="t" style="left:453.82px;top:52.95px;font:normal 5.90px/8.26px 'Liberation Mono', monospace;color:#222;letter-spacing:0.000px;transform-origin:0 50%;transform:scaleX(0.9296);">32</span>
<span id="t29" class="t" style="left:494.87px;top:52.95px;font:normal 5.90px/8.26px 'Liberation Mono', monospace;color:#3f3fff;letter-spacing:0.000px;transform-origin:0 50%;transform:scaleX(0.9305);">3.42029</span>
<span id="t30" class="t" style="left:559.02px;top:52.95px;font:normal 5.90px/8.26px 'Liberation Mono', monospace;color:#222;letter-spacing:0.000px;transform-origin:0 50%;transform:scaleX(0.9296);">33</span>
<span id="t31" class="t" style="left:600.07px;top:52.95px;font:normal 5.90px/8.26px 'Liberation Mono', monospace;color:#3f3fff;letter-spacing:0.000px;transform-origin:0 50%;transform:scaleX(0.9305);">3.42029</span>
<span id="t32" class="t" style="left:664.22px;top:52.95px;font:normal 5.90px/8.26px 'Liberation Mono', monospace;color:#222;letter-spacing:0.000px;transform-origin:0 50%;transform:scaleX(0.9296);">34</span>
<span id="t33" class="t" style="left:705.27px;top:52.95px;font:normal 5.90px/8.26px 'Liberation Mono', monospace;color:#3f3fff;letter-spacing:0.000px;transform-origin:0 50%;transform:scaleX(0.9305);">3.42029</span>
<span id="t34" class="t" style="left:559.02px;top:65.95px;font:normal 5.90px/8.26px 'Liberation Mono', monospace;color:#222;letter-spacing:0.000px;transform-origin:0 50%;transform:scaleX(0.9296);">31</span>
<span id="t35" class="t" style="left:600.07px;top:65.95px;font:normal 5.90px/8.26px 'Liberation Mono', monospace;color:#3f3fff;letter-spacing:0.000px;transform-origin:0 50%;transform:scaleX(0.9305);">3.11513</span>
<span id="t36" class="t" style="left:506.42px;top:78.95px;font:normal 5.90px/8.26px 'Liberation Mono', monospace;color:#222;letter-spacing:0.000px;transform-origin:0 50%;transform:scaleX(0.9296);">29</span>
<span id="t37" class="t" style="left:547.47px;top:78.95px;font:normal 5.90px/8.26px 'Liberation Mono', monospace;color:#3f3fff;letter-spacing:0.000px;transform-origin:0 50%;transform:scaleX(0.9305);">2.91115</span>
<span id="t38" class="t" style="left:611.62px;top:78.95px;font:normal 5.90px/8.26px 'Liberation Mono', monospace;color:#222;letter-spacing:0.000px;transform-origin:0 50%;transform:scaleX(0.9296);">30</span>
<span id="t39" class="t" style="left:652.67px;top:78.95px;font:normal 5.90px/8.26px 'Liberation Mono', monospace;color:#3f3fff;letter-spacing:0.000px;transform-origin:0 50%;transform:scaleX(0.9305);">2.91115</span>
<span id="t40" class="t" style="left:453.82px;top:92.95px;font:normal 5.90px/8.26px 'Liberation Mono', monospace;color:#222;letter-spacing:0.000px;transform-origin:0 50%;transform:scaleX(0.9296);">26</span>
<span id="t41" class="t" style="left:494.87px;top:92.95px;font:normal 5.90px/8.26px 'Liberation Mono', monospace;color:#3f3fff;letter-spacing:0.000px;transform-origin:0 50%;transform:scaleX(0.9305);">2.62978</span>
<span id="t42" class="t" style="left:559.02px;top:92.95px;font:normal 5.90px/8.26px 'Liberation Mono', monospace;color:#222;letter-spacing:0.000px;transform-origin:0 50%;transform:scaleX(0.9296);">27</span>
<span id="t43" class="t" style="left:600.07px;top:92.95px;font:normal 5.90px/8.26px 'Liberation Mono', monospace;color:#3f3fff;letter-spacing:0.000px;transform-origin:0 50%;transform:scaleX(0.9305);">2.62978</span>
<span id="t44" class="t" style="left:664.22px;top:92.95px;font:normal 5.90px/8.26px 'Liberation Mono', monospace;color:#222;letter-spacing:0.000px;transform-origin:0 50%;transform:scaleX(0.9296);">28</span>
<span id="t45" class="t" style="left:705.27px;top:92.95px;font:normal 5.90px/8.26px 'Liberation Mono', monospace;color:#3f3fff;letter-spacing:0.000px;transform-origin:0 50%;transform:scaleX(0.9305);">2.62978</span>
<span id="t46" class="t" style="left:401.22px;top:105.95px;font:normal 5.90px/8.26px 'Liberation Mono', monospace;color:#222;letter-spacing:0.000px;transform-origin:0 50%;transform:scaleX(0.9296);">21</span>
<span id="t47" class="t" style="left:442.27px;top:105.95px;font:normal 5.90px/8.26px 'Liberation Mono', monospace;color:#3f3fff;letter-spacing:0.000px;transform-origin:0 50%;transform:scaleX(0.9305);">2.04813</span>
<span id="t48" class="t" style="left:506.42px;top:105.95px;font:normal 5.90px/8.26px 'Liberation Mono', monospace;color:#222;letter-spacing:0.000px;transform-origin:0 50%;transform:scaleX(0.9296);">22</span>
<span id="t49" class="t" style="left:547.47px;top:105.95px;font:normal 5.90px/8.26px 'Liberation Mono', monospace;color:#3f3fff;letter-spacing:0.000px;transform-origin:0 50%;transform:scaleX(0.9305);">2.04813</span>
<span id="t50" class="t" style="left:611.62px;top:105.95px;font:normal 5.90px/8.26px 'Liberation Mono', monospace;color:#222;letter-spacing:0.000px;transform-origin:0 50%;transform:scaleX(0.9296);">23</span>
<span id="t51" class="t" style="left:652.67px;top:105.95px;font:normal 5.90px/8.26px 'Liberation Mono', monospace;color:#3f3fff;letter-spacing:0.000px;transform-origin:0 50%;transform:scaleX(0.9305);">2.05166</span>
<span id="t52" class="t" style="left:716.82px;top:105.95px;font:normal 5.90px/8.26px 'Liberation Mono', monospace;color:#222;letter-spacing:0.000px;transform-origin:0 50%;transform:scaleX(0.9296);">24</span>
<span id="t53" class="t" style="left:757.87px;top:105.95px;font:normal 5.90px/8.26px 'Liberation Mono', monospace;color:#3f3fff;letter-spacing:0.000px;transform-origin:0 50%;transform:scaleX(0.9305);">2.05166</span>
<span id="t54" class="t" style="left:506.42px;top:119.95px;font:normal 5.90px/8.26px 'Liberation Mono', monospace;color:#222;letter-spacing:0.000px;transform-origin:0 50%;transform:scaleX(0.9296);">18</span>
<span id="t55" class="t" style="left:547.47px;top:119.95px;font:normal 5.90px/8.26px 'Liberation Mono', monospace;color:#3f3fff;letter-spacing:0.000px;transform-origin:0 50%;transform:scaleX(0.9305);">1.36343</span>
<span id="t56" class="t" style="left:611.62px;top:119.95px;font:normal 5.90px/8.26px 'Liberation Mono', monospace;color:#222;letter-spacing:0.000px;transform-origin:0 50%;transform:scaleX(0.9296);">19</span>
<span id="t57" class="t" style="left:652.67px;top:119.95px;font:normal 5.90px/8.26px 'Liberation Mono', monospace;color:#3f3fff;letter-spacing:0.000px;transform-origin:0 50%;transform:scaleX(0.9305);">1.36343</span>
<span id="t58" class="t" style="left:559.02px;top:132.95px;font:normal 5.90px/8.26px 'Liberation Mono', monospace;color:#222;letter-spacing:0.000px;transform-origin:0 50%;transform:scaleX(0.9296);">17</span>
<span id="t59" class="t" style="left:600.07px;top:132.95px;font:normal 5.90px/8.26px 'Liberation Mono', monospace;color:#3f3fff;letter-spacing:0.000px;transform-origin:0 50%;transform:scaleX(0.9305);">1.10029</span>
<span id="t60" class="t" style="left:559.02px;top:146.95px;font:normal 5.90px/8.26px 'Liberation Mono', monospace;color:#222;letter-spacing:0.000px;transform-origin:0 50%;transform:scaleX(0.9296);">16</span>
<span id="t61" class="t" style="left:600.07px;top:146.95px;font:normal 5.90px/8.26px 'Liberation Mono', monospace;color:#3f3fff;letter-spacing:0.000px;transform-origin:0 50%;transform:scaleX(0.9305);">0.92231</span>
<span id="t62" class="t" style="left:453.82px;top:159.95px;font:normal 5.90px/8.26px 'Liberation Mono', monospace;color:#222;letter-spacing:0.000px;transform-origin:0 50%;transform:scaleX(0.9296);">13</span>
<span id="t63" class="t" style="left:494.87px;top:159.95px;font:normal 5.90px/8.26px 'Liberation Mono', monospace;color:#3f3fff;letter-spacing:0.000px;transform-origin:0 50%;transform:scaleX(0.9305);">0.87434</span>
<span id="t64" class="t" style="left:559.02px;top:159.95px;font:normal 5.90px/8.26px 'Liberation Mono', monospace;color:#222;letter-spacing:0.000px;transform-origin:0 50%;transform:scaleX(0.9296);">14</span>
<span id="t65" class="t" style="left:600.07px;top:159.95px;font:normal 5.90px/8.26px 'Liberation Mono', monospace;color:#3f3fff;letter-spacing:0.000px;transform-origin:0 50%;transform:scaleX(0.9305);">0.87434</span>
<span id="t66" class="t" style="left:664.22px;top:159.95px;font:normal 5.90px/8.26px 'Liberation Mono', monospace;color:#222;letter-spacing:0.000px;transform-origin:0 50%;transform:scaleX(0.9296);">15</span>
<span id="t67" class="t" style="left:705.27px;top:159.95px;font:normal 5.90px/8.26px 'Liberation Mono', monospace;color:#3f3fff;letter-spacing:0.000px;transform-origin:0 50%;transform:scaleX(0.9305);">0.87434</span>
<span id="t68" class="t" style="left:453.82px;top:173.95px;font:normal 5.90px/8.26px 'Liberation Mono', monospace;color:#222;letter-spacing:0.000px;transform-origin:0 50%;transform:scaleX(0.9296);">10</span>
<span id="t69" class="t" style="left:494.87px;top:173.95px;font:normal 5.90px/8.26px 'Liberation Mono', monospace;color:#3f3fff;letter-spacing:0.000px;transform-origin:0 50%;transform:scaleX(0.9305);">0.52916</span>
<span id="t70" class="t" style="left:559.02px;top:173.95px;font:normal 5.90px/8.26px 'Liberation Mono', monospace;color:#222;letter-spacing:0.000px;transform-origin:0 50%;transform:scaleX(0.9296);">11</span>
<span id="t71" class="t" style="left:600.07px;top:173.95px;font:normal 5.90px/8.26px 'Liberation Mono', monospace;color:#3f3fff;letter-spacing:0.000px;transform-origin:0 50%;transform:scaleX(0.9305);">0.52916</span>
<span id="t72" class="t" style="left:664.22px;top:173.95px;font:normal 5.90px/8.26px 'Liberation Mono', monospace;color:#222;letter-spacing:0.000px;transform-origin:0 50%;transform:scaleX(0.9296);">12</span>
<span id="t73" class="t" style="left:705.27px;top:173.95px;font:normal 5.90px/8.26px 'Liberation Mono', monospace;color:#3f3fff;letter-spacing:0.000px;transform-origin:0 50%;transform:scaleX(0.9305);">0.52916</span>
<span id="t74" class="t" style="left:457.11px;top:186.95px;font:normal 5.90px/8.26px 'Liberation Mono', monospace;color:#222;letter-spacing:0.000px;transform-origin:0 50%;transform:scaleX(0.9276);">7</span>
<span id="t75" class="t" style="left:494.87px;top:186.95px;font:normal 5.90px/8.26px 'Liberation Mono', monospace;color:#3f3fff;letter-spacing:0.000px;transform-origin:0 50%;transform:scaleX(0.9305);">0.17675</span>
<span id="t76" class="t" style="left:562.31px;top:186.95px;font:normal 5.90px/8.26px 'Liberation Mono', monospace;color:#222;letter-spacing:0.000px;transform-origin:0 50%;transform:scaleX(0.9276);">8</span>
<span id="t77" class="t" style="left:600.07px;top:186.95px;font:normal 5.90px/8.26px 'Liberation Mono', monospace;color:#3f3fff;letter-spacing:0.000px;transform-origin:0 50%;transform:scaleX(0.9305);">0.17675</span>
<span id="t78" class="t" style="left:667.51px;top:186.95px;font:normal 5.90px/8.26px 'Liberation Mono', monospace;color:#222;letter-spacing:0.000px;transform-origin:0 50%;transform:scaleX(0.9276);">9</span>
<span id="t79" class="t" style="left:705.27px;top:186.95px;font:normal 5.90px/8.26px 'Liberation Mono', monospace;color:#3f3fff;letter-spacing:0.000px;transform-origin:0 50%;transform:scaleX(0.9305);">0.17675</span>
<span id="t80" class="t" style="left:562.31px;top:200.95px;font:normal 5.90px/8.26px 'Liberation Mono', monospace;color:#222;letter-spacing:0.000px;transform-origin:0 50%;transform:scaleX(0.9276);">6</span>
<span id="t81" class="t" style="left:600.07px;top:200.95px;font:normal 5.90px/8.26px 'Liberation Mono', monospace;color:#2a2a2a;letter-spacing:0.000px;transform-origin:0 50%;transform:scaleX(0.9305);">0.11822</span>
<span id="t82" class="t" style="left:457.11px;top:213.95px;font:normal 5.90px/8.26px 'Liberation Mono', monospace;color:#222;letter-spacing:0.000px;transform-origin:0 50%;transform:scaleX(0.9276);">3</span>
<span id="t83" class="t" style="left:491.58px;top:213.95px;font:normal 5.90px/8.26px 'Liberation Mono', monospace;color:#2a2a2a;letter-spacing:0.000px;transform-origin:0 50%;transform:scaleX(0.9307);">-0.38830</span>
<span id="t84" class="t" style="left:562.31px;top:213.95px;font:normal 5.90px/8.26px 'Liberation Mono', monospace;color:#222;letter-spacing:0.000px;transform-origin:0 50%;transform:scaleX(0.9276);">4</span>
<span id="t85" class="t" style="left:596.78px;top:213.95px;font:normal 5.90px/8.26px 'Liberation Mono', monospace;color:#2a2a2a;letter-spacing:0.000px;transform-origin:0 50%;transform:scaleX(0.9307);">-0.38830</span>
<span id="t86" class="t" style="left:667.51px;top:213.95px;font:normal 5.90px/8.26px 'Liberation Mono', monospace;color:#222;letter-spacing:0.000px;transform-origin:0 50%;transform:scaleX(0.9276);">5</span>
<span id="t87" class="t" style="left:701.98px;top:213.95px;font:normal 5.90px/8.26px 'Liberation Mono', monospace;color:#2a2a2a;letter-spacing:0.000px;transform-origin:0 50%;transform:scaleX(0.9307);">-0.38830</span>
<span id="t88" class="t" style="left:562.31px;top:226.95px;font:normal 5.90px/8.26px 'Liberation Mono', monospace;color:#222;letter-spacing:0.000px;transform-origin:0 50%;transform:scaleX(0.9276);">2</span>
<span id="t89" class="t" style="left:596.78px;top:226.95px;font:normal 5.90px/8.26px 'Liberation Mono', monospace;color:#2a2a2a;letter-spacing:0.000px;transform-origin:0 50%;transform:scaleX(0.9307);">-0.69039</span>
<span id="t90" class="t" style="left:562.31px;top:240.95px;font:normal 5.90px/8.26px 'Liberation Mono', monospace;color:#222;letter-spacing:0.000px;transform-origin:0 50%;transform:scaleX(0.9276);">1</span>
<span id="t91" class="t" style="left:593.49px;top:240.95px;font:normal 5.90px/8.26px 'Liberation Mono', monospace;color:#2a2a2a;letter-spacing:0.000px;transform-origin:0 50%;transform:scaleX(0.9303);">-10.16709</span>
</div>
</body></html>
